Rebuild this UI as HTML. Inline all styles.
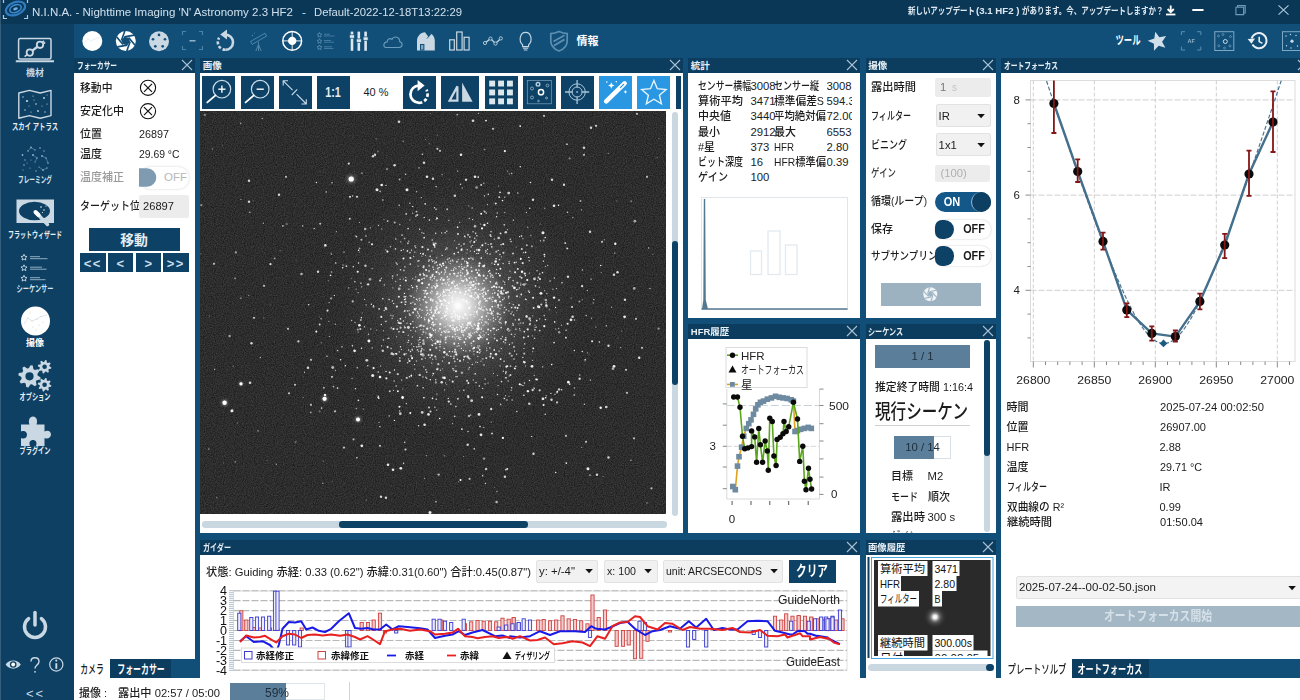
<!DOCTYPE html>
<html lang="ja"><head><meta charset="utf-8"><title>N.I.N.A.</title>
<style>
html,body{margin:0;padding:0;}
body{width:1300px;height:700px;overflow:hidden;background:#124f78;font-family:"Liberation Sans","Noto Sans CJK JP",sans-serif;position:relative;}
#app{position:absolute;left:0;top:0;width:1300px;height:700px;overflow:hidden;}
#app>div,#app>svg,#app>span{position:absolute;}
.t{white-space:nowrap;display:block;font-weight:500;}
svg{overflow:visible;}
svg text{font-family:"Liberation Sans","Noto Sans CJK JP",sans-serif;}
</style></head><body><div id="app">
<div style="left:0px;top:0px;width:1300px;height:24px;background:#0b3757;"></div>
<div style="left:0px;top:24px;width:74px;height:676px;background:#0e4063;"></div>
<div style="left:74px;top:24px;width:1226px;height:34px;background:#124f78;"></div>
<div style="left:74px;top:678px;width:1226px;height:22px;background:#fff;"></div>
<span id="t0" class="t" style="left:32px;transform-origin:0 50%;top:2.8px;font-size:11.6px;line-height:17.4px;color:#cfe0ec;transform:scaleX(0.9932);">N.I.N.A. - Nighttime Imaging 'N' Astronomy 2.3 HF2</span>
<span id="t1" class="t" style="left:302px;transform-origin:0 50%;top:2.8px;font-size:11.6px;line-height:17.4px;color:#cfe0ec;">-</span>
<span id="t2" class="t" style="left:314px;transform-origin:0 50%;top:2.8px;font-size:11.6px;line-height:17.4px;color:#cfe0ec;transform:scaleX(0.9729);">Default-2022-12-18T13:22:29</span>
<span id="t3" class="t" style="left:908.4px;transform-origin:0 50%;top:4.4px;font-size:9.5px;line-height:14.2px;color:#dce8f0;font-weight:bold;transform:scaleX(0.7835);">新しいアップデート</span>
<span id="t4" class="t" style="left:975.5px;transform-origin:0 50%;top:4.4px;font-size:9.5px;line-height:14.2px;color:#dce8f0;font-weight:bold;transform:scaleX(1.0172);">(3.1 HF2 )</span>
<span id="t5" class="t" style="left:1022px;transform-origin:0 50%;top:4.4px;font-size:9.5px;line-height:14.2px;color:#dce8f0;font-weight:bold;transform:scaleX(0.7880);">があります。今、アップデートしますか？</span>
<span id="t6" class="t" style="left:35px;transform-origin:50% 50%;top:66.5px;font-size:9px;line-height:13.5px;color:#c5d8e5;font-weight:bold;transform:translateX(-50%) scaleX(1.0000);">機材</span>
<span id="t7" class="t" style="left:35px;transform-origin:50% 50%;top:120.5px;font-size:9px;line-height:13.5px;color:#e8f0f6;font-weight:bold;transform:translateX(-50%) scaleX(0.7041);">スカイ アトラス</span>
<span id="t8" class="t" style="left:35px;transform-origin:50% 50%;top:174.4px;font-size:9px;line-height:13.5px;color:#d5e3ee;font-weight:bold;transform:translateX(-50%) scaleX(0.6294);">フレーミング</span>
<span id="t9" class="t" style="left:35px;transform-origin:50% 50%;top:228.9px;font-size:9px;line-height:13.5px;color:#e8f0f6;font-weight:bold;transform:translateX(-50%) scaleX(0.6665);">フラットウィザード</span>
<span id="t10" class="t" style="left:35px;transform-origin:50% 50%;top:283.4px;font-size:9px;line-height:13.5px;color:#d5e3ee;font-weight:bold;transform:translateX(-50%) scaleX(0.6886);">シーケンサー</span>
<span id="t11" class="t" style="left:35px;transform-origin:50% 50%;top:337.4px;font-size:9px;line-height:13.5px;color:#ffffff;font-weight:bold;transform:translateX(-50%) scaleX(1.0000);">撮像</span>
<span id="t12" class="t" style="left:35px;transform-origin:50% 50%;top:391.4px;font-size:9px;line-height:13.5px;color:#e8f0f6;font-weight:bold;transform:translateX(-50%) scaleX(0.6886);">オプション</span>
<span id="t13" class="t" style="left:35px;transform-origin:50% 50%;top:445.4px;font-size:9px;line-height:13.5px;color:#e8f0f6;font-weight:bold;transform:translateX(-50%) scaleX(0.6886);">プラグイン</span>
<span id="t14" class="t" style="left:35.5px;transform-origin:50% 50%;top:684.2px;font-size:13px;line-height:19.5px;color:#c5d8e5;letter-spacing:2px;transform:translateX(-50%) scaleX(1.0000);">&lt;&lt;</span>
<span id="t15" class="t" style="left:587.5px;transform-origin:50% 50%;top:32.8px;font-size:11px;line-height:16.5px;color:#ffffff;font-weight:bold;transform:translateX(-50%) scaleX(1.0000);">情報</span>
<span id="t16" class="t" style="left:1128px;transform-origin:50% 50%;top:32.0px;font-size:12px;line-height:18.0px;color:#ffffff;font-weight:bold;transform:translateX(-50%) scaleX(0.6941);">ツール</span>
<div style="left:74px;top:58px;width:120.5px;height:14.5px;background:#0c3c5e;"></div>
<div style="left:74px;top:72.5px;width:120.5px;height:586.5px;background:#fff;"></div>
<span id="t17" class="t" style="left:76.8px;transform-origin:0 50%;top:59.4px;font-size:9.5px;line-height:14.2px;color:#e8f0f5;font-weight:bold;transform:scaleX(0.7016);">フォーカサー</span>
<svg style="left:181.0px;top:59.25px" width="12" height="12" viewBox="0 0 12 12"><path d="M1 1L11 11M11 1L1 11" stroke="#a9c2d2" stroke-width="1.1" fill="none"/></svg>
<span id="t18" class="t" style="left:79.5px;transform-origin:0 50%;top:79.8px;font-size:11.3px;line-height:17.0px;color:#1c1c1c;transform:scaleX(0.9585);">移動中</span>
<span id="t19" class="t" style="left:79.5px;transform-origin:0 50%;top:103.2px;font-size:11.3px;line-height:17.0px;color:#1c1c1c;transform:scaleX(0.9734);">安定化中</span>
<span id="t20" class="t" style="left:79.5px;transform-origin:0 50%;top:125.5px;font-size:11.3px;line-height:17.0px;color:#1c1c1c;transform:scaleX(0.9730);">位置</span>
<span id="t21" class="t" style="left:138.8px;transform-origin:0 50%;top:125.5px;font-size:11.3px;line-height:17.0px;color:#1c1c1c;transform:scaleX(0.9547);">26897</span>
<span id="t22" class="t" style="left:79.5px;transform-origin:0 50%;top:145.5px;font-size:11.3px;line-height:17.0px;color:#1c1c1c;transform:scaleX(0.9730);">温度</span>
<span id="t23" class="t" style="left:138.8px;transform-origin:0 50%;top:145.5px;font-size:11.3px;line-height:17.0px;color:#1c1c1c;transform:scaleX(0.9185);">29.69 °C</span>
<span id="t24" class="t" style="left:79.5px;transform-origin:0 50%;top:169.0px;font-size:11.3px;line-height:17.0px;color:#9a9a9a;transform:scaleX(0.9734);">温度補正</span>
<div style="left:139.5px;top:166.5px;width:49px;height:22px;background:#fff;border-radius:11px;box-shadow:0 0 2.5px #cfcfcf;"></div>
<span id="t25" class="t" style="left:164px;transform-origin:0 50%;top:168.9px;font-size:11.5px;line-height:17.2px;color:#b8b8b8;">OFF</span>
<span id="t26" class="t" style="left:79.5px;transform-origin:0 50%;top:197.5px;font-size:11.3px;line-height:17.0px;color:#1c1c1c;transform:scaleX(0.8850);clip-path:inset(0 13% 0 0);">ターゲット位置</span>
<div style="left:139px;top:195px;width:50px;height:22.5px;background:#ececec;border-radius:2px;"></div>
<span id="t27" class="t" style="left:143px;transform-origin:0 50%;top:197.5px;font-size:11.3px;line-height:17.0px;color:#1c1c1c;transform:scaleX(0.9866);">26897</span>
<div style="left:88.5px;top:227.5px;width:91.5px;height:23px;background:#0d4166;"></div>
<span id="t28" class="t" style="left:134px;transform-origin:50% 50%;top:229.5px;font-size:14px;line-height:21.0px;color:#e4edf3;font-weight:bold;transform:translateX(-50%) scaleX(0.9893);">移動</span>
<div style="left:80px;top:253px;width:25.5px;height:19px;background:#0d4166;"></div>
<span id="t29" class="t" style="left:92.75px;transform-origin:50% 50%;top:253.8px;font-size:13px;line-height:19.5px;color:#c9dce8;font-weight:bold;letter-spacing:1.5px;transform:translateX(-50%) scaleX(1.0000);">&lt;&lt;</span>
<div style="left:107.5px;top:253px;width:25.5px;height:19px;background:#0d4166;"></div>
<span id="t30" class="t" style="left:120.25px;transform-origin:50% 50%;top:253.8px;font-size:13px;line-height:19.5px;color:#c9dce8;font-weight:bold;transform:translateX(-50%) scaleX(1.0000);">&lt;</span>
<div style="left:135.5px;top:253px;width:25.5px;height:19px;background:#0d4166;"></div>
<span id="t31" class="t" style="left:148.25px;transform-origin:50% 50%;top:253.8px;font-size:13px;line-height:19.5px;color:#c9dce8;font-weight:bold;transform:translateX(-50%) scaleX(1.0000);">&gt;</span>
<div style="left:163px;top:253px;width:25.5px;height:19px;background:#0d4166;"></div>
<span id="t32" class="t" style="left:175.75px;transform-origin:50% 50%;top:253.8px;font-size:13px;line-height:19.5px;color:#c9dce8;font-weight:bold;letter-spacing:1.5px;transform:translateX(-50%) scaleX(1.0000);">&gt;&gt;</span>
<div style="left:74px;top:659px;width:36px;height:19px;background:#fff;"></div>
<span id="t33" class="t" style="left:91.8px;transform-origin:50% 50%;top:661.3px;font-size:12px;line-height:18.0px;color:#1c1c1c;transform:translateX(-50%) scaleX(0.6525);">カメラ</span>
<div style="left:110px;top:659px;width:60.5px;height:19px;background:#0c3c5e;"></div>
<span id="t34" class="t" style="left:141.2px;transform-origin:50% 50%;top:661.3px;font-size:12px;line-height:18.0px;color:#ffffff;font-weight:bold;transform:translateX(-50%) scaleX(0.6596);">フォーカサー</span>
<div style="left:200px;top:58px;width:482.5px;height:14.5px;background:#0c3c5e;"></div>
<div style="left:200px;top:72.5px;width:482.5px;height:460.0px;background:#fff;"></div>
<span id="t35" class="t" style="left:202.8px;transform-origin:0 50%;top:59.4px;font-size:9.5px;line-height:14.2px;color:#e8f0f5;font-weight:bold;">画像</span>
<svg style="left:669.0px;top:59.25px" width="12" height="12" viewBox="0 0 12 12"><path d="M1 1L11 11M11 1L1 11" stroke="#a9c2d2" stroke-width="1.1" fill="none"/></svg>
<div style="left:202px;top:75.5px;width:33px;height:33.5px;background:#0d4166;"></div>
<div style="left:240.5px;top:75.5px;width:33px;height:33.5px;background:#0d4166;"></div>
<div style="left:278.5px;top:75.5px;width:33px;height:33.5px;background:#0d4166;"></div>
<div style="left:316.5px;top:75.5px;width:33px;height:33.5px;background:#0d4166;"></div>
<div style="left:402.5px;top:75.5px;width:33px;height:33.5px;background:#0d4166;"></div>
<div style="left:441px;top:75.5px;width:38px;height:33.5px;background:#0d4166;"></div>
<div style="left:484.5px;top:75.5px;width:33px;height:33.5px;background:#0d4166;"></div>
<div style="left:522.5px;top:75.5px;width:33px;height:33.5px;background:#0d4166;"></div>
<div style="left:560.5px;top:75.5px;width:33px;height:33.5px;background:#0d4166;"></div>
<div style="left:599px;top:75.5px;width:33px;height:33.5px;background:#2a97e2;"></div>
<div style="left:637px;top:75.5px;width:33px;height:33.5px;background:#2a97e2;"></div>
<div style="left:676px;top:75.5px;width:4.5px;height:33.5px;background:#0d4166;"></div>
<span id="t36" class="t" style="left:333px;transform-origin:50% 50%;top:81.8px;font-size:14.5px;line-height:21.8px;color:#e4edf3;font-weight:bold;transform:translateX(-50%) scaleX(0.7440);">1:1</span>
<span id="t37" class="t" style="left:376px;transform-origin:50% 50%;top:83.9px;font-size:11.5px;line-height:17.2px;color:#1c1c1c;transform:translateX(-50%) scaleX(0.9535);">40 %</span>
<svg style="left:200px;top:111.2px" width="466" height="403.8" viewBox="0 0 466 403.8"><defs><filter id="grain" color-interpolation-filters="sRGB" x="0" y="0" width="100%" height="100%"><feTurbulence type="fractalNoise" baseFrequency="0.9" numOctaves="2" seed="3" result="n"/><feColorMatrix in="n" type="matrix" values="0.22 0 0 0 0.066  0.22 0 0 0 0.066  0.22 0 0 0 0.066  0 0 0 0 1"/></filter><filter id="sb" x="-5%" y="-5%" width="110%" height="110%"><feGaussianBlur stdDeviation="0.6"/></filter><radialGradient id="core" cx="50%" cy="50%" r="50%"><stop offset="0" stop-color="#fff" stop-opacity="1"/><stop offset="0.1" stop-color="#fff" stop-opacity="0.92"/><stop offset="0.22" stop-color="#fff" stop-opacity="0.55"/><stop offset="0.4" stop-color="#fff" stop-opacity="0.26"/><stop offset="0.65" stop-color="#fff" stop-opacity="0.08"/><stop offset="1" stop-color="#fff" stop-opacity="0"/></radialGradient><radialGradient id="core2" cx="50%" cy="50%" r="50%"><stop offset="0" stop-color="#fff" stop-opacity="1"/><stop offset="0.22" stop-color="#fff" stop-opacity="0.95"/><stop offset="0.42" stop-color="#fff" stop-opacity="0.6"/><stop offset="0.7" stop-color="#fff" stop-opacity="0.22"/><stop offset="1" stop-color="#fff" stop-opacity="0"/></radialGradient><clipPath id="sc"><rect x="0" y="0" width="466" height="403"/></clipPath></defs><g clip-path="url(#sc)"><rect width="466" height="403.8" fill="#272727"/><rect width="466" height="403.8" filter="url(#grain)"/><circle cx="258" cy="194.8" r="125" fill="url(#core)" opacity="0.5"/><circle cx="258" cy="194.8" r="52" fill="url(#core2)" opacity="0.72"/><circle cx="151.2" cy="68.0" r="7.5" fill="url(#core)" opacity="0.9"/><circle cx="24.6" cy="291.8" r="6" fill="url(#core)" opacity="0.9"/><circle cx="124.6" cy="287.8" r="5.5" fill="url(#core)" opacity="0.9"/><circle cx="158.0" cy="308.4" r="5.5" fill="url(#core)" opacity="0.9"/><circle cx="41.0" cy="272.8" r="4" fill="url(#core)" opacity="0.9"/><g filter="url(#sb)" fill="#fff"><circle cx="151.2" cy="68.0" r="2.6" opacity="1"/><circle cx="24.6" cy="291.8" r="2.2" opacity="1"/><circle cx="124.6" cy="287.8" r="2.1" opacity="1"/><circle cx="158.0" cy="308.4" r="2.0" opacity="1"/><circle cx="41.0" cy="272.8" r="1.6" opacity="1"/><circle cx="32.0" cy="299.8" r="1.5" opacity="0.9"/><circle cx="50.0" cy="271.8" r="1.3" opacity="0.8"/><circle cx="49.0" cy="69.8" r="1.2" opacity="0.8"/><circle cx="49.0" cy="90.8" r="1.2" opacity="0.8"/><circle cx="79.0" cy="83.8" r="1.2" opacity="0.8"/><circle cx="86.0" cy="65.8" r="1.1" opacity="0.7"/><circle cx="177.0" cy="78.8" r="1.5" opacity="0.9"/><circle cx="207.0" cy="78.8" r="1.5" opacity="0.9"/><circle cx="150.0" cy="85.8" r="1.1" opacity="0.8"/><circle cx="157.0" cy="85.8" r="1.1" opacity="0.8"/><circle cx="175.0" cy="43.8" r="1.2" opacity="0.8"/><circle cx="199.0" cy="10.8" r="1.3" opacity="0.8"/><circle cx="273.0" cy="9.8" r="1.3" opacity="0.8"/><circle cx="261.0" cy="43.8" r="1.3" opacity="0.9"/><circle cx="240.0" cy="39.8" r="1.1" opacity="0.7"/><circle cx="224.0" cy="51.8" r="1.2" opacity="0.8"/><circle cx="227.0" cy="65.8" r="1.3" opacity="0.9"/><circle cx="233.0" cy="67.8" r="1.2" opacity="0.8"/><circle cx="266.0" cy="68.8" r="1.2" opacity="0.8"/><circle cx="275.0" cy="65.8" r="1.3" opacity="0.9"/><circle cx="293.0" cy="17.8" r="1.1" opacity="0.7"/><circle cx="344.0" cy="4.8" r="1.1" opacity="0.7"/><circle cx="384.0" cy="36.8" r="1.2" opacity="0.8"/><circle cx="384.0" cy="43.8" r="1.1" opacity="0.7"/><circle cx="391.0" cy="16.8" r="1.2" opacity="0.8"/><circle cx="396.0" cy="14.8" r="1.1" opacity="0.8"/><circle cx="437.0" cy="2.8" r="1.1" opacity="0.7"/><circle cx="447.0" cy="65.8" r="1.1" opacity="0.7"/><circle cx="364.0" cy="73.8" r="1.2" opacity="0.8"/><circle cx="352.0" cy="68.8" r="1.2" opacity="0.8"/><circle cx="333.0" cy="88.8" r="1.2" opacity="0.8"/><circle cx="354.0" cy="94.8" r="1.3" opacity="0.9"/><circle cx="343.0" cy="121.8" r="1.5" opacity="0.9"/><circle cx="390.0" cy="120.8" r="1.2" opacity="0.8"/><circle cx="402.0" cy="130.8" r="1.1" opacity="0.7"/><circle cx="414.0" cy="163.8" r="1.2" opacity="0.8"/><circle cx="368.0" cy="165.8" r="1.2" opacity="0.8"/><circle cx="425.0" cy="188.8" r="1.2" opacity="0.8"/><circle cx="14.0" cy="152.8" r="1.1" opacity="0.7"/><circle cx="118.0" cy="160.8" r="1.2" opacity="0.8"/><circle cx="64.0" cy="174.8" r="1.1" opacity="0.7"/><circle cx="54.0" cy="206.8" r="1.1" opacity="0.7"/><circle cx="51.5" cy="232.3" r="1.2" opacity="0.8"/><circle cx="88.0" cy="217.8" r="1.1" opacity="0.7"/><circle cx="108.0" cy="256.8" r="1.3" opacity="0.8"/><circle cx="111.0" cy="248.8" r="1.1" opacity="0.7"/><circle cx="154.6" cy="239.8" r="1.4" opacity="0.9"/><circle cx="172.7" cy="264.6" r="1.5" opacity="0.9"/><circle cx="132.0" cy="265.8" r="1.1" opacity="0.7"/><circle cx="89.0" cy="282.3" r="1.1" opacity="0.7"/><circle cx="95.0" cy="273.8" r="1.1" opacity="0.7"/><circle cx="111.0" cy="293.8" r="1.1" opacity="0.7"/><circle cx="135.0" cy="300.3" r="1.1" opacity="0.7"/><circle cx="180.0" cy="334.8" r="1.1" opacity="0.7"/><circle cx="188.0" cy="353.8" r="1.3" opacity="0.9"/><circle cx="193.0" cy="358.8" r="1.3" opacity="0.9"/><circle cx="200.8" cy="357.3" r="1.4" opacity="0.9"/><circle cx="181.0" cy="385.8" r="1.2" opacity="0.8"/><circle cx="186.0" cy="386.8" r="1.2" opacity="0.8"/><circle cx="230.0" cy="401.5" r="1.5" opacity="0.9"/><circle cx="224.6" cy="313.8" r="1.3" opacity="0.9"/><circle cx="228.5" cy="303.4" r="1.3" opacity="0.9"/><circle cx="279.0" cy="303.4" r="1.4" opacity="0.9"/><circle cx="281.0" cy="323.8" r="1.4" opacity="0.9"/><circle cx="267.7" cy="333.8" r="1.2" opacity="0.8"/><circle cx="269.6" cy="367.8" r="1.1" opacity="0.7"/><circle cx="305.0" cy="365.8" r="1.2" opacity="0.8"/><circle cx="333.5" cy="342.8" r="1.2" opacity="0.8"/><circle cx="343.0" cy="287.8" r="1.4" opacity="0.9"/><circle cx="351.5" cy="288.8" r="1.2" opacity="0.8"/><circle cx="332.0" cy="255.3" r="1.4" opacity="0.9"/><circle cx="388.0" cy="357.8" r="1.5" opacity="0.9"/><circle cx="397.0" cy="363.8" r="1.2" opacity="0.8"/><circle cx="408.5" cy="346.5" r="1.2" opacity="0.8"/><circle cx="414.0" cy="255.3" r="1.4" opacity="0.9"/><circle cx="426.0" cy="258.8" r="1.1" opacity="0.7"/><circle cx="427.0" cy="281.8" r="1.1" opacity="0.7"/><circle cx="379.6" cy="267.8" r="1.2" opacity="0.8"/><circle cx="371.0" cy="208.8" r="1.4" opacity="0.9"/><circle cx="424.6" cy="205.8" r="1.4" opacity="0.9"/><circle cx="436.0" cy="207.8" r="1.1" opacity="0.7"/><circle cx="442.0" cy="236.8" r="1.1" opacity="0.7"/><circle cx="408.5" cy="234.8" r="1.2" opacity="0.8"/><circle cx="366.0" cy="324.8" r="1.1" opacity="0.7"/><circle cx="386.0" cy="330.8" r="1.1" opacity="0.7"/><circle cx="451.5" cy="377.3" r="1.1" opacity="0.7"/><circle cx="434.0" cy="327.3" r="1.1" opacity="0.7"/><circle cx="280.0" cy="224.6" r="0.81" opacity="0.58"/><circle cx="221.0" cy="235.2" r="0.62" opacity="0.81"/><circle cx="245.0" cy="200.4" r="0.62" opacity="0.59"/><circle cx="279.2" cy="155.6" r="0.62" opacity="0.68"/><circle cx="320.7" cy="174.1" r="0.76" opacity="0.76"/><circle cx="267.7" cy="183.2" r="0.64" opacity="0.63"/><circle cx="249.9" cy="215.2" r="0.95" opacity="0.65"/><circle cx="219.0" cy="149.7" r="0.67" opacity="0.83"/><circle cx="274.1" cy="200.9" r="0.63" opacity="0.88"/><circle cx="240.0" cy="235.7" r="0.76" opacity="0.79"/><circle cx="267.9" cy="161.2" r="0.84" opacity="0.69"/><circle cx="198.9" cy="185.7" r="1.01" opacity="0.90"/><circle cx="292.9" cy="190.6" r="0.62" opacity="0.77"/><circle cx="309.2" cy="265.0" r="0.71" opacity="0.55"/><circle cx="264.6" cy="125.2" r="0.76" opacity="0.96"/><circle cx="245.5" cy="161.0" r="0.77" opacity="0.84"/><circle cx="283.8" cy="155.3" r="1.10" opacity="0.80"/><circle cx="324.3" cy="220.6" r="0.85" opacity="0.87"/><circle cx="234.9" cy="296.2" r="0.67" opacity="0.88"/><circle cx="246.6" cy="197.5" r="0.63" opacity="0.61"/><circle cx="259.9" cy="178.5" r="0.62" opacity="0.69"/><circle cx="287.6" cy="164.7" r="0.62" opacity="0.79"/><circle cx="300.4" cy="157.8" r="0.95" opacity="0.95"/><circle cx="228.3" cy="211.8" r="0.66" opacity="0.96"/><circle cx="269.3" cy="216.6" r="0.63" opacity="0.68"/><circle cx="215.0" cy="168.6" r="0.64" opacity="0.51"/><circle cx="227.3" cy="226.8" r="0.75" opacity="0.98"/><circle cx="182.8" cy="187.7" r="0.78" opacity="0.88"/><circle cx="271.2" cy="185.5" r="0.92" opacity="0.96"/><circle cx="180.6" cy="255.0" r="0.68" opacity="0.60"/><circle cx="320.1" cy="219.6" r="0.62" opacity="0.67"/><circle cx="244.0" cy="216.1" r="0.62" opacity="0.50"/><circle cx="278.2" cy="209.3" r="0.66" opacity="0.54"/><circle cx="159.5" cy="111.5" r="0.62" opacity="0.69"/><circle cx="232.0" cy="223.7" r="0.62" opacity="0.95"/><circle cx="209.2" cy="199.6" r="0.62" opacity="0.60"/><circle cx="254.4" cy="232.6" r="0.96" opacity="0.64"/><circle cx="269.3" cy="191.3" r="0.73" opacity="0.63"/><circle cx="313.6" cy="204.1" r="0.73" opacity="0.99"/><circle cx="216.7" cy="80.7" r="0.64" opacity="0.75"/><circle cx="261.6" cy="169.4" r="0.73" opacity="0.92"/><circle cx="264.4" cy="231.3" r="0.95" opacity="0.99"/><circle cx="299.2" cy="86.1" r="0.95" opacity="0.90"/><circle cx="227.4" cy="191.5" r="0.66" opacity="0.54"/><circle cx="255.7" cy="206.9" r="0.64" opacity="0.89"/><circle cx="301.8" cy="177.0" r="1.15" opacity="0.98"/><circle cx="265.5" cy="233.7" r="0.63" opacity="0.66"/><circle cx="237.3" cy="174.9" r="1.04" opacity="0.94"/><circle cx="229.2" cy="154.8" r="0.93" opacity="0.59"/><circle cx="317.8" cy="157.9" r="0.92" opacity="0.91"/><circle cx="279.8" cy="238.6" r="0.92" opacity="0.73"/><circle cx="356.5" cy="177.6" r="0.67" opacity="0.76"/><circle cx="297.4" cy="264.3" r="0.62" opacity="0.63"/><circle cx="319.8" cy="273.3" r="0.96" opacity="0.99"/><circle cx="216.5" cy="249.9" r="0.74" opacity="0.62"/><circle cx="267.8" cy="193.0" r="0.81" opacity="0.82"/><circle cx="290.1" cy="162.4" r="0.96" opacity="0.67"/><circle cx="249.3" cy="225.3" r="0.64" opacity="0.84"/><circle cx="229.1" cy="210.5" r="0.62" opacity="0.97"/><circle cx="219.4" cy="204.9" r="0.76" opacity="0.97"/><circle cx="297.3" cy="173.1" r="0.72" opacity="0.82"/><circle cx="312.1" cy="201.0" r="0.69" opacity="0.65"/><circle cx="259.9" cy="188.9" r="0.63" opacity="0.80"/><circle cx="181.3" cy="167.2" r="0.65" opacity="0.82"/><circle cx="270.3" cy="140.1" r="0.62" opacity="0.83"/><circle cx="252.6" cy="225.7" r="0.91" opacity="0.81"/><circle cx="261.7" cy="138.2" r="1.06" opacity="0.78"/><circle cx="193.7" cy="192.6" r="0.72" opacity="0.89"/><circle cx="211.1" cy="185.2" r="0.71" opacity="0.98"/><circle cx="313.0" cy="142.5" r="1.09" opacity="0.69"/><circle cx="312.5" cy="175.1" r="0.98" opacity="0.62"/><circle cx="236.7" cy="202.7" r="0.62" opacity="0.68"/><circle cx="249.1" cy="179.2" r="0.92" opacity="0.96"/><circle cx="252.6" cy="170.7" r="0.81" opacity="0.63"/><circle cx="391.1" cy="168.1" r="0.63" opacity="0.98"/><circle cx="214.7" cy="198.2" r="1.16" opacity="0.94"/><circle cx="234.4" cy="205.3" r="0.72" opacity="0.73"/><circle cx="246.1" cy="219.9" r="0.86" opacity="0.53"/><circle cx="204.4" cy="215.2" r="0.62" opacity="0.73"/><circle cx="192.4" cy="189.9" r="0.62" opacity="0.99"/><circle cx="353.0" cy="178.2" r="0.62" opacity="0.70"/><circle cx="260.6" cy="181.0" r="0.64" opacity="0.62"/><circle cx="296.5" cy="171.5" r="0.95" opacity="0.69"/><circle cx="279.9" cy="183.0" r="0.76" opacity="0.89"/><circle cx="276.7" cy="201.7" r="0.84" opacity="0.77"/><circle cx="275.0" cy="188.1" r="0.80" opacity="0.93"/><circle cx="270.0" cy="180.0" r="0.62" opacity="0.95"/><circle cx="232.5" cy="234.3" r="0.75" opacity="0.97"/><circle cx="281.2" cy="218.5" r="0.73" opacity="0.68"/><circle cx="269.5" cy="212.7" r="0.62" opacity="0.66"/><circle cx="245.5" cy="228.5" r="0.90" opacity="0.71"/><circle cx="280.8" cy="240.3" r="0.66" opacity="0.53"/><circle cx="290.3" cy="197.8" r="0.87" opacity="0.83"/><circle cx="230.3" cy="199.1" r="1.08" opacity="0.60"/><circle cx="161.5" cy="237.3" r="0.71" opacity="0.94"/><circle cx="215.0" cy="193.0" r="0.84" opacity="0.99"/><circle cx="277.4" cy="161.8" r="0.85" opacity="0.86"/><circle cx="232.7" cy="229.7" r="0.62" opacity="0.62"/><circle cx="257.0" cy="177.2" r="0.64" opacity="0.64"/><circle cx="268.6" cy="178.9" r="1.01" opacity="0.88"/><circle cx="259.7" cy="228.5" r="0.65" opacity="0.79"/><circle cx="233.8" cy="203.1" r="0.64" opacity="0.99"/><circle cx="260.0" cy="249.9" r="1.12" opacity="0.72"/><circle cx="298.2" cy="195.1" r="0.67" opacity="0.80"/><circle cx="273.9" cy="243.3" r="0.72" opacity="0.51"/><circle cx="286.3" cy="212.1" r="0.68" opacity="0.55"/><circle cx="254.1" cy="205.6" r="0.63" opacity="0.84"/><circle cx="258.2" cy="141.4" r="0.81" opacity="0.90"/><circle cx="155.4" cy="277.7" r="0.65" opacity="0.99"/><circle cx="254.0" cy="170.8" r="0.80" opacity="0.56"/><circle cx="345.2" cy="126.6" r="0.79" opacity="0.90"/><circle cx="324.5" cy="272.0" r="0.73" opacity="0.81"/><circle cx="295.7" cy="92.6" r="0.96" opacity="0.84"/><circle cx="199.6" cy="68.4" r="0.84" opacity="0.68"/><circle cx="266.9" cy="204.3" r="0.66" opacity="0.60"/><circle cx="153.3" cy="155.7" r="0.79" opacity="0.86"/><circle cx="184.2" cy="199.6" r="0.62" opacity="0.93"/><circle cx="171.4" cy="193.2" r="0.74" opacity="0.87"/><circle cx="256.5" cy="177.7" r="0.64" opacity="0.58"/><circle cx="253.7" cy="162.5" r="0.63" opacity="0.90"/><circle cx="219.8" cy="228.5" r="0.71" opacity="0.88"/><circle cx="190.5" cy="135.6" r="0.80" opacity="0.58"/><circle cx="257.4" cy="218.9" r="0.88" opacity="0.72"/><circle cx="316.9" cy="199.3" r="0.62" opacity="0.70"/><circle cx="232.2" cy="129.0" r="0.83" opacity="0.71"/><circle cx="205.5" cy="206.3" r="0.70" opacity="0.61"/><circle cx="302.9" cy="326.9" r="1.14" opacity="0.98"/><circle cx="247.6" cy="197.5" r="0.95" opacity="0.99"/><circle cx="252.4" cy="240.7" r="0.63" opacity="0.98"/><circle cx="232.2" cy="180.7" r="0.62" opacity="0.82"/><circle cx="268.1" cy="174.0" r="0.72" opacity="0.96"/><circle cx="267.1" cy="269.7" r="1.04" opacity="0.80"/><circle cx="270.2" cy="195.1" r="0.71" opacity="0.79"/><circle cx="280.9" cy="221.9" r="0.66" opacity="0.72"/><circle cx="372.0" cy="196.0" r="0.89" opacity="0.94"/><circle cx="278.3" cy="185.0" r="0.86" opacity="0.97"/><circle cx="233.5" cy="219.4" r="0.67" opacity="1.00"/><circle cx="218.6" cy="240.6" r="0.69" opacity="0.70"/><circle cx="270.6" cy="203.8" r="0.97" opacity="0.71"/><circle cx="254.8" cy="226.1" r="0.72" opacity="0.66"/><circle cx="297.9" cy="183.9" r="1.02" opacity="0.93"/><circle cx="315.1" cy="161.3" r="1.09" opacity="0.83"/><circle cx="334.9" cy="218.8" r="0.87" opacity="0.79"/><circle cx="204.1" cy="127.8" r="0.64" opacity="0.56"/><circle cx="235.1" cy="198.7" r="0.66" opacity="0.71"/><circle cx="341.7" cy="182.6" r="0.64" opacity="0.87"/><circle cx="224.2" cy="182.5" r="0.67" opacity="0.64"/><circle cx="264.8" cy="219.1" r="1.05" opacity="0.81"/><circle cx="283.2" cy="178.5" r="1.17" opacity="0.79"/><circle cx="266.6" cy="216.8" r="0.62" opacity="0.74"/><circle cx="259.4" cy="214.3" r="0.64" opacity="0.84"/><circle cx="257.7" cy="60.1" r="0.68" opacity="0.77"/><circle cx="219.0" cy="231.8" r="0.66" opacity="0.57"/><circle cx="291.7" cy="188.1" r="0.62" opacity="0.81"/><circle cx="301.3" cy="145.8" r="0.63" opacity="0.70"/><circle cx="231.9" cy="213.3" r="0.69" opacity="0.98"/><circle cx="340.1" cy="113.0" r="0.62" opacity="0.55"/><circle cx="320.5" cy="148.2" r="0.70" opacity="0.84"/><circle cx="296.5" cy="176.3" r="0.96" opacity="0.95"/><circle cx="283.0" cy="214.6" r="0.63" opacity="0.82"/><circle cx="327.2" cy="168.9" r="0.86" opacity="0.87"/><circle cx="170.8" cy="218.0" r="0.74" opacity="0.55"/><circle cx="268.4" cy="286.3" r="1.07" opacity="0.87"/><circle cx="283.2" cy="220.2" r="0.64" opacity="0.86"/><circle cx="316.6" cy="243.2" r="0.62" opacity="0.82"/><circle cx="211.6" cy="232.9" r="0.63" opacity="0.85"/><circle cx="255.1" cy="203.0" r="0.70" opacity="0.99"/><circle cx="309.1" cy="150.4" r="0.71" opacity="0.68"/><circle cx="289.3" cy="187.1" r="0.85" opacity="0.72"/><circle cx="246.4" cy="194.9" r="0.83" opacity="0.77"/><circle cx="241.6" cy="167.0" r="1.07" opacity="0.68"/><circle cx="250.8" cy="206.1" r="0.68" opacity="0.88"/><circle cx="266.4" cy="168.2" r="0.88" opacity="0.81"/><circle cx="286.7" cy="189.5" r="0.65" opacity="0.94"/><circle cx="263.5" cy="224.5" r="0.90" opacity="0.71"/><circle cx="277.9" cy="241.2" r="0.63" opacity="0.77"/><circle cx="325.9" cy="172.8" r="0.62" opacity="0.76"/><circle cx="287.4" cy="190.1" r="0.62" opacity="0.56"/><circle cx="244.7" cy="205.1" r="1.04" opacity="0.96"/><circle cx="341.3" cy="193.5" r="1.08" opacity="0.73"/><circle cx="283.5" cy="184.2" r="0.88" opacity="0.54"/><circle cx="206.3" cy="242.7" r="0.67" opacity="0.73"/><circle cx="284.6" cy="195.3" r="0.64" opacity="0.74"/><circle cx="280.4" cy="189.8" r="0.63" opacity="0.74"/><circle cx="304.7" cy="101.5" r="0.69" opacity="0.56"/><circle cx="223.3" cy="229.4" r="1.07" opacity="0.66"/><circle cx="290.6" cy="170.9" r="0.62" opacity="0.77"/><circle cx="268.8" cy="94.9" r="0.62" opacity="0.55"/><circle cx="273.2" cy="186.7" r="0.64" opacity="0.91"/><circle cx="179.9" cy="315.7" r="0.64" opacity="0.99"/><circle cx="253.0" cy="257.6" r="0.86" opacity="0.72"/><circle cx="292.3" cy="195.6" r="0.89" opacity="0.97"/><circle cx="320.9" cy="172.1" r="0.62" opacity="0.68"/><circle cx="306.1" cy="181.8" r="1.11" opacity="0.76"/><circle cx="228.6" cy="208.2" r="0.71" opacity="0.97"/><circle cx="266.9" cy="169.5" r="0.88" opacity="0.94"/><circle cx="185.8" cy="138.9" r="0.65" opacity="0.72"/><circle cx="266.2" cy="156.2" r="0.62" opacity="0.66"/><circle cx="259.5" cy="279.8" r="0.62" opacity="0.55"/><circle cx="231.7" cy="244.3" r="1.14" opacity="0.96"/><circle cx="286.9" cy="211.2" r="0.62" opacity="0.81"/><circle cx="183.4" cy="219.8" r="0.63" opacity="0.77"/><circle cx="228.0" cy="138.5" r="0.89" opacity="0.95"/><circle cx="309.7" cy="242.6" r="0.98" opacity="0.71"/><circle cx="216.8" cy="235.8" r="0.88" opacity="0.66"/><circle cx="258.9" cy="226.1" r="0.63" opacity="0.96"/><circle cx="230.2" cy="246.7" r="0.67" opacity="1.00"/><circle cx="264.2" cy="245.7" r="0.94" opacity="0.87"/><circle cx="237.1" cy="198.0" r="0.95" opacity="0.94"/><circle cx="254.0" cy="208.4" r="0.62" opacity="0.66"/><circle cx="313.1" cy="169.7" r="0.67" opacity="0.95"/><circle cx="255.0" cy="240.9" r="0.91" opacity="0.98"/><circle cx="240.3" cy="183.0" r="0.79" opacity="0.67"/><circle cx="284.0" cy="225.8" r="0.63" opacity="0.69"/><circle cx="221.7" cy="145.2" r="0.63" opacity="0.52"/><circle cx="241.4" cy="161.6" r="0.63" opacity="0.72"/><circle cx="266.2" cy="167.7" r="0.74" opacity="0.57"/><circle cx="241.3" cy="207.3" r="0.74" opacity="0.87"/><circle cx="268.4" cy="211.5" r="0.84" opacity="0.77"/><circle cx="245.7" cy="226.4" r="1.11" opacity="0.72"/><circle cx="221.2" cy="239.5" r="0.68" opacity="0.95"/><circle cx="271.3" cy="232.2" r="0.87" opacity="0.66"/><circle cx="264.0" cy="190.7" r="0.68" opacity="0.94"/><circle cx="290.7" cy="166.1" r="0.70" opacity="0.64"/><circle cx="248.4" cy="191.7" r="0.80" opacity="0.97"/><circle cx="243.6" cy="181.4" r="0.67" opacity="0.81"/><circle cx="252.9" cy="218.3" r="0.73" opacity="0.97"/><circle cx="236.3" cy="196.1" r="0.94" opacity="0.99"/><circle cx="278.0" cy="214.6" r="1.10" opacity="0.99"/><circle cx="305.8" cy="211.0" r="1.07" opacity="0.76"/><circle cx="287.5" cy="138.3" r="0.63" opacity="0.92"/><circle cx="232.9" cy="211.5" r="0.98" opacity="0.94"/><circle cx="263.5" cy="221.0" r="0.68" opacity="0.82"/><circle cx="288.3" cy="223.5" r="0.64" opacity="0.90"/><circle cx="399.3" cy="231.0" r="0.75" opacity="0.91"/><circle cx="265.5" cy="183.0" r="0.62" opacity="0.85"/><circle cx="218.1" cy="155.1" r="0.65" opacity="0.77"/><circle cx="203.7" cy="221.3" r="0.81" opacity="0.78"/><circle cx="304.2" cy="201.4" r="0.79" opacity="0.80"/><circle cx="260.7" cy="164.5" r="0.92" opacity="0.79"/><circle cx="231.1" cy="199.2" r="0.62" opacity="0.62"/><circle cx="296.6" cy="219.2" r="0.69" opacity="0.81"/><circle cx="248.4" cy="184.0" r="0.62" opacity="0.90"/><circle cx="164.6" cy="188.3" r="0.62" opacity="0.81"/><circle cx="297.9" cy="182.5" r="0.62" opacity="0.95"/><circle cx="291.0" cy="120.7" r="0.63" opacity="0.99"/><circle cx="307.5" cy="181.4" r="1.06" opacity="0.64"/><circle cx="345.5" cy="155.3" r="0.62" opacity="0.74"/><circle cx="305.9" cy="266.8" r="1.04" opacity="0.70"/><circle cx="323.0" cy="274.6" r="0.72" opacity="0.97"/><circle cx="255.6" cy="223.3" r="0.72" opacity="0.72"/><circle cx="263.8" cy="207.3" r="0.63" opacity="0.98"/><circle cx="316.4" cy="151.1" r="0.63" opacity="0.92"/><circle cx="236.1" cy="190.7" r="0.80" opacity="0.74"/><circle cx="135.8" cy="152.0" r="0.76" opacity="0.96"/><circle cx="279.3" cy="193.9" r="0.79" opacity="0.76"/><circle cx="248.8" cy="290.6" r="1.16" opacity="0.84"/><circle cx="261.7" cy="155.7" r="0.69" opacity="0.65"/><circle cx="339.7" cy="219.6" r="0.95" opacity="0.69"/><circle cx="325.5" cy="188.2" r="0.76" opacity="0.88"/><circle cx="295.0" cy="195.2" r="0.62" opacity="0.63"/><circle cx="199.0" cy="220.8" r="0.72" opacity="0.96"/><circle cx="261.4" cy="217.5" r="0.81" opacity="0.53"/><circle cx="254.6" cy="199.1" r="0.62" opacity="0.74"/><circle cx="231.5" cy="179.9" r="0.77" opacity="0.66"/><circle cx="193.0" cy="204.8" r="0.62" opacity="0.98"/><circle cx="276.9" cy="219.8" r="0.62" opacity="0.87"/><circle cx="283.9" cy="72.3" r="0.68" opacity="0.70"/><circle cx="252.3" cy="187.7" r="0.75" opacity="0.74"/><circle cx="193.5" cy="217.9" r="1.09" opacity="0.90"/><circle cx="284.6" cy="176.9" r="0.62" opacity="0.82"/><circle cx="261.4" cy="237.4" r="0.62" opacity="0.92"/><circle cx="249.0" cy="191.9" r="1.09" opacity="0.63"/><circle cx="235.6" cy="177.3" r="0.72" opacity="0.87"/><circle cx="305.5" cy="284.7" r="0.65" opacity="0.72"/><circle cx="270.0" cy="185.1" r="0.92" opacity="0.90"/><circle cx="262.2" cy="188.7" r="0.88" opacity="0.79"/><circle cx="176.6" cy="219.1" r="0.63" opacity="0.60"/><circle cx="288.3" cy="202.1" r="0.66" opacity="0.91"/><circle cx="301.1" cy="133.6" r="0.86" opacity="0.70"/><circle cx="205.0" cy="216.6" r="0.92" opacity="0.82"/><circle cx="236.9" cy="169.5" r="1.12" opacity="0.67"/><circle cx="391.5" cy="207.2" r="0.64" opacity="0.68"/><circle cx="338.5" cy="166.5" r="0.88" opacity="0.73"/><circle cx="194.4" cy="309.4" r="0.64" opacity="0.97"/><circle cx="234.6" cy="134.2" r="0.82" opacity="0.99"/><circle cx="284.4" cy="154.3" r="0.84" opacity="0.95"/><circle cx="250.6" cy="150.1" r="0.76" opacity="0.72"/><circle cx="236.7" cy="174.7" r="0.62" opacity="0.97"/><circle cx="282.3" cy="198.8" r="0.62" opacity="0.97"/><circle cx="282.7" cy="224.5" r="0.62" opacity="0.55"/><circle cx="207.4" cy="139.9" r="0.84" opacity="0.90"/><circle cx="243.1" cy="185.6" r="0.66" opacity="0.93"/><circle cx="340.4" cy="129.8" r="0.62" opacity="0.95"/><circle cx="263.9" cy="214.9" r="0.62" opacity="0.55"/><circle cx="302.5" cy="89.6" r="0.80" opacity="0.94"/><circle cx="242.5" cy="257.8" r="0.62" opacity="0.60"/><circle cx="282.7" cy="277.4" r="0.65" opacity="0.77"/><circle cx="257.5" cy="205.9" r="0.64" opacity="0.90"/><circle cx="240.3" cy="230.8" r="1.12" opacity="0.81"/><circle cx="170.5" cy="116.8" r="0.62" opacity="0.77"/><circle cx="264.7" cy="150.1" r="0.66" opacity="0.89"/><circle cx="269.7" cy="247.8" r="1.00" opacity="0.59"/><circle cx="309.0" cy="285.3" r="0.62" opacity="0.66"/><circle cx="346.9" cy="182.7" r="0.62" opacity="0.80"/><circle cx="272.9" cy="147.1" r="0.63" opacity="0.81"/><circle cx="277.4" cy="161.4" r="0.64" opacity="0.98"/><circle cx="265.7" cy="227.8" r="0.85" opacity="0.81"/><circle cx="243.7" cy="178.8" r="0.62" opacity="0.92"/><circle cx="275.6" cy="122.4" r="0.79" opacity="0.74"/><circle cx="223.5" cy="220.9" r="1.03" opacity="0.59"/><circle cx="395.9" cy="216.1" r="0.63" opacity="0.70"/><circle cx="108.7" cy="193.7" r="0.67" opacity="0.96"/><circle cx="227.7" cy="202.2" r="0.73" opacity="0.91"/><circle cx="204.8" cy="127.2" r="0.66" opacity="0.73"/><circle cx="272.1" cy="174.2" r="0.82" opacity="0.91"/><circle cx="233.4" cy="204.5" r="0.91" opacity="0.84"/><circle cx="235.5" cy="200.1" r="1.03" opacity="0.68"/><circle cx="249.0" cy="220.8" r="0.85" opacity="0.94"/><circle cx="272.2" cy="215.3" r="0.64" opacity="0.73"/><circle cx="286.8" cy="239.5" r="0.65" opacity="0.66"/><circle cx="324.2" cy="242.6" r="1.12" opacity="0.60"/><circle cx="300.1" cy="190.6" r="0.93" opacity="0.90"/><circle cx="273.4" cy="237.3" r="0.80" opacity="0.60"/><circle cx="235.6" cy="213.1" r="0.62" opacity="0.76"/><circle cx="224.2" cy="106.4" r="0.72" opacity="0.86"/><circle cx="288.7" cy="231.7" r="0.78" opacity="0.77"/><circle cx="329.2" cy="149.7" r="0.69" opacity="0.84"/><circle cx="181.6" cy="234.8" r="0.63" opacity="0.90"/><circle cx="278.2" cy="66.1" r="0.85" opacity="0.95"/><circle cx="211.5" cy="139.2" r="0.70" opacity="0.72"/><circle cx="312.2" cy="231.9" r="0.68" opacity="0.92"/><circle cx="203.4" cy="138.7" r="0.64" opacity="0.77"/><circle cx="223.2" cy="162.5" r="0.68" opacity="0.88"/><circle cx="242.4" cy="172.7" r="0.91" opacity="0.76"/><circle cx="308.6" cy="186.9" r="0.62" opacity="0.83"/><circle cx="263.1" cy="170.2" r="1.09" opacity="0.82"/><circle cx="239.2" cy="185.6" r="0.74" opacity="0.90"/><circle cx="223.8" cy="155.1" r="0.96" opacity="0.82"/><circle cx="300.1" cy="181.0" r="0.63" opacity="0.88"/><circle cx="261.4" cy="153.2" r="0.62" opacity="0.99"/><circle cx="295.6" cy="208.4" r="0.64" opacity="0.76"/><circle cx="249.5" cy="199.4" r="0.68" opacity="0.89"/><circle cx="254.2" cy="233.3" r="0.63" opacity="0.91"/><circle cx="268.6" cy="247.0" r="0.94" opacity="0.76"/><circle cx="278.4" cy="215.7" r="0.91" opacity="0.93"/><circle cx="192.1" cy="207.3" r="0.75" opacity="0.68"/><circle cx="232.3" cy="165.1" r="0.95" opacity="0.93"/><circle cx="244.4" cy="240.8" r="0.74" opacity="0.62"/><circle cx="189.8" cy="280.3" r="0.99" opacity="0.70"/><circle cx="257.1" cy="235.3" r="0.69" opacity="0.65"/><circle cx="257.0" cy="189.4" r="0.64" opacity="0.69"/><circle cx="222.1" cy="199.3" r="0.69" opacity="0.86"/><circle cx="212.1" cy="247.0" r="1.08" opacity="0.95"/><circle cx="265.8" cy="180.5" r="1.05" opacity="0.92"/><circle cx="269.9" cy="174.2" r="0.80" opacity="0.53"/><circle cx="266.8" cy="192.1" r="0.81" opacity="0.69"/><circle cx="271.2" cy="210.8" r="0.63" opacity="0.92"/><circle cx="280.7" cy="226.1" r="1.05" opacity="0.92"/><circle cx="278.5" cy="178.6" r="0.78" opacity="0.92"/><circle cx="314.6" cy="151.6" r="0.92" opacity="0.94"/><circle cx="247.9" cy="168.8" r="0.73" opacity="0.91"/><circle cx="292.6" cy="164.3" r="0.75" opacity="0.70"/><circle cx="278.1" cy="218.1" r="0.71" opacity="0.57"/><circle cx="288.3" cy="232.4" r="0.71" opacity="0.81"/><circle cx="294.5" cy="153.5" r="0.62" opacity="0.94"/><circle cx="212.5" cy="176.5" r="0.82" opacity="0.94"/><circle cx="221.7" cy="214.5" r="1.12" opacity="0.58"/><circle cx="213.7" cy="145.3" r="0.62" opacity="0.85"/><circle cx="325.5" cy="164.7" r="0.65" opacity="0.99"/><circle cx="205.0" cy="199.8" r="1.04" opacity="0.55"/><circle cx="201.2" cy="139.5" r="0.66" opacity="0.95"/><circle cx="217.6" cy="201.1" r="0.73" opacity="0.92"/><circle cx="230.8" cy="206.2" r="0.68" opacity="0.83"/><circle cx="229.0" cy="296.5" r="0.96" opacity="0.76"/><circle cx="250.9" cy="245.3" r="0.72" opacity="0.99"/><circle cx="276.2" cy="129.2" r="0.65" opacity="0.72"/><circle cx="227.2" cy="176.8" r="0.80" opacity="0.92"/><circle cx="255.5" cy="180.9" r="1.03" opacity="0.83"/><circle cx="253.1" cy="209.4" r="0.62" opacity="0.66"/><circle cx="223.1" cy="142.9" r="0.92" opacity="0.97"/><circle cx="210.3" cy="153.1" r="0.79" opacity="0.89"/><circle cx="231.8" cy="139.9" r="0.63" opacity="0.88"/><circle cx="261.8" cy="148.0" r="0.62" opacity="0.65"/><circle cx="260.2" cy="181.3" r="1.06" opacity="0.87"/><circle cx="276.1" cy="159.0" r="0.92" opacity="0.83"/><circle cx="247.4" cy="225.1" r="0.68" opacity="0.72"/><circle cx="229.0" cy="160.0" r="1.08" opacity="0.57"/><circle cx="315.3" cy="208.8" r="0.62" opacity="0.93"/><circle cx="310.3" cy="166.4" r="0.69" opacity="0.53"/><circle cx="222.3" cy="172.2" r="1.09" opacity="0.99"/><circle cx="215.4" cy="220.1" r="0.62" opacity="0.87"/><circle cx="275.2" cy="218.3" r="0.62" opacity="0.51"/><circle cx="311.8" cy="244.8" r="1.12" opacity="0.59"/><circle cx="346.2" cy="284.8" r="0.62" opacity="0.90"/><circle cx="254.7" cy="164.0" r="0.63" opacity="0.56"/><circle cx="237.0" cy="107.2" r="0.99" opacity="0.90"/><circle cx="244.5" cy="181.1" r="0.85" opacity="0.79"/><circle cx="289.9" cy="187.7" r="0.86" opacity="0.52"/><circle cx="252.1" cy="186.8" r="0.95" opacity="0.59"/><circle cx="253.3" cy="159.4" r="0.63" opacity="0.95"/><circle cx="305.4" cy="212.9" r="0.67" opacity="0.84"/><circle cx="237.3" cy="154.2" r="0.62" opacity="0.93"/><circle cx="233.0" cy="163.6" r="0.79" opacity="0.77"/><circle cx="267.6" cy="154.7" r="1.10" opacity="0.92"/><circle cx="242.5" cy="250.0" r="0.62" opacity="0.99"/><circle cx="294.4" cy="128.1" r="0.65" opacity="0.85"/><circle cx="169.1" cy="131.2" r="0.65" opacity="0.78"/><circle cx="158.4" cy="289.4" r="0.83" opacity="0.85"/><circle cx="309.3" cy="63.0" r="0.64" opacity="0.51"/><circle cx="228.5" cy="210.0" r="0.76" opacity="0.93"/><circle cx="392.1" cy="230.2" r="0.97" opacity="0.93"/><circle cx="144.0" cy="141.1" r="0.64" opacity="0.95"/><circle cx="217.3" cy="104.0" r="1.06" opacity="0.74"/><circle cx="239.5" cy="188.5" r="0.93" opacity="0.66"/><circle cx="337.1" cy="159.7" r="0.63" opacity="0.85"/><circle cx="186.2" cy="210.2" r="0.63" opacity="0.69"/><circle cx="280.6" cy="113.1" r="0.70" opacity="0.59"/><circle cx="272.1" cy="96.9" r="0.63" opacity="0.84"/><circle cx="367.5" cy="101.3" r="0.73" opacity="0.80"/><circle cx="281.0" cy="250.2" r="0.63" opacity="0.65"/><circle cx="207.6" cy="251.8" r="0.75" opacity="0.76"/><circle cx="289.9" cy="236.9" r="0.62" opacity="1.00"/><circle cx="290.7" cy="219.7" r="0.80" opacity="0.92"/><circle cx="237.1" cy="180.6" r="0.66" opacity="0.82"/><circle cx="269.1" cy="197.1" r="1.16" opacity="0.95"/><circle cx="211.5" cy="174.6" r="0.64" opacity="0.92"/><circle cx="301.1" cy="180.2" r="0.90" opacity="0.93"/><circle cx="289.8" cy="202.3" r="0.63" opacity="0.65"/><circle cx="276.5" cy="200.7" r="0.75" opacity="0.95"/><circle cx="303.8" cy="179.5" r="1.05" opacity="0.57"/><circle cx="208.0" cy="231.3" r="0.62" opacity="0.99"/><circle cx="227.7" cy="182.2" r="0.80" opacity="0.98"/><circle cx="201.4" cy="238.4" r="0.69" opacity="0.64"/><circle cx="287.5" cy="201.9" r="0.64" opacity="0.74"/><circle cx="365.9" cy="226.7" r="0.92" opacity="0.89"/><circle cx="326.6" cy="188.7" r="0.62" opacity="0.63"/><circle cx="339.8" cy="163.0" r="0.83" opacity="0.71"/><circle cx="261.1" cy="134.9" r="0.62" opacity="0.73"/><circle cx="281.4" cy="217.3" r="0.71" opacity="0.64"/><circle cx="277.7" cy="218.8" r="0.83" opacity="0.52"/><circle cx="285.2" cy="268.1" r="0.62" opacity="0.97"/><circle cx="285.8" cy="182.9" r="1.00" opacity="0.96"/><circle cx="235.0" cy="202.5" r="0.62" opacity="0.97"/><circle cx="178.5" cy="114.4" r="0.70" opacity="0.73"/><circle cx="151.6" cy="209.5" r="0.79" opacity="0.63"/><circle cx="286.5" cy="205.1" r="0.86" opacity="0.83"/><circle cx="275.0" cy="177.4" r="0.64" opacity="0.77"/><circle cx="254.6" cy="219.3" r="0.98" opacity="0.73"/><circle cx="231.6" cy="196.2" r="0.65" opacity="0.97"/><circle cx="280.0" cy="191.9" r="0.62" opacity="0.96"/><circle cx="275.4" cy="262.6" r="0.71" opacity="0.71"/><circle cx="267.9" cy="225.3" r="0.66" opacity="1.00"/><circle cx="252.9" cy="214.3" r="1.04" opacity="0.57"/><circle cx="235.8" cy="271.5" r="1.14" opacity="0.53"/><circle cx="202.8" cy="278.1" r="0.62" opacity="0.51"/><circle cx="148.7" cy="176.9" r="0.63" opacity="0.78"/><circle cx="230.8" cy="182.1" r="0.62" opacity="0.65"/><circle cx="236.1" cy="108.3" r="0.63" opacity="0.58"/><circle cx="242.6" cy="182.7" r="0.72" opacity="0.70"/><circle cx="235.7" cy="176.4" r="0.85" opacity="0.93"/><circle cx="275.9" cy="251.1" r="0.62" opacity="0.90"/><circle cx="250.2" cy="152.6" r="0.62" opacity="0.93"/><circle cx="279.1" cy="163.4" r="1.00" opacity="0.80"/><circle cx="266.7" cy="189.5" r="0.71" opacity="0.95"/><circle cx="271.1" cy="224.8" r="0.97" opacity="0.75"/><circle cx="240.0" cy="213.1" r="0.77" opacity="0.51"/><circle cx="207.0" cy="212.3" r="0.73" opacity="0.61"/><circle cx="290.4" cy="124.0" r="1.00" opacity="0.73"/><circle cx="199.8" cy="246.9" r="0.89" opacity="0.57"/><circle cx="382.4" cy="158.9" r="0.71" opacity="0.81"/><circle cx="204.4" cy="182.4" r="0.62" opacity="0.99"/><circle cx="270.6" cy="221.8" r="0.62" opacity="0.69"/><circle cx="361.5" cy="214.0" r="0.62" opacity="0.89"/><circle cx="286.3" cy="197.9" r="0.77" opacity="0.84"/><circle cx="242.1" cy="144.4" r="0.62" opacity="0.95"/><circle cx="335.1" cy="216.6" r="0.62" opacity="0.81"/><circle cx="248.3" cy="244.6" r="0.62" opacity="0.77"/><circle cx="237.8" cy="182.1" r="1.00" opacity="0.63"/><circle cx="256.7" cy="137.0" r="0.63" opacity="0.94"/><circle cx="220.5" cy="214.6" r="0.98" opacity="0.82"/><circle cx="298.3" cy="179.7" r="0.91" opacity="0.73"/><circle cx="241.8" cy="221.3" r="0.69" opacity="0.99"/><circle cx="344.4" cy="143.6" r="0.95" opacity="0.95"/><circle cx="241.8" cy="193.1" r="1.11" opacity="0.98"/><circle cx="229.4" cy="209.6" r="0.80" opacity="0.75"/><circle cx="308.0" cy="217.4" r="0.69" opacity="0.81"/><circle cx="265.3" cy="203.3" r="1.13" opacity="0.92"/><circle cx="282.4" cy="134.2" r="1.02" opacity="0.96"/><circle cx="249.3" cy="184.4" r="0.64" opacity="0.88"/><circle cx="225.1" cy="186.1" r="1.07" opacity="0.86"/><circle cx="225.8" cy="190.8" r="0.69" opacity="0.98"/><circle cx="246.0" cy="226.8" r="0.81" opacity="0.61"/><circle cx="317.8" cy="178.4" r="0.72" opacity="0.70"/><circle cx="210.0" cy="184.7" r="0.62" opacity="0.62"/><circle cx="251.6" cy="216.9" r="0.68" opacity="0.71"/><circle cx="285.2" cy="211.1" r="0.74" opacity="0.94"/><circle cx="200.1" cy="168.3" r="0.81" opacity="0.66"/><circle cx="181.3" cy="213.5" r="0.74" opacity="0.85"/><circle cx="239.7" cy="239.3" r="0.64" opacity="0.67"/><circle cx="218.4" cy="229.5" r="0.76" opacity="0.52"/><circle cx="283.8" cy="165.2" r="0.64" opacity="0.83"/><circle cx="246.8" cy="243.5" r="1.15" opacity="0.71"/><circle cx="308.1" cy="269.9" r="0.62" opacity="0.95"/><circle cx="301.3" cy="212.1" r="0.67" opacity="0.78"/><circle cx="322.9" cy="246.4" r="0.63" opacity="0.99"/><circle cx="305.7" cy="262.5" r="0.66" opacity="0.74"/><circle cx="203.5" cy="147.5" r="0.99" opacity="0.94"/><circle cx="254.2" cy="142.7" r="0.88" opacity="0.91"/><circle cx="268.9" cy="147.5" r="0.85" opacity="0.97"/><circle cx="274.0" cy="178.4" r="0.62" opacity="0.91"/><circle cx="196.9" cy="195.6" r="1.12" opacity="0.84"/><circle cx="267.5" cy="152.1" r="1.01" opacity="0.85"/><circle cx="217.9" cy="206.8" r="0.70" opacity="0.90"/><circle cx="230.5" cy="216.7" r="0.75" opacity="0.76"/><circle cx="266.7" cy="159.3" r="0.99" opacity="0.81"/><circle cx="277.0" cy="236.7" r="0.65" opacity="0.63"/><circle cx="205.8" cy="166.3" r="0.62" opacity="0.97"/><circle cx="278.9" cy="164.3" r="0.97" opacity="0.99"/><circle cx="231.9" cy="207.4" r="1.06" opacity="0.52"/><circle cx="243.7" cy="188.8" r="0.72" opacity="0.97"/><circle cx="168.1" cy="173.3" r="1.17" opacity="0.82"/><circle cx="236.7" cy="146.8" r="0.67" opacity="0.74"/><circle cx="221.1" cy="243.3" r="1.10" opacity="0.88"/><circle cx="302.4" cy="225.7" r="0.67" opacity="0.76"/><circle cx="205.8" cy="169.4" r="1.02" opacity="0.99"/><circle cx="210.6" cy="212.9" r="0.79" opacity="1.00"/><circle cx="219.5" cy="187.6" r="0.95" opacity="0.65"/><circle cx="295.0" cy="189.9" r="0.96" opacity="0.81"/><circle cx="275.2" cy="181.7" r="0.84" opacity="0.94"/><circle cx="135.4" cy="259.3" r="0.63" opacity="0.71"/><circle cx="204.7" cy="193.2" r="0.63" opacity="0.65"/><circle cx="204.9" cy="155.8" r="0.66" opacity="1.00"/><circle cx="323.1" cy="212.0" r="0.68" opacity="0.92"/><circle cx="244.7" cy="161.8" r="0.62" opacity="0.72"/><circle cx="159.6" cy="137.4" r="0.82" opacity="0.66"/><circle cx="208.9" cy="178.2" r="0.64" opacity="0.87"/><circle cx="313.2" cy="193.8" r="0.76" opacity="0.77"/><circle cx="270.6" cy="213.2" r="0.90" opacity="0.60"/><circle cx="268.0" cy="212.7" r="0.73" opacity="0.94"/><circle cx="280.4" cy="136.2" r="0.62" opacity="0.52"/><circle cx="217.4" cy="274.7" r="0.86" opacity="0.74"/><circle cx="255.2" cy="220.4" r="0.62" opacity="0.97"/><circle cx="222.7" cy="242.7" r="0.69" opacity="0.76"/><circle cx="270.7" cy="184.7" r="0.76" opacity="0.99"/><circle cx="223.9" cy="163.7" r="0.64" opacity="0.56"/><circle cx="210.3" cy="302.1" r="1.04" opacity="0.93"/><circle cx="229.0" cy="173.6" r="1.12" opacity="0.81"/><circle cx="233.4" cy="214.6" r="0.86" opacity="0.67"/><circle cx="284.0" cy="169.7" r="0.71" opacity="0.92"/><circle cx="272.8" cy="222.3" r="0.66" opacity="0.65"/><circle cx="225.2" cy="181.9" r="0.62" opacity="0.82"/><circle cx="223.2" cy="218.3" r="0.62" opacity="0.62"/><circle cx="193.6" cy="279.4" r="0.64" opacity="0.66"/><circle cx="260.8" cy="228.5" r="0.62" opacity="0.88"/><circle cx="279.8" cy="226.3" r="0.85" opacity="0.59"/><circle cx="275.2" cy="166.5" r="0.62" opacity="0.78"/><circle cx="296.0" cy="92.2" r="0.63" opacity="0.74"/><circle cx="199.8" cy="249.9" r="1.11" opacity="0.67"/><circle cx="265.5" cy="245.3" r="0.70" opacity="0.62"/><circle cx="252.7" cy="270.6" r="1.04" opacity="0.84"/><circle cx="259.0" cy="234.7" r="0.78" opacity="0.67"/><circle cx="350.9" cy="282.4" r="0.72" opacity="0.83"/><circle cx="262.6" cy="162.2" r="0.67" opacity="0.87"/><circle cx="236.0" cy="248.0" r="0.67" opacity="0.59"/><circle cx="274.1" cy="173.6" r="0.65" opacity="0.87"/><circle cx="237.9" cy="186.8" r="0.66" opacity="0.81"/><circle cx="290.8" cy="208.8" r="0.65" opacity="0.68"/><circle cx="253.2" cy="172.8" r="0.64" opacity="0.76"/><circle cx="326.8" cy="134.2" r="1.00" opacity="0.62"/><circle cx="291.8" cy="201.0" r="0.83" opacity="0.88"/><circle cx="224.0" cy="215.0" r="0.81" opacity="0.89"/><circle cx="276.5" cy="169.1" r="0.66" opacity="0.86"/><circle cx="278.6" cy="212.5" r="1.06" opacity="0.90"/><circle cx="334.9" cy="214.2" r="0.62" opacity="0.64"/><circle cx="248.6" cy="221.1" r="0.67" opacity="0.55"/><circle cx="234.2" cy="167.5" r="0.63" opacity="0.94"/><circle cx="245.7" cy="138.5" r="0.64" opacity="0.78"/><circle cx="214.5" cy="253.6" r="0.62" opacity="0.94"/><circle cx="236.9" cy="283.0" r="0.62" opacity="0.95"/><circle cx="318.9" cy="212.9" r="0.64" opacity="0.61"/><circle cx="282.1" cy="286.3" r="1.06" opacity="0.91"/><circle cx="251.3" cy="176.8" r="0.67" opacity="0.91"/><circle cx="236.7" cy="299.0" r="0.62" opacity="0.98"/><circle cx="299.2" cy="176.0" r="0.84" opacity="0.90"/><circle cx="181.8" cy="117.9" r="0.70" opacity="0.57"/><circle cx="188.8" cy="227.3" r="0.72" opacity="0.97"/><circle cx="259.7" cy="172.3" r="0.62" opacity="0.89"/><circle cx="250.9" cy="293.1" r="0.74" opacity="0.99"/><circle cx="192.9" cy="176.9" r="0.64" opacity="0.57"/><circle cx="223.7" cy="215.4" r="0.63" opacity="0.72"/><circle cx="251.6" cy="172.3" r="0.82" opacity="0.68"/><circle cx="226.3" cy="191.8" r="0.69" opacity="0.98"/><circle cx="245.8" cy="231.6" r="1.02" opacity="0.63"/><circle cx="228.6" cy="244.0" r="0.95" opacity="0.83"/><circle cx="301.5" cy="270.6" r="0.82" opacity="0.85"/><circle cx="262.9" cy="147.8" r="0.97" opacity="0.61"/><circle cx="235.4" cy="221.1" r="0.63" opacity="0.57"/><circle cx="269.3" cy="226.6" r="0.85" opacity="0.79"/><circle cx="248.0" cy="213.9" r="0.70" opacity="0.75"/><circle cx="281.8" cy="206.0" r="0.62" opacity="1.00"/><circle cx="333.3" cy="237.3" r="0.86" opacity="0.99"/><circle cx="303.5" cy="230.7" r="0.71" opacity="0.78"/><circle cx="230.9" cy="187.5" r="0.62" opacity="0.97"/><circle cx="210.4" cy="147.0" r="1.09" opacity="0.87"/><circle cx="258.8" cy="226.4" r="0.62" opacity="0.54"/><circle cx="307.5" cy="118.7" r="0.65" opacity="0.65"/><circle cx="296.3" cy="140.7" r="1.07" opacity="0.64"/><circle cx="304.2" cy="113.8" r="0.88" opacity="0.73"/><circle cx="270.6" cy="170.9" r="0.65" opacity="0.75"/><circle cx="219.0" cy="235.5" r="0.97" opacity="0.68"/><circle cx="244.6" cy="189.0" r="0.79" opacity="0.94"/><circle cx="322.7" cy="152.2" r="1.10" opacity="0.81"/><circle cx="286.6" cy="237.1" r="0.65" opacity="0.84"/><circle cx="250.7" cy="177.6" r="0.63" opacity="0.78"/><circle cx="277.4" cy="199.6" r="0.69" opacity="0.66"/><circle cx="339.4" cy="196.2" r="0.98" opacity="0.95"/><circle cx="172.2" cy="236.9" r="0.64" opacity="0.87"/><circle cx="210.8" cy="219.5" r="0.66" opacity="0.78"/><circle cx="291.0" cy="133.0" r="1.05" opacity="0.64"/><circle cx="224.5" cy="206.9" r="0.75" opacity="0.74"/><circle cx="282.5" cy="208.9" r="0.65" opacity="0.79"/><circle cx="382.1" cy="175.2" r="1.12" opacity="0.86"/><circle cx="354.1" cy="231.7" r="0.83" opacity="0.85"/><circle cx="225.7" cy="179.8" r="1.11" opacity="0.80"/><circle cx="237.0" cy="258.5" r="0.66" opacity="0.96"/><circle cx="262.8" cy="206.2" r="0.83" opacity="0.78"/><circle cx="247.5" cy="178.7" r="0.67" opacity="0.84"/><circle cx="213.9" cy="186.6" r="0.75" opacity="0.76"/><circle cx="267.4" cy="214.3" r="1.03" opacity="0.83"/><circle cx="272.3" cy="178.5" r="0.64" opacity="0.60"/><circle cx="257.5" cy="248.3" r="0.71" opacity="0.83"/><circle cx="230.4" cy="181.6" r="0.62" opacity="0.81"/><circle cx="311.8" cy="223.6" r="0.68" opacity="0.58"/><circle cx="288.6" cy="160.4" r="0.74" opacity="0.90"/><circle cx="324.6" cy="251.4" r="1.16" opacity="0.90"/><circle cx="268.2" cy="176.8" r="0.67" opacity="0.65"/><circle cx="267.2" cy="138.7" r="0.62" opacity="0.92"/><circle cx="259.4" cy="211.0" r="0.67" opacity="0.53"/><circle cx="272.3" cy="253.4" r="0.65" opacity="0.89"/><circle cx="293.0" cy="166.3" r="0.79" opacity="0.95"/><circle cx="308.9" cy="166.7" r="1.01" opacity="0.64"/><circle cx="211.3" cy="264.8" r="0.90" opacity="0.88"/><circle cx="335.7" cy="268.1" r="0.67" opacity="0.90"/><circle cx="336.2" cy="216.1" r="0.78" opacity="0.60"/><circle cx="276.7" cy="142.5" r="0.62" opacity="0.97"/><circle cx="255.9" cy="265.7" r="0.63" opacity="0.78"/><circle cx="159.3" cy="141.1" r="0.62" opacity="0.53"/><circle cx="264.8" cy="174.7" r="0.63" opacity="0.83"/><circle cx="244.4" cy="163.2" r="0.67" opacity="0.63"/><circle cx="130.5" cy="164.3" r="0.84" opacity="0.93"/><circle cx="252.6" cy="202.8" r="0.62" opacity="0.81"/><circle cx="298.5" cy="75.0" r="0.62" opacity="0.65"/><circle cx="212.7" cy="102.1" r="0.67" opacity="0.80"/><circle cx="272.5" cy="174.2" r="0.67" opacity="0.95"/><circle cx="315.0" cy="223.3" r="0.65" opacity="0.67"/><circle cx="136.4" cy="120.7" r="0.62" opacity="0.64"/><circle cx="218.3" cy="202.7" r="0.76" opacity="0.76"/><circle cx="298.0" cy="196.3" r="0.76" opacity="0.73"/><circle cx="247.0" cy="197.6" r="1.15" opacity="0.56"/><circle cx="246.2" cy="173.7" r="0.64" opacity="0.70"/><circle cx="254.0" cy="245.3" r="0.75" opacity="0.82"/><circle cx="245.3" cy="189.9" r="0.91" opacity="0.95"/><circle cx="195.8" cy="128.0" r="0.80" opacity="0.75"/><circle cx="267.8" cy="162.5" r="1.01" opacity="0.98"/><circle cx="233.3" cy="262.6" r="0.90" opacity="0.90"/><circle cx="223.0" cy="156.2" r="0.66" opacity="0.83"/><circle cx="298.9" cy="210.6" r="0.66" opacity="0.73"/><circle cx="224.1" cy="231.1" r="0.64" opacity="0.68"/><circle cx="284.1" cy="223.8" r="0.62" opacity="0.95"/><circle cx="212.8" cy="210.4" r="0.75" opacity="0.72"/><circle cx="282.3" cy="205.2" r="0.65" opacity="0.72"/><circle cx="180.1" cy="169.6" r="1.09" opacity="0.74"/><circle cx="311.3" cy="223.2" r="0.63" opacity="0.84"/><circle cx="264.2" cy="156.2" r="0.69" opacity="0.95"/><circle cx="240.2" cy="196.5" r="1.04" opacity="0.70"/><circle cx="290.6" cy="199.4" r="0.63" opacity="0.70"/><circle cx="273.4" cy="268.9" r="0.68" opacity="0.66"/><circle cx="299.5" cy="148.6" r="0.81" opacity="0.66"/><circle cx="339.3" cy="176.2" r="0.77" opacity="0.58"/><circle cx="330.9" cy="124.5" r="0.66" opacity="0.62"/><circle cx="230.8" cy="188.6" r="1.01" opacity="0.87"/><circle cx="244.2" cy="220.3" r="0.89" opacity="0.87"/><circle cx="239.0" cy="156.3" r="0.66" opacity="0.57"/><circle cx="300.9" cy="207.0" r="0.79" opacity="0.73"/><circle cx="215.8" cy="165.9" r="0.64" opacity="0.79"/><circle cx="266.8" cy="190.5" r="0.75" opacity="1.00"/><circle cx="245.5" cy="184.3" r="0.87" opacity="0.73"/><circle cx="269.3" cy="211.2" r="0.62" opacity="0.92"/><circle cx="265.8" cy="176.9" r="0.68" opacity="0.82"/><circle cx="200.2" cy="174.6" r="0.81" opacity="0.85"/><circle cx="255.9" cy="157.7" r="0.64" opacity="0.89"/><circle cx="272.6" cy="108.6" r="0.65" opacity="0.92"/><circle cx="249.5" cy="240.6" r="0.73" opacity="0.98"/><circle cx="281.6" cy="196.1" r="0.71" opacity="0.87"/><circle cx="197.8" cy="263.2" r="1.16" opacity="0.68"/><circle cx="332.7" cy="240.7" r="0.62" opacity="0.62"/><circle cx="241.0" cy="194.6" r="0.75" opacity="0.65"/><circle cx="282.2" cy="226.8" r="0.63" opacity="0.90"/><circle cx="283.6" cy="199.4" r="0.91" opacity="0.69"/><circle cx="223.8" cy="156.7" r="0.66" opacity="0.93"/><circle cx="236.3" cy="236.9" r="1.05" opacity="0.61"/><circle cx="334.5" cy="227.2" r="0.80" opacity="0.76"/><circle cx="374.3" cy="239.4" r="0.75" opacity="0.77"/><circle cx="268.7" cy="258.2" r="0.64" opacity="0.70"/><circle cx="263.4" cy="239.4" r="0.63" opacity="0.91"/><circle cx="237.5" cy="258.0" r="1.16" opacity="0.67"/><circle cx="290.8" cy="242.7" r="1.00" opacity="0.95"/><circle cx="258.3" cy="162.1" r="0.96" opacity="0.71"/><circle cx="219.8" cy="198.2" r="1.03" opacity="0.64"/><circle cx="197.2" cy="153.3" r="0.70" opacity="0.84"/><circle cx="292.0" cy="322.5" r="1.02" opacity="0.74"/><circle cx="319.6" cy="125.6" r="0.63" opacity="0.95"/><circle cx="293.5" cy="200.1" r="0.62" opacity="0.99"/><circle cx="265.3" cy="190.4" r="0.62" opacity="0.90"/><circle cx="268.1" cy="212.4" r="0.83" opacity="0.59"/><circle cx="292.0" cy="176.3" r="0.86" opacity="0.96"/><circle cx="259.3" cy="207.9" r="0.93" opacity="0.89"/><circle cx="243.7" cy="194.4" r="0.63" opacity="0.78"/><circle cx="279.2" cy="197.4" r="1.16" opacity="0.72"/><circle cx="354.9" cy="283.5" r="0.71" opacity="0.62"/><circle cx="277.8" cy="235.0" r="0.83" opacity="0.63"/><circle cx="173.5" cy="194.4" r="0.62" opacity="0.74"/><circle cx="303.2" cy="170.2" r="0.66" opacity="0.67"/><circle cx="242.1" cy="63.7" r="0.64" opacity="0.65"/><circle cx="288.4" cy="208.4" r="0.62" opacity="0.81"/><circle cx="216.5" cy="179.9" r="0.66" opacity="0.52"/><circle cx="215.0" cy="135.0" r="0.74" opacity="0.83"/><circle cx="333.1" cy="186.7" r="1.01" opacity="0.90"/><circle cx="239.9" cy="233.2" r="0.68" opacity="0.99"/><circle cx="226.0" cy="222.0" r="0.68" opacity="0.63"/><circle cx="252.5" cy="190.5" r="1.07" opacity="0.69"/><circle cx="212.1" cy="238.2" r="0.64" opacity="0.66"/><circle cx="270.3" cy="176.7" r="0.92" opacity="0.97"/><circle cx="252.6" cy="180.4" r="0.65" opacity="0.87"/><circle cx="235.1" cy="245.5" r="1.13" opacity="0.50"/><circle cx="310.2" cy="128.3" r="0.72" opacity="0.85"/><circle cx="236.5" cy="172.7" r="0.88" opacity="0.75"/><circle cx="195.7" cy="242.6" r="0.73" opacity="0.85"/><circle cx="225.8" cy="258.8" r="0.79" opacity="0.83"/><circle cx="234.8" cy="175.6" r="0.64" opacity="0.97"/><circle cx="249.2" cy="147.3" r="0.73" opacity="0.80"/><circle cx="277.1" cy="217.7" r="1.08" opacity="0.82"/><circle cx="204.3" cy="185.7" r="0.95" opacity="0.68"/><circle cx="269.7" cy="171.4" r="0.70" opacity="0.87"/><circle cx="343.7" cy="129.5" r="1.01" opacity="0.56"/><circle cx="278.8" cy="159.3" r="0.95" opacity="0.62"/><circle cx="257.8" cy="219.4" r="0.62" opacity="0.74"/><circle cx="158.1" cy="181.7" r="0.70" opacity="0.59"/><circle cx="301.2" cy="194.0" r="0.84" opacity="0.79"/><circle cx="273.0" cy="148.3" r="0.90" opacity="0.63"/><circle cx="208.5" cy="248.0" r="0.73" opacity="0.68"/><circle cx="235.8" cy="228.6" r="0.67" opacity="0.53"/><circle cx="231.9" cy="182.8" r="0.62" opacity="0.65"/><circle cx="245.6" cy="271.9" r="0.65" opacity="0.69"/><circle cx="351.7" cy="253.6" r="0.80" opacity="0.95"/><circle cx="232.4" cy="207.8" r="0.93" opacity="0.86"/><circle cx="297.8" cy="205.7" r="0.69" opacity="0.75"/><circle cx="235.7" cy="268.8" r="0.68" opacity="0.87"/><circle cx="196.1" cy="275.0" r="0.67" opacity="0.84"/><circle cx="285.8" cy="189.9" r="0.86" opacity="0.75"/><circle cx="223.7" cy="255.8" r="0.62" opacity="0.91"/><circle cx="216.6" cy="188.2" r="0.72" opacity="0.96"/><circle cx="345.4" cy="208.6" r="0.77" opacity="0.79"/><circle cx="284.0" cy="154.8" r="0.68" opacity="0.80"/><circle cx="127.0" cy="245.3" r="0.71" opacity="0.81"/><circle cx="206.2" cy="102.9" r="0.88" opacity="0.76"/><circle cx="251.8" cy="182.0" r="0.75" opacity="0.92"/><circle cx="325.5" cy="254.9" r="0.63" opacity="0.58"/><circle cx="342.7" cy="255.8" r="0.62" opacity="0.91"/><circle cx="313.2" cy="214.1" r="0.83" opacity="0.89"/><circle cx="305.6" cy="211.4" r="0.84" opacity="0.77"/><circle cx="318.9" cy="194.1" r="0.95" opacity="0.95"/><circle cx="245.5" cy="215.5" r="0.73" opacity="0.51"/><circle cx="255.3" cy="227.9" r="0.65" opacity="0.69"/><circle cx="143.0" cy="154.1" r="0.72" opacity="0.77"/><circle cx="252.6" cy="209.4" r="1.00" opacity="0.93"/><circle cx="252.6" cy="312.4" r="0.63" opacity="0.56"/><circle cx="218.8" cy="233.4" r="0.70" opacity="0.80"/><circle cx="217.5" cy="238.9" r="0.94" opacity="0.66"/><circle cx="312.9" cy="212.5" r="0.65" opacity="0.82"/><circle cx="217.3" cy="177.7" r="0.65" opacity="0.70"/><circle cx="232.5" cy="287.3" r="0.85" opacity="0.93"/><circle cx="198.6" cy="211.7" r="1.08" opacity="0.78"/><circle cx="382.3" cy="240.5" r="0.69" opacity="0.87"/><circle cx="268.2" cy="183.2" r="0.62" opacity="0.85"/><circle cx="282.2" cy="182.4" r="0.75" opacity="0.93"/><circle cx="234.0" cy="150.0" r="0.83" opacity="0.71"/><circle cx="273.6" cy="170.4" r="0.62" opacity="0.97"/><circle cx="281.6" cy="211.7" r="0.62" opacity="0.92"/><circle cx="233.7" cy="158.3" r="0.64" opacity="0.97"/><circle cx="300.1" cy="254.8" r="0.62" opacity="0.89"/><circle cx="265.6" cy="182.5" r="0.65" opacity="0.68"/><circle cx="232.6" cy="248.3" r="0.75" opacity="0.63"/><circle cx="278.5" cy="164.0" r="0.62" opacity="0.93"/><circle cx="300.0" cy="203.4" r="0.67" opacity="0.87"/><circle cx="228.7" cy="186.4" r="0.62" opacity="0.79"/><circle cx="183.4" cy="228.9" r="0.83" opacity="0.61"/><circle cx="336.8" cy="268.5" r="1.07" opacity="1.00"/><circle cx="244.1" cy="246.2" r="0.66" opacity="0.91"/><circle cx="304.9" cy="173.3" r="0.62" opacity="0.80"/><circle cx="155.8" cy="124.9" r="0.74" opacity="0.59"/><circle cx="254.8" cy="218.1" r="1.03" opacity="0.94"/><circle cx="285.4" cy="181.2" r="0.62" opacity="0.85"/><circle cx="294.9" cy="181.8" r="0.81" opacity="0.56"/><circle cx="221.4" cy="206.4" r="0.64" opacity="0.91"/><circle cx="264.4" cy="169.1" r="0.65" opacity="0.58"/><circle cx="305.9" cy="226.7" r="0.74" opacity="0.92"/><circle cx="197.6" cy="209.3" r="0.62" opacity="0.81"/><circle cx="245.5" cy="178.8" r="0.62" opacity="0.84"/><circle cx="229.8" cy="222.2" r="0.82" opacity="0.64"/><circle cx="282.8" cy="185.5" r="0.65" opacity="0.94"/><circle cx="128.8" cy="210.4" r="0.62" opacity="0.60"/><circle cx="357.0" cy="281.7" r="0.72" opacity="0.82"/><circle cx="236.0" cy="199.2" r="0.63" opacity="0.82"/><circle cx="222.6" cy="232.8" r="0.63" opacity="0.76"/><circle cx="278.3" cy="215.0" r="0.64" opacity="0.95"/><circle cx="298.5" cy="162.6" r="0.62" opacity="0.98"/><circle cx="271.0" cy="146.9" r="0.76" opacity="0.89"/><circle cx="258.0" cy="164.8" r="0.63" opacity="0.70"/><circle cx="247.6" cy="202.8" r="0.73" opacity="0.71"/><circle cx="379.7" cy="264.0" r="0.76" opacity="0.68"/><circle cx="271.2" cy="135.8" r="0.85" opacity="0.57"/><circle cx="231.9" cy="176.6" r="1.15" opacity="0.55"/><circle cx="234.7" cy="135.9" r="0.95" opacity="0.74"/><circle cx="157.8" cy="218.6" r="1.07" opacity="0.52"/><circle cx="220.8" cy="218.6" r="0.62" opacity="0.69"/><circle cx="221.9" cy="121.7" r="0.62" opacity="0.74"/><circle cx="265.8" cy="217.2" r="0.63" opacity="0.73"/><circle cx="161.4" cy="206.8" r="0.72" opacity="0.92"/><circle cx="200.8" cy="130.8" r="0.63" opacity="0.86"/><circle cx="284.5" cy="84.9" r="0.62" opacity="0.90"/><circle cx="278.8" cy="227.6" r="1.12" opacity="0.88"/><circle cx="314.9" cy="257.4" r="0.96" opacity="0.98"/><circle cx="300.5" cy="122.4" r="0.94" opacity="0.85"/><circle cx="279.1" cy="154.7" r="0.92" opacity="0.95"/><circle cx="292.9" cy="186.3" r="0.73" opacity="0.98"/><circle cx="279.9" cy="190.5" r="0.92" opacity="0.69"/><circle cx="270.7" cy="304.0" r="0.63" opacity="0.79"/><circle cx="226.5" cy="196.2" r="1.05" opacity="0.88"/><circle cx="196.5" cy="242.9" r="0.92" opacity="0.93"/><circle cx="327.4" cy="169.0" r="0.96" opacity="0.77"/><circle cx="246.6" cy="179.1" r="0.97" opacity="0.73"/><circle cx="290.1" cy="143.1" r="0.93" opacity="0.51"/><circle cx="308.9" cy="199.9" r="0.62" opacity="0.93"/><circle cx="222.3" cy="168.0" r="0.70" opacity="0.73"/><circle cx="239.9" cy="217.8" r="0.98" opacity="0.86"/><circle cx="288.2" cy="212.9" r="0.64" opacity="0.89"/><circle cx="233.0" cy="156.1" r="0.94" opacity="0.61"/><circle cx="329.8" cy="213.4" r="0.96" opacity="0.65"/><circle cx="290.8" cy="186.1" r="0.66" opacity="0.68"/><circle cx="149.8" cy="107.7" r="1.04" opacity="0.76"/><circle cx="308.2" cy="180.9" r="0.72" opacity="1.00"/><circle cx="271.6" cy="171.0" r="0.63" opacity="0.82"/><circle cx="283.4" cy="185.9" r="0.70" opacity="0.93"/><circle cx="238.5" cy="220.0" r="0.62" opacity="0.83"/><circle cx="134.3" cy="184.3" r="0.67" opacity="0.97"/><circle cx="186.0" cy="74.4" r="0.62" opacity="0.86"/><circle cx="303.6" cy="182.8" r="0.66" opacity="0.87"/><circle cx="210.5" cy="240.4" r="0.73" opacity="0.88"/><circle cx="223.9" cy="232.9" r="1.14" opacity="0.57"/><circle cx="212.6" cy="95.6" r="0.75" opacity="0.78"/><circle cx="325.6" cy="141.3" r="0.87" opacity="0.91"/><circle cx="251.7" cy="206.8" r="0.62" opacity="0.98"/><circle cx="345.2" cy="303.2" r="0.77" opacity="0.84"/><circle cx="246.0" cy="204.2" r="0.89" opacity="0.87"/><circle cx="260.7" cy="161.3" r="0.65" opacity="0.83"/><circle cx="302.8" cy="188.8" r="0.81" opacity="0.93"/><circle cx="204.4" cy="243.3" r="1.12" opacity="0.89"/><circle cx="245.0" cy="267.1" r="0.63" opacity="0.84"/><circle cx="287.4" cy="93.5" r="0.66" opacity="0.63"/><circle cx="296.6" cy="158.5" r="0.63" opacity="0.90"/><circle cx="247.9" cy="218.7" r="0.62" opacity="0.71"/><circle cx="299.3" cy="186.3" r="1.12" opacity="0.65"/><circle cx="292.5" cy="182.5" r="0.63" opacity="0.73"/><circle cx="294.3" cy="223.3" r="0.64" opacity="0.76"/><circle cx="299.3" cy="185.5" r="0.64" opacity="0.66"/><circle cx="282.8" cy="155.3" r="0.80" opacity="0.92"/><circle cx="279.4" cy="224.2" r="0.89" opacity="0.79"/><circle cx="230.2" cy="145.3" r="0.89" opacity="0.70"/><circle cx="293.3" cy="175.2" r="0.73" opacity="0.71"/><circle cx="253.9" cy="259.3" r="0.91" opacity="0.55"/><circle cx="158.6" cy="152.0" r="0.66" opacity="0.98"/><circle cx="259.4" cy="227.3" r="0.62" opacity="0.83"/><circle cx="219.6" cy="118.2" r="0.68" opacity="0.93"/><circle cx="250.3" cy="214.7" r="0.80" opacity="0.99"/><circle cx="234.1" cy="134.0" r="0.91" opacity="0.76"/><circle cx="211.5" cy="264.2" r="0.67" opacity="0.93"/><circle cx="273.6" cy="230.2" r="1.01" opacity="0.82"/><circle cx="231.7" cy="148.8" r="1.04" opacity="0.62"/><circle cx="293.6" cy="210.0" r="0.68" opacity="0.81"/><circle cx="199.2" cy="94.3" r="0.76" opacity="0.76"/><circle cx="249.1" cy="252.1" r="0.98" opacity="0.92"/><circle cx="323.9" cy="284.2" r="0.82" opacity="0.91"/><circle cx="299.9" cy="164.6" r="1.04" opacity="0.91"/><circle cx="194.7" cy="111.5" r="1.02" opacity="0.62"/><circle cx="235.7" cy="122.4" r="0.78" opacity="0.70"/><circle cx="243.8" cy="184.4" r="0.96" opacity="0.70"/><circle cx="262.9" cy="223.3" r="0.62" opacity="0.88"/><circle cx="194.1" cy="270.0" r="0.85" opacity="0.58"/><circle cx="206.4" cy="292.7" r="0.62" opacity="0.86"/><circle cx="254.2" cy="218.0" r="0.62" opacity="0.78"/><circle cx="278.3" cy="142.4" r="0.62" opacity="0.94"/><circle cx="261.5" cy="215.8" r="0.79" opacity="0.74"/><circle cx="223.2" cy="179.3" r="0.63" opacity="0.93"/><circle cx="273.7" cy="170.6" r="0.94" opacity="0.82"/><circle cx="260.3" cy="182.2" r="0.62" opacity="0.81"/><circle cx="300.0" cy="211.8" r="0.79" opacity="0.90"/><circle cx="208.6" cy="229.5" r="0.72" opacity="0.85"/><circle cx="278.7" cy="172.8" r="1.16" opacity="0.93"/><circle cx="296.1" cy="191.6" r="0.62" opacity="0.80"/><circle cx="235.2" cy="201.4" r="0.83" opacity="0.89"/><circle cx="231.8" cy="233.9" r="0.63" opacity="0.76"/><circle cx="269.9" cy="226.5" r="0.88" opacity="0.81"/><circle cx="273.1" cy="237.7" r="0.85" opacity="0.66"/><circle cx="226.8" cy="182.8" r="0.85" opacity="0.99"/><circle cx="340.0" cy="168.0" r="1.07" opacity="0.90"/><circle cx="332.6" cy="224.9" r="0.63" opacity="0.52"/><circle cx="236.1" cy="75.6" r="0.79" opacity="0.70"/><circle cx="278.7" cy="228.1" r="0.79" opacity="1.00"/><circle cx="293.1" cy="204.5" r="0.63" opacity="0.74"/><circle cx="307.5" cy="60.1" r="0.70" opacity="0.60"/><circle cx="270.2" cy="212.0" r="0.91" opacity="0.80"/><circle cx="160.8" cy="209.0" r="0.96" opacity="0.62"/><circle cx="238.0" cy="186.6" r="0.72" opacity="0.67"/><circle cx="290.3" cy="199.0" r="1.05" opacity="0.89"/><circle cx="252.9" cy="149.9" r="0.67" opacity="0.93"/><circle cx="334.4" cy="277.6" r="0.62" opacity="0.67"/><circle cx="213.8" cy="235.6" r="0.62" opacity="0.94"/><circle cx="164.6" cy="215.8" r="0.62" opacity="0.96"/><circle cx="308.1" cy="218.0" r="0.65" opacity="0.86"/><circle cx="121.1" cy="207.7" r="0.80" opacity="0.67"/><circle cx="284.5" cy="177.5" r="0.67" opacity="0.60"/><circle cx="301.3" cy="237.5" r="0.63" opacity="0.79"/><circle cx="218.0" cy="150.0" r="0.85" opacity="0.78"/><circle cx="255.2" cy="177.7" r="0.62" opacity="0.80"/><circle cx="237.7" cy="157.4" r="0.86" opacity="0.68"/><circle cx="233.3" cy="132.0" r="0.70" opacity="0.63"/><circle cx="315.9" cy="218.2" r="0.64" opacity="1.00"/><circle cx="233.9" cy="213.6" r="0.92" opacity="0.94"/><circle cx="254.5" cy="129.8" r="0.62" opacity="0.60"/><circle cx="355.8" cy="217.9" r="0.62" opacity="0.68"/><circle cx="243.7" cy="168.9" r="1.08" opacity="0.87"/><circle cx="277.0" cy="221.4" r="0.62" opacity="0.91"/><circle cx="279.0" cy="191.3" r="0.85" opacity="0.65"/><circle cx="311.2" cy="279.3" r="0.72" opacity="0.60"/><circle cx="331.9" cy="135.2" r="1.06" opacity="0.51"/><circle cx="146.4" cy="155.1" r="0.96" opacity="0.81"/><circle cx="203.9" cy="159.4" r="0.93" opacity="0.58"/><circle cx="242.3" cy="190.3" r="0.65" opacity="0.76"/><circle cx="257.7" cy="187.0" r="0.62" opacity="0.94"/><circle cx="158.1" cy="221.0" r="0.62" opacity="0.87"/><circle cx="231.5" cy="207.1" r="0.62" opacity="0.99"/><circle cx="223.9" cy="238.8" r="0.62" opacity="0.90"/><circle cx="326.4" cy="101.4" r="0.62" opacity="0.75"/><circle cx="260.8" cy="159.8" r="0.62" opacity="0.85"/><circle cx="349.3" cy="198.7" r="0.62" opacity="0.61"/><circle cx="196.2" cy="152.0" r="0.73" opacity="0.79"/><circle cx="224.1" cy="167.3" r="0.81" opacity="0.97"/><circle cx="282.0" cy="117.4" r="1.06" opacity="0.94"/><circle cx="336.7" cy="209.7" r="0.83" opacity="0.95"/><circle cx="291.2" cy="163.8" r="0.63" opacity="0.98"/><circle cx="245.3" cy="150.9" r="0.64" opacity="0.72"/><circle cx="240.1" cy="229.1" r="0.62" opacity="0.78"/><circle cx="321.7" cy="166.8" r="0.90" opacity="0.94"/><circle cx="244.7" cy="278.8" r="0.64" opacity="0.77"/><circle cx="259.4" cy="205.8" r="1.03" opacity="0.97"/><circle cx="262.9" cy="158.1" r="0.91" opacity="0.96"/><circle cx="161.7" cy="175.8" r="0.62" opacity="0.94"/><circle cx="232.1" cy="169.1" r="0.66" opacity="0.82"/><circle cx="232.5" cy="189.9" r="0.81" opacity="0.82"/><circle cx="295.9" cy="172.7" r="0.84" opacity="0.99"/><circle cx="262.7" cy="213.7" r="0.64" opacity="0.97"/><circle cx="257.4" cy="204.3" r="0.86" opacity="1.00"/><circle cx="232.9" cy="204.8" r="0.84" opacity="0.89"/><circle cx="259.7" cy="111.3" r="0.64" opacity="0.69"/><circle cx="253.4" cy="183.3" r="0.63" opacity="0.69"/><circle cx="200.5" cy="158.8" r="0.81" opacity="0.85"/><circle cx="232.6" cy="264.6" r="0.62" opacity="0.58"/><circle cx="251.5" cy="202.3" r="0.62" opacity="0.61"/><circle cx="308.7" cy="185.3" r="0.84" opacity="0.70"/><circle cx="298.1" cy="274.6" r="0.62" opacity="0.72"/><circle cx="241.6" cy="154.9" r="0.69" opacity="0.90"/><circle cx="276.7" cy="186.6" r="0.66" opacity="0.94"/><circle cx="264.3" cy="183.5" r="0.63" opacity="0.95"/><circle cx="209.9" cy="108.9" r="0.64" opacity="0.52"/><circle cx="281.2" cy="179.5" r="0.63" opacity="0.87"/><circle cx="225.6" cy="144.4" r="0.63" opacity="0.63"/><circle cx="278.6" cy="192.6" r="0.67" opacity="0.87"/><circle cx="267.9" cy="251.5" r="0.62" opacity="0.53"/><circle cx="339.7" cy="279.3" r="1.12" opacity="0.75"/><circle cx="310.5" cy="255.1" r="0.92" opacity="0.69"/><circle cx="217.5" cy="189.1" r="0.62" opacity="0.69"/><circle cx="236.3" cy="288.2" r="0.67" opacity="0.91"/><circle cx="268.6" cy="222.6" r="0.63" opacity="0.76"/><circle cx="232.2" cy="164.0" r="0.70" opacity="0.95"/><circle cx="249.8" cy="181.6" r="0.97" opacity="0.68"/><circle cx="246.0" cy="199.6" r="0.62" opacity="0.79"/><circle cx="323.9" cy="237.5" r="0.62" opacity="0.80"/><circle cx="261.2" cy="220.7" r="0.69" opacity="0.61"/><circle cx="246.5" cy="208.1" r="0.70" opacity="0.98"/><circle cx="309.9" cy="219.1" r="0.63" opacity="0.91"/><circle cx="298.1" cy="153.5" r="1.12" opacity="0.95"/><circle cx="278.5" cy="187.5" r="0.73" opacity="0.68"/><circle cx="275.6" cy="175.4" r="0.63" opacity="0.59"/><circle cx="287.8" cy="179.9" r="0.70" opacity="0.90"/><circle cx="240.3" cy="200.0" r="0.65" opacity="0.67"/><circle cx="212.2" cy="247.7" r="0.62" opacity="0.99"/><circle cx="279.5" cy="239.1" r="0.62" opacity="0.87"/><circle cx="311.0" cy="202.8" r="0.70" opacity="0.91"/><circle cx="263.6" cy="248.7" r="0.72" opacity="0.85"/><circle cx="300.6" cy="248.1" r="0.94" opacity="0.98"/><circle cx="311.0" cy="130.5" r="0.67" opacity="0.97"/><circle cx="262.0" cy="221.2" r="0.77" opacity="0.97"/><circle cx="262.0" cy="213.1" r="0.62" opacity="0.78"/><circle cx="266.7" cy="216.8" r="0.89" opacity="0.84"/><circle cx="239.2" cy="156.5" r="0.62" opacity="0.98"/><circle cx="227.1" cy="199.2" r="0.72" opacity="0.98"/><circle cx="309.4" cy="192.2" r="0.79" opacity="0.67"/><circle cx="291.2" cy="298.0" r="1.17" opacity="0.79"/><circle cx="287.8" cy="187.6" r="0.65" opacity="0.77"/><circle cx="238.8" cy="161.6" r="0.62" opacity="0.75"/><circle cx="270.2" cy="172.5" r="0.62" opacity="0.85"/><circle cx="226.4" cy="203.9" r="0.75" opacity="0.89"/><circle cx="259.4" cy="218.2" r="0.62" opacity="0.99"/><circle cx="274.3" cy="213.2" r="0.73" opacity="0.84"/><circle cx="387.6" cy="241.8" r="0.63" opacity="0.64"/><circle cx="199.6" cy="212.3" r="0.68" opacity="0.96"/><circle cx="303.4" cy="141.8" r="1.11" opacity="0.70"/><circle cx="299.9" cy="208.5" r="1.06" opacity="0.60"/><circle cx="255.3" cy="204.9" r="0.64" opacity="0.99"/><circle cx="145.4" cy="254.8" r="0.73" opacity="0.95"/><circle cx="199.8" cy="113.5" r="0.72" opacity="0.61"/><circle cx="240.5" cy="168.8" r="0.76" opacity="0.93"/><circle cx="401.2" cy="161.3" r="0.63" opacity="0.58"/><circle cx="125.7" cy="134.1" r="0.63" opacity="0.89"/><circle cx="260.8" cy="226.6" r="0.66" opacity="0.82"/><circle cx="323.8" cy="226.5" r="0.88" opacity="0.86"/><circle cx="234.7" cy="152.3" r="0.93" opacity="0.52"/><circle cx="236.2" cy="151.2" r="0.85" opacity="0.87"/><circle cx="284.5" cy="188.0" r="0.92" opacity="0.68"/><circle cx="302.5" cy="183.1" r="0.63" opacity="0.77"/><circle cx="274.3" cy="337.8" r="0.87" opacity="0.74"/><circle cx="265.5" cy="126.0" r="0.62" opacity="0.67"/><circle cx="255.0" cy="223.7" r="0.62" opacity="0.62"/><circle cx="219.3" cy="215.2" r="0.62" opacity="0.84"/><circle cx="221.0" cy="240.7" r="0.85" opacity="0.78"/><circle cx="231.2" cy="197.8" r="0.62" opacity="0.88"/><circle cx="240.3" cy="213.2" r="1.12" opacity="0.92"/><circle cx="187.7" cy="110.1" r="0.80" opacity="0.89"/><circle cx="260.9" cy="167.2" r="0.65" opacity="0.69"/><circle cx="172.0" cy="133.3" r="0.99" opacity="0.96"/><circle cx="277.6" cy="251.3" r="0.62" opacity="0.82"/><circle cx="246.5" cy="273.5" r="0.62" opacity="0.51"/><circle cx="249.0" cy="170.2" r="0.62" opacity="0.68"/><circle cx="249.9" cy="163.2" r="1.15" opacity="0.53"/><circle cx="278.3" cy="186.2" r="1.13" opacity="0.63"/><circle cx="219.7" cy="189.6" r="0.65" opacity="0.77"/><circle cx="255.3" cy="243.5" r="0.62" opacity="0.59"/><circle cx="279.9" cy="208.5" r="0.79" opacity="0.89"/><circle cx="266.7" cy="163.5" r="0.87" opacity="0.74"/><circle cx="277.4" cy="241.0" r="1.08" opacity="0.83"/><circle cx="267.1" cy="207.6" r="0.84" opacity="0.76"/><circle cx="268.4" cy="272.0" r="0.93" opacity="0.93"/><circle cx="240.5" cy="184.6" r="0.63" opacity="0.89"/><circle cx="283.9" cy="100.0" r="0.63" opacity="0.60"/><circle cx="192.6" cy="167.3" r="0.62" opacity="0.66"/><circle cx="305.3" cy="231.7" r="0.80" opacity="0.68"/><circle cx="228.7" cy="209.6" r="0.73" opacity="0.90"/><circle cx="255.9" cy="182.1" r="0.63" opacity="0.71"/><circle cx="233.5" cy="133.4" r="0.78" opacity="0.97"/><circle cx="247.1" cy="221.0" r="0.82" opacity="0.70"/><circle cx="261.8" cy="219.4" r="0.91" opacity="0.94"/><circle cx="335.5" cy="174.9" r="0.93" opacity="0.72"/><circle cx="251.3" cy="159.3" r="0.62" opacity="0.85"/><circle cx="277.0" cy="200.7" r="0.72" opacity="0.63"/><circle cx="129.4" cy="225.4" r="0.63" opacity="0.61"/><circle cx="205.6" cy="188.0" r="0.66" opacity="0.90"/><circle cx="266.8" cy="142.1" r="0.62" opacity="0.58"/><circle cx="215.7" cy="199.1" r="0.64" opacity="0.88"/><circle cx="245.4" cy="221.6" r="0.71" opacity="0.89"/><circle cx="194.5" cy="259.0" r="0.69" opacity="0.97"/><circle cx="309.5" cy="233.5" r="0.70" opacity="0.86"/><circle cx="291.6" cy="202.6" r="1.14" opacity="0.97"/><circle cx="235.1" cy="199.6" r="0.79" opacity="0.72"/><circle cx="258.1" cy="177.4" r="0.91" opacity="0.78"/><circle cx="242.6" cy="206.6" r="0.62" opacity="0.99"/><circle cx="254.2" cy="209.9" r="0.90" opacity="0.62"/><circle cx="277.5" cy="203.8" r="0.63" opacity="0.82"/><circle cx="312.1" cy="289.0" r="0.63" opacity="0.91"/><circle cx="234.0" cy="232.5" r="0.62" opacity="0.69"/><circle cx="256.7" cy="216.5" r="0.88" opacity="0.96"/><circle cx="305.8" cy="181.8" r="0.78" opacity="0.71"/><circle cx="247.6" cy="148.3" r="0.87" opacity="0.62"/><circle cx="285.4" cy="187.7" r="0.62" opacity="0.93"/><circle cx="258.5" cy="232.5" r="0.64" opacity="0.79"/><circle cx="273.2" cy="175.6" r="0.65" opacity="0.65"/><circle cx="211.3" cy="264.7" r="0.63" opacity="0.77"/><circle cx="327.7" cy="116.2" r="0.76" opacity="0.52"/><circle cx="187.4" cy="140.6" r="1.04" opacity="0.98"/><circle cx="280.1" cy="164.8" r="0.95" opacity="0.70"/><circle cx="229.1" cy="222.9" r="0.66" opacity="0.75"/><circle cx="261.1" cy="215.8" r="1.05" opacity="0.77"/><circle cx="309.2" cy="152.3" r="0.89" opacity="0.69"/><circle cx="359.0" cy="189.0" r="0.87" opacity="0.91"/><circle cx="255.9" cy="295.6" r="0.81" opacity="0.75"/><circle cx="334.0" cy="277.0" r="0.74" opacity="0.73"/><circle cx="197.9" cy="280.2" r="0.98" opacity="0.95"/><circle cx="343.6" cy="294.0" r="1.09" opacity="0.91"/><circle cx="215.8" cy="136.6" r="0.62" opacity="0.95"/><circle cx="203.3" cy="210.0" r="0.66" opacity="0.92"/><circle cx="322.9" cy="127.7" r="0.63" opacity="0.74"/><circle cx="284.2" cy="213.3" r="0.65" opacity="0.54"/><circle cx="272.2" cy="289.7" r="0.62" opacity="0.58"/><circle cx="285.1" cy="273.0" r="0.70" opacity="0.76"/><circle cx="354.4" cy="167.0" r="0.65" opacity="0.86"/><circle cx="116.3" cy="220.6" r="1.04" opacity="0.90"/><circle cx="283.9" cy="169.3" r="0.76" opacity="0.60"/><circle cx="287.3" cy="142.5" r="0.73" opacity="0.80"/><circle cx="290.8" cy="165.1" r="0.82" opacity="0.67"/><circle cx="231.4" cy="224.7" r="1.11" opacity="0.89"/><circle cx="277.8" cy="183.3" r="0.62" opacity="0.85"/><circle cx="248.6" cy="150.9" r="0.69" opacity="0.59"/><circle cx="281.3" cy="147.0" r="0.92" opacity="0.74"/><circle cx="257.0" cy="165.3" r="0.94" opacity="0.67"/><circle cx="393.9" cy="188.5" r="0.69" opacity="0.75"/><circle cx="329.4" cy="162.1" r="0.63" opacity="0.72"/><circle cx="253.7" cy="158.0" r="0.63" opacity="0.83"/><circle cx="232.4" cy="150.7" r="0.62" opacity="0.98"/><circle cx="274.4" cy="140.5" r="0.63" opacity="0.97"/><circle cx="261.4" cy="139.3" r="1.01" opacity="0.75"/><circle cx="287.1" cy="199.0" r="0.72" opacity="0.96"/><circle cx="400.7" cy="154.5" r="0.72" opacity="0.98"/><circle cx="294.1" cy="239.1" r="0.79" opacity="0.93"/><circle cx="221.5" cy="168.4" r="0.64" opacity="0.70"/><circle cx="212.9" cy="191.2" r="0.70" opacity="0.59"/><circle cx="254.1" cy="200.7" r="0.86" opacity="0.91"/><circle cx="256.9" cy="225.4" r="0.73" opacity="0.65"/><circle cx="310.0" cy="160.1" r="0.63" opacity="0.84"/><circle cx="257.6" cy="116.2" r="0.86" opacity="0.89"/><circle cx="276.0" cy="166.7" r="1.07" opacity="0.56"/><circle cx="298.3" cy="218.4" r="0.62" opacity="0.93"/><circle cx="304.1" cy="250.3" r="0.70" opacity="0.87"/><circle cx="262.0" cy="157.5" r="0.64" opacity="0.66"/><circle cx="236.1" cy="208.3" r="0.79" opacity="0.72"/><circle cx="263.1" cy="219.5" r="0.62" opacity="0.66"/><circle cx="220.8" cy="193.8" r="0.63" opacity="0.80"/><circle cx="304.2" cy="187.1" r="0.71" opacity="0.98"/><circle cx="273.9" cy="240.3" r="0.77" opacity="0.63"/><circle cx="281.8" cy="206.2" r="0.85" opacity="0.99"/><circle cx="231.3" cy="228.6" r="0.68" opacity="0.74"/><circle cx="199.2" cy="240.9" r="0.62" opacity="0.95"/><circle cx="317.6" cy="197.1" r="0.99" opacity="0.90"/><circle cx="230.6" cy="166.5" r="1.07" opacity="0.76"/><circle cx="244.2" cy="237.6" r="0.75" opacity="0.87"/><circle cx="337.6" cy="169.3" r="0.62" opacity="0.75"/><circle cx="288.3" cy="83.2" r="0.77" opacity="0.88"/><circle cx="294.7" cy="182.0" r="0.74" opacity="0.76"/><circle cx="278.6" cy="212.5" r="1.04" opacity="0.93"/><circle cx="252.4" cy="205.7" r="0.71" opacity="0.81"/><circle cx="290.2" cy="170.6" r="0.66" opacity="0.82"/><circle cx="190.9" cy="204.3" r="0.66" opacity="0.76"/><circle cx="272.3" cy="134.4" r="0.64" opacity="0.75"/><circle cx="230.2" cy="226.2" r="1.06" opacity="0.82"/><circle cx="241.0" cy="223.7" r="0.96" opacity="0.64"/><circle cx="332.8" cy="204.8" r="0.63" opacity="0.57"/><circle cx="319.3" cy="273.4" r="0.63" opacity="0.57"/><circle cx="254.5" cy="162.5" r="0.86" opacity="0.97"/><circle cx="308.5" cy="168.6" r="0.62" opacity="0.97"/><circle cx="274.3" cy="236.9" r="0.89" opacity="0.95"/><circle cx="293.4" cy="217.6" r="1.01" opacity="0.91"/><circle cx="319.8" cy="186.0" r="0.62" opacity="0.57"/><circle cx="280.8" cy="197.8" r="0.85" opacity="0.86"/><circle cx="269.6" cy="213.0" r="0.63" opacity="0.85"/><circle cx="329.4" cy="181.4" r="0.66" opacity="0.99"/><circle cx="222.1" cy="223.3" r="0.64" opacity="0.68"/><circle cx="293.5" cy="262.4" r="0.63" opacity="0.63"/><circle cx="254.8" cy="156.3" r="0.62" opacity="0.82"/><circle cx="330.3" cy="209.8" r="0.69" opacity="0.92"/><circle cx="200.8" cy="212.2" r="1.02" opacity="0.85"/><circle cx="227.2" cy="217.7" r="1.10" opacity="0.95"/><circle cx="294.5" cy="238.9" r="0.63" opacity="0.76"/><circle cx="333.6" cy="196.9" r="0.94" opacity="0.92"/><circle cx="311.6" cy="196.6" r="0.93" opacity="0.77"/><circle cx="192.6" cy="165.0" r="0.87" opacity="0.77"/><circle cx="231.8" cy="252.2" r="0.67" opacity="0.70"/><circle cx="281.2" cy="102.8" r="0.96" opacity="1.00"/><circle cx="226.7" cy="261.1" r="0.89" opacity="0.70"/><circle cx="292.9" cy="247.0" r="0.99" opacity="0.80"/><circle cx="288.3" cy="179.3" r="0.62" opacity="0.98"/><circle cx="310.5" cy="264.0" r="0.90" opacity="0.84"/><circle cx="203.1" cy="221.0" r="1.08" opacity="0.59"/><circle cx="332.6" cy="249.4" r="0.64" opacity="0.61"/><circle cx="137.6" cy="239.5" r="0.87" opacity="0.69"/><circle cx="208.8" cy="130.2" r="0.62" opacity="0.81"/><circle cx="276.0" cy="271.6" r="0.81" opacity="0.70"/><circle cx="294.2" cy="175.5" r="1.10" opacity="1.00"/><circle cx="216.8" cy="175.5" r="0.94" opacity="0.91"/><circle cx="289.6" cy="159.4" r="0.68" opacity="0.98"/><circle cx="294.5" cy="227.5" r="0.89" opacity="0.63"/><circle cx="327.7" cy="218.4" r="1.15" opacity="0.83"/><circle cx="315.7" cy="255.3" r="0.80" opacity="0.75"/><circle cx="270.8" cy="166.0" r="0.62" opacity="0.80"/><circle cx="269.8" cy="179.4" r="1.03" opacity="0.55"/><circle cx="210.0" cy="204.0" r="0.86" opacity="0.90"/><circle cx="293.8" cy="179.2" r="0.63" opacity="0.62"/><circle cx="334.2" cy="264.3" r="0.63" opacity="0.81"/><circle cx="278.0" cy="227.0" r="1.08" opacity="0.80"/><circle cx="257.9" cy="287.7" r="1.06" opacity="0.67"/><circle cx="321.3" cy="183.5" r="0.91" opacity="0.86"/><circle cx="291.9" cy="152.3" r="0.69" opacity="0.60"/><circle cx="215.9" cy="105.1" r="0.88" opacity="0.68"/><circle cx="279.6" cy="152.3" r="1.12" opacity="0.97"/><circle cx="247.5" cy="171.8" r="0.75" opacity="0.77"/><circle cx="275.2" cy="214.3" r="0.70" opacity="0.80"/><circle cx="235.3" cy="219.0" r="0.75" opacity="0.91"/><circle cx="290.3" cy="245.6" r="1.03" opacity="0.75"/><circle cx="236.9" cy="183.1" r="1.13" opacity="0.76"/><circle cx="235.8" cy="245.6" r="0.62" opacity="0.66"/><circle cx="253.1" cy="216.6" r="0.79" opacity="0.83"/><circle cx="209.5" cy="250.0" r="1.10" opacity="0.86"/><circle cx="294.7" cy="153.2" r="0.82" opacity="0.74"/><circle cx="238.3" cy="253.2" r="1.13" opacity="0.69"/><circle cx="275.5" cy="195.8" r="0.75" opacity="0.67"/><circle cx="297.0" cy="229.5" r="0.97" opacity="0.88"/><circle cx="324.8" cy="162.6" r="1.16" opacity="0.88"/><circle cx="337.6" cy="195.7" r="0.62" opacity="0.78"/><circle cx="224.4" cy="179.8" r="0.62" opacity="0.77"/><circle cx="285.7" cy="141.5" r="0.62" opacity="0.66"/><circle cx="271.5" cy="171.8" r="0.62" opacity="0.98"/><circle cx="282.6" cy="172.5" r="0.72" opacity="0.73"/><circle cx="243.7" cy="154.4" r="0.62" opacity="0.94"/><circle cx="257.5" cy="173.6" r="0.64" opacity="0.63"/><circle cx="236.5" cy="161.1" r="1.11" opacity="1.00"/><circle cx="220.5" cy="142.4" r="0.63" opacity="0.90"/><circle cx="221.8" cy="237.8" r="1.04" opacity="0.69"/><circle cx="271.3" cy="214.7" r="0.62" opacity="0.84"/><circle cx="311.6" cy="276.8" r="0.72" opacity="0.84"/><circle cx="208.3" cy="224.3" r="0.74" opacity="0.53"/><circle cx="243.1" cy="202.4" r="0.64" opacity="0.91"/><circle cx="272.3" cy="167.2" r="0.64" opacity="0.59"/><circle cx="219.9" cy="226.4" r="0.66" opacity="0.91"/><circle cx="243.3" cy="168.9" r="0.97" opacity="0.79"/><circle cx="304.6" cy="171.3" r="0.78" opacity="0.65"/><circle cx="273.7" cy="203.4" r="0.65" opacity="0.59"/><circle cx="196.6" cy="225.8" r="0.65" opacity="0.81"/><circle cx="276.1" cy="220.5" r="0.65" opacity="0.73"/><circle cx="187.4" cy="227.6" r="0.63" opacity="0.56"/><circle cx="271.2" cy="176.6" r="0.81" opacity="0.64"/><circle cx="319.6" cy="217.8" r="0.72" opacity="0.73"/><circle cx="257.0" cy="174.3" r="0.86" opacity="0.81"/><circle cx="245.2" cy="172.3" r="0.69" opacity="0.87"/><circle cx="274.5" cy="183.6" r="0.62" opacity="0.67"/><circle cx="271.8" cy="234.8" r="0.62" opacity="0.88"/><circle cx="254.1" cy="232.1" r="0.82" opacity="0.67"/><circle cx="241.5" cy="155.6" r="0.69" opacity="0.64"/><circle cx="240.5" cy="190.1" r="1.16" opacity="0.97"/><circle cx="237.1" cy="194.5" r="0.71" opacity="0.66"/><circle cx="185.7" cy="196.7" r="0.94" opacity="0.71"/><circle cx="155.0" cy="211.6" r="0.62" opacity="0.80"/><circle cx="248.9" cy="174.1" r="0.84" opacity="0.84"/><circle cx="254.7" cy="180.4" r="0.94" opacity="0.61"/><circle cx="293.5" cy="206.9" r="0.76" opacity="0.90"/><circle cx="244.7" cy="158.6" r="0.66" opacity="0.89"/><circle cx="292.1" cy="190.2" r="0.69" opacity="0.51"/><circle cx="255.0" cy="175.4" r="1.00" opacity="0.86"/><circle cx="275.7" cy="177.0" r="0.86" opacity="0.61"/><circle cx="238.1" cy="158.9" r="0.62" opacity="0.55"/><circle cx="286.2" cy="167.3" r="1.16" opacity="0.72"/><circle cx="321.5" cy="125.1" r="0.77" opacity="0.99"/><circle cx="322.9" cy="173.4" r="0.75" opacity="0.66"/><circle cx="204.3" cy="200.4" r="0.66" opacity="0.75"/><circle cx="212.7" cy="167.7" r="0.63" opacity="0.70"/><circle cx="205.6" cy="193.6" r="0.68" opacity="0.88"/><circle cx="230.8" cy="189.4" r="0.64" opacity="0.92"/><circle cx="273.1" cy="120.7" r="0.73" opacity="0.69"/><circle cx="220.3" cy="231.3" r="0.64" opacity="0.76"/><circle cx="290.9" cy="125.4" r="0.71" opacity="0.90"/><circle cx="229.6" cy="203.4" r="0.66" opacity="0.72"/><circle cx="259.2" cy="155.6" r="0.87" opacity="0.67"/><circle cx="264.7" cy="165.2" r="0.81" opacity="0.88"/><circle cx="234.6" cy="133.6" r="0.64" opacity="0.57"/><circle cx="297.7" cy="202.7" r="1.12" opacity="0.82"/><circle cx="328.7" cy="180.1" r="0.94" opacity="0.68"/><circle cx="288.1" cy="218.5" r="0.93" opacity="0.90"/><circle cx="223.2" cy="231.1" r="0.64" opacity="0.80"/><circle cx="320.8" cy="147.8" r="0.99" opacity="0.95"/><circle cx="216.8" cy="216.4" r="0.65" opacity="0.99"/><circle cx="273.1" cy="217.2" r="0.64" opacity="0.97"/><circle cx="199.5" cy="295.8" r="0.99" opacity="0.96"/><circle cx="274.2" cy="236.3" r="0.91" opacity="0.75"/><circle cx="276.5" cy="182.2" r="0.69" opacity="0.76"/><circle cx="255.9" cy="255.1" r="0.62" opacity="0.76"/><circle cx="299.9" cy="197.6" r="0.67" opacity="0.91"/><circle cx="241.5" cy="161.1" r="0.79" opacity="0.66"/><circle cx="252.8" cy="185.0" r="0.78" opacity="0.71"/><circle cx="275.7" cy="172.7" r="1.05" opacity="0.68"/><circle cx="203.5" cy="168.0" r="0.65" opacity="0.55"/><circle cx="234.7" cy="165.8" r="0.77" opacity="0.81"/><circle cx="263.3" cy="216.4" r="0.65" opacity="0.77"/><circle cx="328.8" cy="146.4" r="0.68" opacity="1.00"/><circle cx="299.9" cy="143.5" r="0.70" opacity="0.84"/><circle cx="344.3" cy="215.2" r="1.13" opacity="0.93"/><circle cx="269.8" cy="126.0" r="0.81" opacity="1.00"/><circle cx="232.6" cy="217.9" r="0.70" opacity="0.86"/><circle cx="367.0" cy="33.2" r="0.86" opacity="0.76"/><circle cx="255.2" cy="238.8" r="1.07" opacity="0.78"/><circle cx="216.4" cy="204.7" r="0.70" opacity="0.51"/><circle cx="294.4" cy="217.5" r="0.75" opacity="0.78"/><circle cx="230.5" cy="300.6" r="1.01" opacity="0.81"/><circle cx="201.7" cy="191.2" r="0.82" opacity="0.75"/><circle cx="303.1" cy="152.5" r="0.74" opacity="0.73"/><circle cx="131.4" cy="143.2" r="0.71" opacity="0.59"/><circle cx="323.9" cy="250.7" r="0.96" opacity="0.82"/><circle cx="219.7" cy="263.9" r="1.21" opacity="0.73"/><circle cx="350.1" cy="170.0" r="0.74" opacity="0.76"/><circle cx="229.1" cy="149.1" r="0.97" opacity="0.78"/><circle cx="268.1" cy="285.1" r="1.12" opacity="0.79"/><circle cx="248.8" cy="109.4" r="0.68" opacity="0.67"/><circle cx="187.0" cy="58.1" r="0.82" opacity="0.80"/><circle cx="286.3" cy="247.1" r="0.95" opacity="0.89"/><circle cx="214.8" cy="141.1" r="0.69" opacity="0.85"/><circle cx="201.3" cy="191.5" r="0.72" opacity="0.83"/><circle cx="207.6" cy="199.9" r="0.92" opacity="0.62"/><circle cx="224.2" cy="126.7" r="0.86" opacity="0.86"/><circle cx="280.0" cy="315.6" r="0.78" opacity="0.94"/><circle cx="260.5" cy="73.3" r="0.74" opacity="0.79"/><circle cx="374.3" cy="284.0" r="0.91" opacity="0.55"/><circle cx="238.7" cy="363.6" r="1.21" opacity="0.65"/><circle cx="372.6" cy="205.8" r="1.28" opacity="0.78"/><circle cx="101.5" cy="163.1" r="1.23" opacity="0.66"/><circle cx="339.6" cy="207.9" r="0.73" opacity="0.57"/><circle cx="230.3" cy="168.2" r="0.68" opacity="0.64"/><circle cx="244.4" cy="266.8" r="1.33" opacity="0.97"/><circle cx="286.3" cy="102.1" r="0.71" opacity="0.97"/><circle cx="282.7" cy="364.7" r="0.68" opacity="0.97"/><circle cx="165.2" cy="118.1" r="1.23" opacity="0.63"/><circle cx="98.4" cy="230.4" r="1.12" opacity="0.79"/><circle cx="316.5" cy="178.8" r="0.71" opacity="0.91"/><circle cx="234.8" cy="132.2" r="0.76" opacity="0.68"/><circle cx="319.3" cy="177.1" r="0.75" opacity="0.81"/><circle cx="367.6" cy="212.7" r="1.07" opacity="0.91"/><circle cx="279.4" cy="275.1" r="0.74" opacity="0.90"/><circle cx="133.5" cy="275.7" r="0.84" opacity="0.64"/><circle cx="152.7" cy="190.4" r="1.12" opacity="0.66"/><circle cx="153.6" cy="328.3" r="1.16" opacity="0.60"/><circle cx="210.0" cy="141.6" r="0.81" opacity="0.75"/><circle cx="283.8" cy="316.5" r="0.78" opacity="0.51"/><circle cx="291.8" cy="135.8" r="0.86" opacity="0.85"/><circle cx="357.0" cy="291.4" r="1.11" opacity="0.71"/><circle cx="320.3" cy="55.7" r="0.78" opacity="0.88"/><circle cx="306.0" cy="229.0" r="0.77" opacity="0.81"/><circle cx="267.6" cy="245.5" r="1.24" opacity="0.76"/><circle cx="279.7" cy="241.8" r="0.88" opacity="0.66"/><circle cx="154.9" cy="170.7" r="0.78" opacity="0.81"/><circle cx="278.3" cy="185.5" r="0.69" opacity="0.55"/><circle cx="82.9" cy="114.9" r="0.85" opacity="0.67"/><circle cx="246.8" cy="120.3" r="0.70" opacity="0.84"/><circle cx="156.4" cy="297.6" r="0.81" opacity="0.57"/><circle cx="205.6" cy="63.3" r="0.69" opacity="0.83"/><circle cx="400.7" cy="296.8" r="1.20" opacity="0.95"/><circle cx="258.3" cy="227.6" r="0.68" opacity="0.69"/><circle cx="216.2" cy="197.5" r="0.71" opacity="0.72"/><circle cx="186.4" cy="267.3" r="1.12" opacity="0.90"/><circle cx="265.8" cy="239.9" r="0.68" opacity="0.73"/><circle cx="243.0" cy="152.6" r="1.11" opacity="1.00"/><circle cx="319.0" cy="208.7" r="1.08" opacity="0.77"/><circle cx="223.1" cy="276.7" r="0.68" opacity="0.98"/><circle cx="152.4" cy="234.8" r="0.78" opacity="0.92"/><circle cx="304.3" cy="287.5" r="0.76" opacity="0.96"/><circle cx="208.1" cy="117.6" r="0.87" opacity="0.79"/><circle cx="261.9" cy="318.1" r="0.87" opacity="0.95"/><circle cx="230.4" cy="223.7" r="1.26" opacity="0.99"/><circle cx="243.5" cy="180.4" r="0.93" opacity="0.94"/><circle cx="329.5" cy="269.5" r="0.72" opacity="0.89"/><circle cx="307.3" cy="357.9" r="0.94" opacity="0.87"/><circle cx="406.3" cy="214.7" r="0.78" opacity="0.73"/><circle cx="189.2" cy="304.9" r="0.68" opacity="0.88"/><circle cx="276.8" cy="124.8" r="0.72" opacity="0.83"/><circle cx="252.4" cy="149.1" r="0.68" opacity="0.98"/><circle cx="253.8" cy="169.9" r="0.75" opacity="0.65"/><circle cx="166.2" cy="194.1" r="0.77" opacity="0.61"/><circle cx="222.2" cy="301.4" r="1.42" opacity="0.76"/><circle cx="271.6" cy="289.7" r="1.42" opacity="0.73"/><circle cx="330.5" cy="71.6" r="0.76" opacity="0.91"/><circle cx="314.6" cy="240.0" r="0.68" opacity="0.79"/><circle cx="200.5" cy="216.7" r="1.09" opacity="0.70"/><circle cx="204.6" cy="188.5" r="0.77" opacity="0.98"/><circle cx="195.7" cy="170.5" r="0.77" opacity="0.55"/><circle cx="344.6" cy="145.6" r="0.72" opacity="0.84"/><circle cx="413.0" cy="257.7" r="1.34" opacity="0.61"/><circle cx="241.6" cy="122.0" r="0.68" opacity="0.75"/><circle cx="209.3" cy="202.8" r="0.68" opacity="0.63"/><circle cx="314.4" cy="225.6" r="0.68" opacity="0.66"/><circle cx="332.7" cy="279.0" r="1.17" opacity="0.77"/><circle cx="261.9" cy="261.8" r="1.20" opacity="0.56"/><circle cx="406.2" cy="296.0" r="1.37" opacity="0.77"/><circle cx="344.8" cy="97.2" r="0.68" opacity="0.57"/><circle cx="120.2" cy="112.7" r="1.03" opacity="0.70"/><circle cx="300.7" cy="293.4" r="0.78" opacity="0.71"/><circle cx="218.6" cy="314.8" r="0.71" opacity="0.87"/><circle cx="271.2" cy="156.4" r="0.82" opacity="0.68"/><circle cx="210.8" cy="192.3" r="0.82" opacity="0.90"/><circle cx="182.8" cy="239.7" r="1.28" opacity="0.70"/><circle cx="285.5" cy="132.3" r="0.91" opacity="0.66"/><circle cx="311.7" cy="62.4" r="0.87" opacity="0.58"/><circle cx="254.7" cy="250.4" r="0.92" opacity="0.66"/><circle cx="234.5" cy="96.8" r="0.68" opacity="0.87"/><circle cx="213.1" cy="201.5" r="0.95" opacity="0.88"/><circle cx="269.5" cy="223.6" r="1.40" opacity="0.76"/><circle cx="189.7" cy="261.4" r="1.00" opacity="0.91"/><circle cx="137.5" cy="277.1" r="0.88" opacity="0.81"/><circle cx="314.4" cy="176.8" r="1.41" opacity="0.92"/><circle cx="313.4" cy="109.1" r="0.70" opacity="0.91"/><circle cx="415.3" cy="132.8" r="1.19" opacity="0.96"/><circle cx="274.7" cy="127.2" r="0.80" opacity="0.72"/><circle cx="284.4" cy="114.0" r="1.20" opacity="0.94"/><circle cx="331.7" cy="325.4" r="0.69" opacity="0.84"/><circle cx="225.3" cy="247.2" r="0.68" opacity="0.64"/><circle cx="286.1" cy="358.0" r="1.21" opacity="0.73"/><circle cx="249.6" cy="269.0" r="0.76" opacity="0.52"/><circle cx="186.0" cy="260.4" r="0.68" opacity="0.95"/><circle cx="346.5" cy="195.0" r="1.40" opacity="0.68"/><circle cx="326.6" cy="205.0" r="0.68" opacity="0.89"/><circle cx="129.1" cy="191.6" r="0.70" opacity="0.71"/><circle cx="345.8" cy="189.1" r="1.27" opacity="0.62"/><circle cx="252.1" cy="171.8" r="1.15" opacity="0.89"/><circle cx="304.7" cy="86.1" r="0.69" opacity="0.82"/><circle cx="200.5" cy="235.8" r="0.69" opacity="0.89"/><circle cx="281.2" cy="73.9" r="0.93" opacity="0.85"/><circle cx="200.3" cy="302.7" r="1.34" opacity="0.75"/><circle cx="235.5" cy="232.6" r="1.02" opacity="0.98"/><circle cx="181.7" cy="74.0" r="1.36" opacity="0.92"/><circle cx="160.3" cy="218.0" r="1.08" opacity="0.72"/><circle cx="224.1" cy="164.1" r="1.15" opacity="0.69"/><circle cx="381.5" cy="98.9" r="0.68" opacity="0.62"/><circle cx="202.6" cy="286.5" r="1.38" opacity="1.00"/><circle cx="284.9" cy="100.8" r="0.93" opacity="0.65"/><circle cx="308.9" cy="220.3" r="0.79" opacity="0.53"/><circle cx="166.8" cy="249.3" r="1.39" opacity="0.77"/><circle cx="268.0" cy="320.5" r="0.72" opacity="0.80"/><circle cx="202.0" cy="124.2" r="0.83" opacity="0.73"/><circle cx="393.2" cy="191.9" r="0.69" opacity="0.73"/><circle cx="274.6" cy="205.6" r="0.68" opacity="0.77"/><circle cx="417.5" cy="161.3" r="1.19" opacity="0.84"/><circle cx="386.2" cy="204.6" r="0.75" opacity="0.70"/><circle cx="385.3" cy="248.7" r="0.85" opacity="0.75"/><circle cx="167.8" cy="254.7" r="0.68" opacity="0.90"/><circle cx="357.3" cy="280.6" r="0.90" opacity="0.95"/><circle cx="439.2" cy="246.8" r="1.26" opacity="0.88"/><circle cx="322.0" cy="160.7" r="1.18" opacity="0.96"/><circle cx="197.3" cy="163.9" r="0.75" opacity="0.71"/><circle cx="116.4" cy="71.4" r="0.73" opacity="0.83"/><circle cx="365.2" cy="132.0" r="0.87" opacity="1.00"/><circle cx="231.4" cy="201.4" r="0.86" opacity="0.90"/><circle cx="119.7" cy="213.5" r="0.94" opacity="0.82"/><circle cx="414.8" cy="142.1" r="0.68" opacity="0.73"/><circle cx="267.0" cy="160.9" r="0.68" opacity="0.87"/><circle cx="208.7" cy="239.0" r="0.70" opacity="0.89"/><circle cx="166.0" cy="125.0" r="0.73" opacity="0.84"/><circle cx="448.7" cy="136.9" r="0.70" opacity="0.81"/><circle cx="206.8" cy="266.9" r="1.14" opacity="0.65"/><circle cx="276.6" cy="76.5" r="1.36" opacity="0.53"/><circle cx="186.0" cy="197.9" r="1.36" opacity="0.64"/><circle cx="170.0" cy="168.3" r="1.34" opacity="0.57"/><circle cx="303.3" cy="260.2" r="0.69" opacity="0.72"/><circle cx="114.2" cy="117.6" r="0.68" opacity="0.93"/><circle cx="327.9" cy="280.2" r="1.17" opacity="0.94"/><circle cx="317.3" cy="171.8" r="1.15" opacity="0.68"/><circle cx="263.7" cy="188.7" r="1.18" opacity="0.60"/><circle cx="286.0" cy="9.6" r="0.94" opacity="0.94"/><circle cx="298.7" cy="127.0" r="1.33" opacity="0.72"/><circle cx="194.6" cy="54.2" r="1.21" opacity="0.84"/><circle cx="257.2" cy="265.5" r="0.85" opacity="0.62"/><circle cx="235.9" cy="132.6" r="0.98" opacity="0.61"/><circle cx="278.4" cy="2.4" r="0.72" opacity="0.60"/><circle cx="268.0" cy="123.9" r="0.80" opacity="0.93"/><circle cx="301.0" cy="227.8" r="0.74" opacity="0.96"/><circle cx="307.5" cy="218.7" r="1.07" opacity="0.59"/><circle cx="390.4" cy="269.1" r="0.70" opacity="0.88"/><circle cx="168.5" cy="223.3" r="0.68" opacity="0.74"/><circle cx="274.3" cy="131.0" r="1.02" opacity="0.92"/><circle cx="221.3" cy="86.6" r="0.68" opacity="0.76"/><circle cx="242.8" cy="266.6" r="1.06" opacity="0.67"/><circle cx="241.7" cy="271.3" r="1.24" opacity="0.87"/><circle cx="180.0" cy="266.0" r="1.33" opacity="0.98"/><circle cx="165.5" cy="154.7" r="1.23" opacity="0.69"/><circle cx="314.0" cy="235.9" r="0.82" opacity="0.92"/><circle cx="208.4" cy="216.5" r="1.46" opacity="0.80"/><circle cx="305.8" cy="121.2" r="1.28" opacity="0.75"/><circle cx="226.1" cy="159.0" r="1.06" opacity="0.97"/><circle cx="204.6" cy="331.3" r="0.83" opacity="0.71"/><circle cx="159.4" cy="214.2" r="1.32" opacity="0.97"/><circle cx="362.0" cy="171.8" r="0.69" opacity="0.97"/><circle cx="358.5" cy="94.2" r="0.77" opacity="1.00"/><circle cx="273.0" cy="174.2" r="1.17" opacity="0.75"/><circle cx="259.0" cy="133.3" r="0.80" opacity="0.77"/><circle cx="276.8" cy="138.8" r="1.05" opacity="0.59"/><circle cx="212.3" cy="239.0" r="0.77" opacity="0.84"/><circle cx="163.4" cy="298.1" r="0.68" opacity="0.58"/><circle cx="158.6" cy="139.2" r="0.79" opacity="0.99"/><circle cx="201.7" cy="269.0" r="0.77" opacity="0.65"/><circle cx="131.5" cy="161.0" r="0.77" opacity="0.69"/><circle cx="179.1" cy="197.9" r="0.79" opacity="0.99"/><circle cx="291.2" cy="311.1" r="0.68" opacity="0.64"/><circle cx="275.0" cy="115.2" r="1.28" opacity="0.68"/><circle cx="160.9" cy="172.2" r="0.85" opacity="0.55"/><circle cx="239.4" cy="163.1" r="1.00" opacity="0.75"/><circle cx="328.2" cy="225.3" r="0.86" opacity="0.87"/><circle cx="320.6" cy="212.0" r="0.81" opacity="0.55"/><circle cx="132.0" cy="71.7" r="0.71" opacity="0.78"/><circle cx="284.0" cy="254.0" r="0.69" opacity="0.93"/><circle cx="236.1" cy="98.2" r="0.74" opacity="0.93"/><circle cx="182.9" cy="89.0" r="0.76" opacity="0.83"/><circle cx="317.0" cy="185.3" r="0.98" opacity="0.82"/><circle cx="374.4" cy="277.0" r="0.73" opacity="0.68"/><circle cx="238.7" cy="201.6" r="1.24" opacity="0.92"/><circle cx="203.5" cy="352.3" r="0.70" opacity="0.89"/><circle cx="245.1" cy="121.8" r="0.74" opacity="0.91"/><circle cx="308.7" cy="82.1" r="1.45" opacity="0.75"/><circle cx="271.4" cy="182.1" r="0.68" opacity="0.83"/><circle cx="269.3" cy="107.5" r="0.72" opacity="0.67"/><circle cx="262.3" cy="77.0" r="0.81" opacity="0.55"/><circle cx="296.9" cy="380.6" r="0.80" opacity="0.50"/><circle cx="222.4" cy="136.0" r="1.09" opacity="0.86"/><circle cx="247.2" cy="98.2" r="0.97" opacity="0.67"/><circle cx="161.4" cy="128.7" r="1.04" opacity="0.66"/><circle cx="214.8" cy="258.1" r="0.68" opacity="0.74"/><circle cx="102.7" cy="114.9" r="0.69" opacity="0.90"/><circle cx="258.4" cy="148.6" r="0.69" opacity="0.60"/><circle cx="189.1" cy="188.5" r="0.71" opacity="0.96"/><circle cx="258.0" cy="123.0" r="1.00" opacity="0.83"/><circle cx="324.2" cy="173.7" r="1.40" opacity="0.52"/><circle cx="222.9" cy="265.9" r="0.69" opacity="0.78"/><circle cx="271.1" cy="173.5" r="0.72" opacity="0.52"/><circle cx="275.1" cy="263.0" r="0.68" opacity="0.75"/><circle cx="278.6" cy="237.0" r="0.71" opacity="0.84"/><circle cx="223.9" cy="286.7" r="0.84" opacity="0.92"/><circle cx="161.8" cy="334.8" r="1.33" opacity="0.92"/><circle cx="135.3" cy="213.2" r="0.73" opacity="0.62"/><circle cx="368.4" cy="271.2" r="1.34" opacity="0.96"/><circle cx="249.1" cy="168.0" r="0.70" opacity="0.82"/><circle cx="173.5" cy="195.7" r="0.97" opacity="0.66"/><circle cx="132.7" cy="256.5" r="1.45" opacity="0.66"/><circle cx="420.6" cy="236.6" r="0.71" opacity="0.61"/><circle cx="205.7" cy="185.7" r="0.69" opacity="0.93"/><circle cx="226.6" cy="165.1" r="1.23" opacity="0.62"/><circle cx="264.0" cy="133.0" r="0.80" opacity="0.98"/><circle cx="191.9" cy="242.7" r="1.40" opacity="0.74"/><circle cx="199.2" cy="177.9" r="1.37" opacity="0.61"/><circle cx="257.2" cy="3.6" r="0.90" opacity="0.60"/><circle cx="267.4" cy="152.1" r="1.04" opacity="0.72"/><circle cx="123.8" cy="276.7" r="1.07" opacity="0.56"/><circle cx="287.5" cy="112.3" r="0.80" opacity="0.93"/><circle cx="184.3" cy="174.0" r="0.68" opacity="0.80"/><circle cx="283.6" cy="164.5" r="0.98" opacity="0.77"/><circle cx="246.3" cy="156.6" r="1.04" opacity="0.85"/><circle cx="277.6" cy="185.0" r="0.78" opacity="0.85"/><circle cx="329.6" cy="207.7" r="1.34" opacity="0.70"/><circle cx="278.4" cy="217.8" r="1.47" opacity="0.90"/><circle cx="296.0" cy="243.3" r="1.29" opacity="0.88"/><circle cx="345.7" cy="286.8" r="0.77" opacity="0.98"/><circle cx="246.8" cy="200.8" r="0.68" opacity="1.00"/><circle cx="301.5" cy="182.2" r="1.20" opacity="0.90"/><circle cx="247.4" cy="165.9" r="0.82" opacity="0.80"/><circle cx="205.6" cy="190.9" r="1.14" opacity="0.62"/><circle cx="248.3" cy="287.5" r="0.70" opacity="0.79"/><circle cx="125.3" cy="134.4" r="1.28" opacity="0.81"/><circle cx="371.2" cy="187.1" r="0.70" opacity="0.53"/><circle cx="226.7" cy="267.3" r="0.68" opacity="0.77"/><circle cx="283.8" cy="181.2" r="0.81" opacity="0.96"/><circle cx="237.4" cy="37.8" r="1.08" opacity="0.72"/><circle cx="305.9" cy="358.6" r="0.86" opacity="0.85"/><circle cx="355.7" cy="361.6" r="0.74" opacity="0.94"/><circle cx="269.9" cy="239.8" r="0.68" opacity="0.90"/><circle cx="148.8" cy="52.6" r="1.11" opacity="0.81"/><circle cx="367.3" cy="137.4" r="0.95" opacity="0.87"/><circle cx="127.5" cy="199.6" r="1.08" opacity="0.84"/><circle cx="213.5" cy="216.5" r="0.77" opacity="0.78"/><circle cx="178.0" cy="286.6" r="0.76" opacity="0.78"/><circle cx="344.5" cy="179.8" r="0.68" opacity="0.53"/><circle cx="121.6" cy="297.1" r="0.79" opacity="0.85"/><circle cx="263.9" cy="279.2" r="0.68" opacity="0.95"/><circle cx="185.3" cy="210.5" r="0.73" opacity="0.57"/><circle cx="256.0" cy="260.3" r="1.01" opacity="0.93"/><circle cx="178.2" cy="261.0" r="0.70" opacity="0.93"/><circle cx="218.8" cy="169.4" r="1.45" opacity="0.90"/><circle cx="321.1" cy="273.8" r="0.68" opacity="0.90"/><circle cx="271.8" cy="160.3" r="0.97" opacity="0.80"/><circle cx="369.7" cy="273.2" r="0.89" opacity="0.77"/><circle cx="320.1" cy="165.8" r="1.04" opacity="0.61"/><circle cx="221.9" cy="248.1" r="0.88" opacity="0.73"/><circle cx="296.6" cy="105.8" r="0.69" opacity="0.90"/><circle cx="334.5" cy="167.9" r="1.39" opacity="0.73"/><circle cx="361.6" cy="278.8" r="0.77" opacity="0.86"/><circle cx="179.0" cy="311.4" r="0.68" opacity="0.62"/><circle cx="316.9" cy="300.5" r="0.72" opacity="0.86"/><circle cx="254.7" cy="305.3" r="0.89" opacity="0.70"/><circle cx="253.9" cy="247.3" r="0.78" opacity="0.97"/><circle cx="277.8" cy="245.4" r="0.69" opacity="0.67"/><circle cx="193.5" cy="243.3" r="1.08" opacity="0.77"/><circle cx="173.6" cy="257.1" r="1.10" opacity="0.97"/><circle cx="343.4" cy="150.1" r="0.71" opacity="0.99"/><circle cx="209.9" cy="92.3" r="0.75" opacity="0.70"/><circle cx="296.2" cy="162.3" r="0.74" opacity="0.89"/><circle cx="156.1" cy="178.1" r="0.70" opacity="0.65"/><circle cx="223.7" cy="122.3" r="0.85" opacity="0.51"/><circle cx="104.5" cy="261.3" r="0.68" opacity="0.69"/><circle cx="285.9" cy="139.9" r="0.86" opacity="0.73"/><circle cx="240.4" cy="259.2" r="0.71" opacity="0.74"/><circle cx="380.5" cy="90.0" r="0.96" opacity="0.61"/><circle cx="274.5" cy="221.6" r="0.71" opacity="0.82"/><circle cx="140.6" cy="248.7" r="0.70" opacity="0.99"/><circle cx="156.9" cy="346.8" r="0.68" opacity="0.99"/><circle cx="298.2" cy="139.4" r="0.68" opacity="0.87"/><circle cx="323.5" cy="141.5" r="0.72" opacity="0.60"/><circle cx="279.0" cy="139.1" r="1.44" opacity="0.87"/><circle cx="226.4" cy="344.6" r="0.71" opacity="0.59"/><circle cx="233.7" cy="174.7" r="0.74" opacity="0.65"/><circle cx="347.7" cy="154.4" r="0.70" opacity="0.64"/><circle cx="180.1" cy="80.4" r="0.83" opacity="0.65"/><circle cx="279.4" cy="234.9" r="0.70" opacity="0.81"/><circle cx="157.7" cy="160.7" r="1.04" opacity="0.96"/><circle cx="359.2" cy="221.3" r="1.18" opacity="0.53"/><circle cx="307.4" cy="255.1" r="0.91" opacity="0.92"/><circle cx="244.3" cy="241.2" r="1.21" opacity="0.89"/><circle cx="240.1" cy="153.6" r="1.13" opacity="0.77"/><circle cx="228.7" cy="150.6" r="0.73" opacity="0.62"/><circle cx="212.4" cy="225.9" r="0.68" opacity="0.76"/><circle cx="142.7" cy="156.8" r="0.76" opacity="0.93"/><circle cx="237.7" cy="230.7" r="1.35" opacity="0.95"/><circle cx="70.5" cy="153.2" r="1.12" opacity="0.84"/><circle cx="256.4" cy="241.1" r="0.68" opacity="0.96"/><circle cx="191.1" cy="237.4" r="0.85" opacity="0.60"/><circle cx="304.9" cy="40.1" r="1.13" opacity="0.96"/><circle cx="306.4" cy="255.7" r="1.08" opacity="0.89"/><circle cx="209.4" cy="265.8" r="0.69" opacity="0.94"/><circle cx="297.3" cy="102.1" r="0.73" opacity="0.73"/><circle cx="254.9" cy="84.7" r="1.27" opacity="0.74"/><circle cx="125.0" cy="284.0" r="1.23" opacity="0.91"/><circle cx="178.3" cy="285.3" r="0.71" opacity="0.96"/><circle cx="324.7" cy="232.9" r="0.69" opacity="0.99"/><circle cx="269.3" cy="167.1" r="0.84" opacity="0.83"/><circle cx="157.3" cy="256.6" r="0.87" opacity="0.59"/><circle cx="287.0" cy="228.3" r="0.98" opacity="0.87"/><circle cx="404.3" cy="128.8" r="0.68" opacity="0.52"/><circle cx="270.1" cy="130.9" r="0.69" opacity="0.82"/><circle cx="366.3" cy="352.1" r="0.84" opacity="0.96"/><circle cx="110.8" cy="301.4" r="0.81" opacity="0.70"/><circle cx="205.5" cy="338.5" r="1.05" opacity="0.80"/><circle cx="321.8" cy="137.9" r="0.99" opacity="0.79"/><circle cx="300.0" cy="81.3" r="0.84" opacity="0.99"/><circle cx="271.4" cy="185.0" r="1.02" opacity="0.80"/><circle cx="230.2" cy="238.7" r="1.02" opacity="0.94"/><circle cx="346.1" cy="191.7" r="0.95" opacity="0.56"/><circle cx="301.2" cy="216.6" r="0.88" opacity="0.73"/><circle cx="191.2" cy="216.9" r="0.68" opacity="0.97"/><circle cx="142.0" cy="235.8" r="0.72" opacity="0.85"/><circle cx="340.9" cy="182.3" r="1.40" opacity="0.90"/><circle cx="286.2" cy="221.7" r="0.74" opacity="0.62"/><circle cx="354.1" cy="186.6" r="1.19" opacity="0.99"/><circle cx="269.4" cy="256.5" r="0.68" opacity="0.70"/><circle cx="223.2" cy="188.8" r="0.72" opacity="0.88"/><circle cx="156.5" cy="125.7" r="0.72" opacity="0.90"/><circle cx="222.4" cy="43.3" r="0.80" opacity="0.79"/><circle cx="330.1" cy="212.8" r="0.80" opacity="0.86"/><circle cx="295.7" cy="150.6" r="1.26" opacity="0.95"/><circle cx="306.9" cy="288.9" r="0.71" opacity="0.90"/><circle cx="304.6" cy="196.6" r="0.74" opacity="0.74"/><circle cx="359.1" cy="278.4" r="1.20" opacity="0.73"/><circle cx="230.3" cy="268.8" r="0.69" opacity="0.99"/><circle cx="317.8" cy="82.0" r="0.68" opacity="0.83"/><circle cx="434.3" cy="177.4" r="1.36" opacity="0.60"/><circle cx="346.2" cy="194.1" r="0.85" opacity="0.98"/><circle cx="326.6" cy="205.6" r="1.38" opacity="0.70"/><circle cx="178.7" cy="287.1" r="0.88" opacity="0.98"/><circle cx="288.2" cy="133.6" r="0.68" opacity="0.77"/><circle cx="211.2" cy="244.8" r="0.89" opacity="0.68"/><circle cx="161.9" cy="62.1" r="0.68" opacity="0.97"/><circle cx="245.2" cy="159.3" r="0.74" opacity="0.63"/><circle cx="298.2" cy="194.2" r="1.14" opacity="0.79"/><circle cx="239.7" cy="307.5" r="0.83" opacity="0.99"/><circle cx="173.0" cy="45.3" r="1.20" opacity="0.77"/><circle cx="329.8" cy="97.3" r="0.69" opacity="0.95"/><circle cx="232.9" cy="189.0" r="0.88" opacity="0.63"/><circle cx="297.5" cy="283.4" r="0.77" opacity="0.85"/><circle cx="355.6" cy="196.5" r="0.68" opacity="0.89"/><circle cx="256.3" cy="243.5" r="1.15" opacity="0.95"/><circle cx="315.2" cy="196.6" r="1.08" opacity="0.85"/><circle cx="344.2" cy="204.6" r="0.78" opacity="0.68"/><circle cx="387.4" cy="179.5" r="0.70" opacity="0.58"/><circle cx="384.4" cy="293.2" r="0.70" opacity="0.78"/><circle cx="225.7" cy="266.2" r="0.80" opacity="0.64"/><circle cx="229.4" cy="108.9" r="0.73" opacity="0.93"/><circle cx="305.3" cy="228.8" r="0.93" opacity="0.79"/><circle cx="256.9" cy="150.7" r="0.97" opacity="0.75"/><circle cx="220.1" cy="163.7" r="1.08" opacity="0.80"/><circle cx="216.5" cy="100.6" r="0.91" opacity="0.77"/><circle cx="200.4" cy="207.8" r="0.86" opacity="0.96"/><circle cx="199.7" cy="299.9" r="0.70" opacity="0.86"/><circle cx="260.5" cy="369.0" r="1.00" opacity="1.00"/><circle cx="342.5" cy="161.6" r="0.78" opacity="0.87"/><circle cx="223.1" cy="244.3" r="1.45" opacity="0.57"/><circle cx="181.3" cy="205.9" r="1.06" opacity="0.86"/><circle cx="411.5" cy="196.2" r="0.68" opacity="0.55"/><circle cx="354.7" cy="210.9" r="0.84" opacity="0.86"/><circle cx="296.1" cy="147.8" r="0.77" opacity="0.99"/><circle cx="195.5" cy="137.9" r="0.85" opacity="0.70"/><circle cx="258.0" cy="208.1" r="0.73" opacity="0.96"/><circle cx="366.1" cy="219.3" r="0.72" opacity="0.85"/><circle cx="266.5" cy="150.7" r="0.76" opacity="0.82"/><circle cx="168.9" cy="230.0" r="1.46" opacity="0.97"/><circle cx="203.1" cy="30.2" r="0.69" opacity="0.55"/><circle cx="152.6" cy="85.0" r="0.72" opacity="0.70"/><circle cx="374.6" cy="208.9" r="0.73" opacity="0.74"/><circle cx="295.6" cy="189.7" r="1.30" opacity="0.93"/><circle cx="245.9" cy="201.5" r="0.68" opacity="0.90"/><circle cx="306.2" cy="198.7" r="0.68" opacity="0.94"/><circle cx="269.0" cy="305.0" r="1.22" opacity="0.61"/><circle cx="338.5" cy="195.7" r="1.45" opacity="0.77"/><circle cx="320.2" cy="15.1" r="0.89" opacity="1.00"/><circle cx="434.9" cy="110.2" r="1.41" opacity="0.59"/><circle cx="285.5" cy="372.4" r="0.73" opacity="0.74"/><circle cx="224.8" cy="208.8" r="0.68" opacity="1.00"/><circle cx="225.2" cy="92.8" r="0.84" opacity="0.92"/><circle cx="187.6" cy="236.1" r="1.06" opacity="0.89"/><circle cx="303.2" cy="133.1" r="1.05" opacity="0.84"/><circle cx="172.2" cy="157.5" r="0.68" opacity="0.60"/><circle cx="314.0" cy="248.0" r="0.68" opacity="0.90"/><circle cx="126.2" cy="80.9" r="0.70" opacity="0.90"/><circle cx="384.8" cy="250.0" r="0.51" opacity="0.53"/><circle cx="184.0" cy="108.6" r="0.50" opacity="0.68"/><circle cx="294.7" cy="376.6" r="0.50" opacity="0.38"/><circle cx="237.3" cy="23.9" r="0.52" opacity="0.52"/><circle cx="224.5" cy="367.3" r="0.65" opacity="0.57"/><circle cx="272.7" cy="317.1" r="0.54" opacity="0.25"/><circle cx="456.9" cy="320.0" r="0.50" opacity="0.31"/><circle cx="103.6" cy="265.7" r="0.50" opacity="0.26"/><circle cx="230.3" cy="2.5" r="0.51" opacity="0.44"/><circle cx="95.6" cy="1.0" r="0.51" opacity="0.37"/><circle cx="151.1" cy="167.4" r="0.54" opacity="0.41"/><circle cx="8.9" cy="338.1" r="0.82" opacity="0.50"/><circle cx="1.3" cy="94.2" r="1.08" opacity="0.48"/><circle cx="95.7" cy="331.1" r="1.07" opacity="0.31"/><circle cx="233.5" cy="226.6" r="0.50" opacity="0.41"/><circle cx="288.1" cy="272.0" r="0.70" opacity="0.56"/><circle cx="176.1" cy="27.8" r="0.50" opacity="0.67"/><circle cx="403.0" cy="365.5" r="0.50" opacity="0.63"/><circle cx="80.1" cy="139.8" r="0.51" opacity="0.68"/><circle cx="381.7" cy="336.2" r="0.54" opacity="0.72"/><circle cx="121.2" cy="231.8" r="0.74" opacity="0.37"/><circle cx="177.9" cy="40.5" r="0.90" opacity="0.34"/><circle cx="63.4" cy="112.2" r="0.71" opacity="0.57"/><circle cx="244.5" cy="344.7" r="0.84" opacity="0.35"/><circle cx="249.2" cy="68.4" r="0.51" opacity="0.32"/><circle cx="35.9" cy="141.4" r="1.06" opacity="0.58"/><circle cx="40.9" cy="88.4" r="0.67" opacity="0.51"/><circle cx="12.4" cy="37.9" r="0.65" opacity="0.55"/><circle cx="37.5" cy="312.1" r="0.51" opacity="0.54"/><circle cx="246.8" cy="137.3" r="1.18" opacity="0.45"/><circle cx="197.2" cy="218.1" r="0.97" opacity="0.74"/><circle cx="358.6" cy="217.5" r="0.79" opacity="0.57"/><circle cx="447.0" cy="391.9" r="0.85" opacity="0.36"/><circle cx="264.9" cy="177.5" r="0.51" opacity="0.64"/><circle cx="103.1" cy="286.6" r="0.59" opacity="0.46"/><circle cx="329.3" cy="292.7" r="1.28" opacity="0.75"/><circle cx="372.8" cy="106.6" r="0.74" opacity="0.50"/><circle cx="438.2" cy="180.5" r="0.54" opacity="0.26"/><circle cx="219.1" cy="215.0" r="0.52" opacity="0.30"/><circle cx="225.5" cy="28.5" r="0.50" opacity="0.47"/><circle cx="162.2" cy="201.9" r="0.62" opacity="0.44"/><circle cx="62.2" cy="7.4" r="0.64" opacity="0.74"/><circle cx="131.1" cy="142.0" r="0.53" opacity="0.62"/><circle cx="229.8" cy="321.4" r="0.50" opacity="0.32"/><circle cx="96.1" cy="149.0" r="0.55" opacity="0.44"/><circle cx="450.0" cy="177.4" r="0.65" opacity="0.73"/><circle cx="299.1" cy="240.1" r="0.95" opacity="0.42"/><circle cx="16.8" cy="386.7" r="0.62" opacity="0.54"/><circle cx="31.1" cy="300.8" r="0.54" opacity="0.57"/><circle cx="132.2" cy="370.8" r="0.54" opacity="0.39"/><circle cx="416.6" cy="89.9" r="0.52" opacity="0.49"/><circle cx="457.1" cy="46.7" r="0.51" opacity="0.65"/><circle cx="35.0" cy="167.3" r="0.88" opacity="0.61"/><circle cx="369.6" cy="47.4" r="1.06" opacity="0.43"/><circle cx="379.4" cy="190.5" r="1.07" opacity="0.49"/><circle cx="120.1" cy="60.8" r="0.60" opacity="0.27"/><circle cx="76.4" cy="353.2" r="0.65" opacity="0.68"/><circle cx="70.3" cy="193.9" r="0.58" opacity="0.30"/><circle cx="122.8" cy="372.2" r="0.80" opacity="0.50"/><circle cx="284.0" cy="347.6" r="1.19" opacity="0.55"/><circle cx="23.5" cy="352.0" r="0.50" opacity="0.37"/><circle cx="63.9" cy="206.8" r="0.66" opacity="0.48"/><circle cx="219.0" cy="56.9" r="0.80" opacity="0.52"/><circle cx="144.0" cy="336.6" r="1.16" opacity="0.71"/><circle cx="459.0" cy="27.8" r="0.55" opacity="0.47"/><circle cx="119.6" cy="300.3" r="1.09" opacity="0.32"/><circle cx="235.9" cy="390.7" r="1.06" opacity="0.48"/><circle cx="48.8" cy="184.3" r="0.61" opacity="0.64"/><circle cx="86.7" cy="112.9" r="1.26" opacity="0.26"/><circle cx="284.7" cy="38.4" r="0.84" opacity="0.46"/><circle cx="431.2" cy="90.2" r="1.04" opacity="0.36"/><circle cx="22.2" cy="34.8" r="0.50" opacity="0.44"/><circle cx="452.9" cy="143.3" r="0.79" opacity="0.27"/><circle cx="240.4" cy="217.8" r="0.50" opacity="0.54"/><circle cx="207.9" cy="132.2" r="0.96" opacity="0.60"/><circle cx="56.1" cy="42.9" r="0.50" opacity="0.38"/><circle cx="296.6" cy="391.1" r="1.23" opacity="0.68"/><circle cx="58.0" cy="319.8" r="0.85" opacity="0.49"/><circle cx="464.0" cy="241.9" r="0.50" opacity="0.36"/><circle cx="60.4" cy="246.5" r="0.69" opacity="0.68"/><circle cx="4.8" cy="4.0" r="1.24" opacity="0.38"/><circle cx="123.1" cy="350.0" r="0.50" opacity="0.65"/><circle cx="417.9" cy="227.0" r="0.68" opacity="0.25"/><circle cx="282.7" cy="247.8" r="0.87" opacity="0.51"/><circle cx="53.1" cy="89.9" r="0.72" opacity="0.29"/><circle cx="49.8" cy="101.3" r="0.90" opacity="0.52"/><circle cx="166.3" cy="389.2" r="0.66" opacity="0.37"/><circle cx="263.5" cy="345.4" r="0.54" opacity="0.47"/><circle cx="269.1" cy="398.6" r="0.71" opacity="0.34"/><circle cx="271.2" cy="129.7" r="0.58" opacity="0.61"/><circle cx="9.4" cy="205.0" r="0.52" opacity="0.55"/><circle cx="382.4" cy="188.7" r="0.70" opacity="0.39"/><circle cx="119.3" cy="206.0" r="0.62" opacity="0.36"/><circle cx="356.5" cy="201.7" r="0.54" opacity="0.38"/><circle cx="390.0" cy="364.2" r="1.16" opacity="0.37"/><circle cx="33.2" cy="255.0" r="0.50" opacity="0.68"/><circle cx="316.4" cy="136.0" r="0.57" opacity="0.59"/><circle cx="74.7" cy="147.4" r="0.89" opacity="0.59"/><circle cx="272.8" cy="41.7" r="0.51" opacity="0.38"/><circle cx="14.7" cy="258.4" r="0.65" opacity="0.71"/><circle cx="258.4" cy="370.8" r="0.58" opacity="0.51"/><circle cx="131.1" cy="187.5" r="1.16" opacity="0.49"/><circle cx="1.0" cy="142.8" r="0.51" opacity="0.56"/><circle cx="237.3" cy="192.1" r="1.14" opacity="0.63"/><circle cx="40.7" cy="12.4" r="0.78" opacity="0.55"/><circle cx="304.0" cy="202.1" r="0.50" opacity="0.48"/><circle cx="389.3" cy="243.0" r="0.50" opacity="0.31"/><circle cx="421.6" cy="220.0" r="0.50" opacity="0.60"/><circle cx="430.9" cy="349.3" r="0.72" opacity="0.65"/><circle cx="40.8" cy="187.1" r="0.93" opacity="0.42"/><circle cx="67.0" cy="349.6" r="0.78" opacity="0.25"/><circle cx="29.6" cy="225.0" r="1.19" opacity="0.56"/><circle cx="408.3" cy="42.5" r="0.65" opacity="0.34"/><circle cx="154.7" cy="60.3" r="0.58" opacity="0.27"/><circle cx="306.0" cy="261.0" r="1.09" opacity="0.63"/><circle cx="35.2" cy="350.9" r="0.63" opacity="0.72"/><circle cx="229.3" cy="32.8" r="0.78" opacity="0.34"/><circle cx="458.6" cy="217.7" r="1.09" opacity="0.50"/><circle cx="152.1" cy="267.4" r="0.79" opacity="0.48"/><circle cx="128.4" cy="169.8" r="0.79" opacity="0.36"/></g><circle cx="258" cy="194.8" r="23" fill="url(#core)" opacity="0.95"/></g></svg>
<div style="left:671.5px;top:112px;width:6px;height:404px;background:#c9d7e0;border-radius:3px;"></div>
<div style="left:671.5px;top:241.3px;width:6px;height:143.7px;background:#0d4166;border-radius:3px;"></div>
<div style="left:201.5px;top:521.3px;width:465px;height:6.5px;background:#c9d7e0;border-radius:3.2px;"></div>
<div style="left:339px;top:521.3px;width:188.5px;height:6.5px;background:#0d4166;border-radius:3.2px;"></div>
<div style="left:688px;top:58px;width:171.5px;height:14.5px;background:#0c3c5e;"></div>
<div style="left:688px;top:72.5px;width:171.5px;height:245.0px;background:#fff;"></div>
<span id="t38" class="t" style="left:690.8px;transform-origin:0 50%;top:59.4px;font-size:9.5px;line-height:14.2px;color:#e8f0f5;font-weight:bold;">統計</span>
<svg style="left:846.0px;top:59.25px" width="12" height="12" viewBox="0 0 12 12"><path d="M1 1L11 11M11 1L1 11" stroke="#a9c2d2" stroke-width="1.1" fill="none"/></svg>
<span id="t39" class="t" style="left:697.5px;transform-origin:0 50%;top:77.8px;font-size:11.3px;line-height:17.0px;color:#1c1c1c;transform:scaleX(0.7817);">センサー横幅</span>
<span id="t40" class="t" style="left:750.5px;transform-origin:0 50%;top:77.8px;font-size:11.3px;line-height:17.0px;color:#1c1c1c;">3008</span>
<span id="t41" class="t" style="left:774px;transform-origin:0 50%;top:77.8px;font-size:11.3px;line-height:17.0px;color:#1c1c1c;transform:scaleX(0.7965);">センサー縦</span>
<span id="t42" class="t" style="left:826.5px;transform-origin:0 50%;top:77.8px;font-size:11.3px;line-height:17.0px;color:#1c1c1c;max-width:25px;overflow:hidden;">3008</span>
<span id="t43" class="t" style="left:697.5px;transform-origin:0 50%;top:93.0px;font-size:11.3px;line-height:17.0px;color:#1c1c1c;transform:scaleX(0.9955);">算術平均</span>
<span id="t44" class="t" style="left:750.5px;transform-origin:0 50%;top:93.0px;font-size:11.3px;line-height:17.0px;color:#1c1c1c;">3471</span>
<span id="t45" class="t" style="left:774px;transform-origin:0 50%;top:93.0px;font-size:11.3px;line-height:17.0px;color:#1c1c1c;transform:scaleX(0.9481);">標準偏差S</span>
<span id="t46" class="t" style="left:826.5px;transform-origin:0 50%;top:93.0px;font-size:11.3px;line-height:17.0px;color:#1c1c1c;max-width:25px;overflow:hidden;">594.3</span>
<span id="t47" class="t" style="left:697.5px;transform-origin:0 50%;top:108.3px;font-size:11.3px;line-height:17.0px;color:#1c1c1c;transform:scaleX(0.9733);">中央値</span>
<span id="t48" class="t" style="left:750.5px;transform-origin:0 50%;top:108.3px;font-size:11.3px;line-height:17.0px;color:#1c1c1c;">3440</span>
<span id="t49" class="t" style="left:774px;transform-origin:0 50%;top:108.3px;font-size:11.3px;line-height:17.0px;color:#1c1c1c;transform:scaleX(0.9204);">平均絶対偏</span>
<span id="t50" class="t" style="left:826.5px;transform-origin:0 50%;top:108.3px;font-size:11.3px;line-height:17.0px;color:#1c1c1c;max-width:25px;overflow:hidden;">72.00</span>
<span id="t51" class="t" style="left:697.5px;transform-origin:0 50%;top:123.6px;font-size:11.3px;line-height:17.0px;color:#1c1c1c;transform:scaleX(0.9730);">最小</span>
<span id="t52" class="t" style="left:750.5px;transform-origin:0 50%;top:123.6px;font-size:11.3px;line-height:17.0px;color:#1c1c1c;">2912</span>
<span id="t53" class="t" style="left:774px;transform-origin:0 50%;top:123.6px;font-size:11.3px;line-height:17.0px;color:#1c1c1c;transform:scaleX(0.9730);">最大</span>
<span id="t54" class="t" style="left:826.5px;transform-origin:0 50%;top:123.6px;font-size:11.3px;line-height:17.0px;color:#1c1c1c;max-width:25px;overflow:hidden;">6553</span>
<span id="t55" class="t" style="left:697.5px;transform-origin:0 50%;top:138.8px;font-size:11.3px;line-height:17.0px;color:#1c1c1c;transform:scaleX(0.9663);">#星</span>
<span id="t56" class="t" style="left:750.5px;transform-origin:0 50%;top:138.8px;font-size:11.3px;line-height:17.0px;color:#1c1c1c;">373</span>
<span id="t57" class="t" style="left:774px;transform-origin:0 50%;top:138.8px;font-size:11.3px;line-height:17.0px;color:#1c1c1c;transform:scaleX(0.8614);">HFR</span>
<span id="t58" class="t" style="left:826.5px;transform-origin:0 50%;top:138.8px;font-size:11.3px;line-height:17.0px;color:#1c1c1c;max-width:25px;overflow:hidden;">2.80</span>
<span id="t59" class="t" style="left:697.5px;transform-origin:0 50%;top:154.1px;font-size:11.3px;line-height:17.0px;color:#1c1c1c;transform:scaleX(0.7965);">ビット深度</span>
<span id="t60" class="t" style="left:750.5px;transform-origin:0 50%;top:154.1px;font-size:11.3px;line-height:17.0px;color:#1c1c1c;">16</span>
<span id="t61" class="t" style="left:774px;transform-origin:0 50%;top:154.1px;font-size:11.3px;line-height:17.0px;color:#1c1c1c;transform:scaleX(0.9105);">HFR標準偏</span>
<span id="t62" class="t" style="left:826.5px;transform-origin:0 50%;top:154.1px;font-size:11.3px;line-height:17.0px;color:#1c1c1c;max-width:25px;overflow:hidden;">0.39</span>
<span id="t63" class="t" style="left:697.5px;transform-origin:0 50%;top:169.3px;font-size:11.3px;line-height:17.0px;color:#1c1c1c;transform:scaleX(0.8910);">ゲイン</span>
<span id="t64" class="t" style="left:750.5px;transform-origin:0 50%;top:169.3px;font-size:11.3px;line-height:17.0px;color:#1c1c1c;">100</span>
<svg style="left:0;top:0" width="1300" height="700" viewBox="0 0 1300 700"><rect x="701.5" y="197.5" width="146" height="112" fill="#fff" stroke="#dfe6eb" stroke-width="1"/><rect x="750.5" y="251" width="11" height="23.5" fill="none" stroke="#e2eaf0" stroke-width="1.3"/><rect x="768" y="231" width="12" height="43.5" fill="none" stroke="#e2eaf0" stroke-width="1.3"/><rect x="785.5" y="245" width="11.5" height="29.5" fill="none" stroke="#e2eaf0" stroke-width="1.3"/><path d="M702 309 L703.3 300 L703.8 199 L705.2 199 L705.8 300 L708 309 Z" fill="#54788f"/><line x1="701.5" y1="309" x2="847.5" y2="309" stroke="#54788f" stroke-width="1.6"/></svg>
<div style="left:865.5px;top:58px;width:130px;height:14.5px;background:#0c3c5e;"></div>
<div style="left:865.5px;top:72.5px;width:130px;height:245.0px;background:#fff;"></div>
<span id="t65" class="t" style="left:868.3px;transform-origin:0 50%;top:59.4px;font-size:9.5px;line-height:14.2px;color:#e8f0f5;font-weight:bold;">撮像</span>
<svg style="left:982.0px;top:59.25px" width="12" height="12" viewBox="0 0 12 12"><path d="M1 1L11 11M11 1L1 11" stroke="#a9c2d2" stroke-width="1.1" fill="none"/></svg>
<span id="t66" class="t" style="left:870.5px;transform-origin:0 50%;top:78.8px;font-size:11.3px;line-height:17.0px;color:#1c1c1c;transform:scaleX(0.9955);">露出時間</span>
<div style="left:935px;top:77.5px;width:56px;height:19px;background:#ececec;border-radius:2px;"></div>
<span id="t67" class="t" style="left:940px;transform-origin:0 50%;top:78.8px;font-size:11.3px;line-height:17.0px;color:#7a7a7a;">1</span>
<span id="t68" class="t" style="left:952px;transform-origin:0 50%;top:80.0px;font-size:10px;line-height:15.0px;color:#c4c4c4;">s</span>
<span id="t69" class="t" style="left:870.5px;transform-origin:0 50%;top:107.5px;font-size:11.3px;line-height:17.0px;color:#1c1c1c;transform:scaleX(0.7109);">フィルター</span>
<div style="left:935.5px;top:104.4px;width:55px;height:23px;background:#f1f1f1;border:1px solid #e2e2e2;box-sizing:border-box;border-radius:2px;"></div>
<span id="t70" class="t" style="left:938.6px;transform-origin:0 50%;top:107.7px;font-size:11.3px;line-height:17.0px;color:#1c1c1c;">IR</span>
<span id="t71" class="t" style="left:870.5px;transform-origin:0 50%;top:136.5px;font-size:11.3px;line-height:17.0px;color:#1c1c1c;transform:scaleX(0.7964);">ビニング</span>
<div style="left:935.5px;top:133.4px;width:55px;height:23px;background:#f1f1f1;border:1px solid #e2e2e2;box-sizing:border-box;border-radius:2px;"></div>
<span id="t72" class="t" style="left:938.6px;transform-origin:0 50%;top:136.5px;font-size:11.3px;line-height:17.0px;color:#1c1c1c;">1x1</span>
<svg style="left:977.3px;top:113.8px" width="8.2" height="4.2" viewBox="0 0 9 5"><path d="M0 0H9L4.5 5Z" fill="#111"/></svg>
<svg style="left:977.3px;top:142.8px" width="8.2" height="4.2" viewBox="0 0 9 5"><path d="M0 0H9L4.5 5Z" fill="#111"/></svg>
<span id="t73" class="t" style="left:870.5px;transform-origin:0 50%;top:164.5px;font-size:11.3px;line-height:17.0px;color:#3a3a3a;transform:scaleX(0.7425);">ゲイン</span>
<div style="left:935.4px;top:165px;width:55px;height:16.7px;background:#ececec;border-radius:2px;"></div>
<span id="t74" class="t" style="left:940.4px;transform-origin:0 50%;top:165.0px;font-size:11.3px;line-height:17.0px;color:#b0b0b0;">(100)</span>
<span id="t75" class="t" style="left:870.5px;transform-origin:0 50%;top:193.0px;font-size:11.3px;line-height:17.0px;color:#1c1c1c;transform:scaleX(0.8841);">循環(ループ)</span>
<div style="left:935.4px;top:191.5px;width:55.2px;height:20.5px;background:#14588a;border-radius:10.3px;"></div>
<div style="left:970.8px;top:191.5px;width:19.8px;height:20.5px;background:#0d3f63;border-left:1.6px solid #9dbdd3;box-sizing:border-box;border-radius:10px;"></div>
<span id="t76" class="t" style="left:951.8px;transform-origin:50% 50%;top:192.6px;font-size:12.5px;line-height:18.8px;color:#ffffff;font-weight:bold;transform:translateX(-50%) scaleX(0.8800);">ON</span>
<span id="t77" class="t" style="left:870.5px;transform-origin:0 50%;top:221.0px;font-size:11.3px;line-height:17.0px;color:#1c1c1c;transform:scaleX(0.9730);">保存</span>
<span id="t78" class="t" style="left:870.5px;transform-origin:0 50%;top:248.0px;font-size:11.3px;line-height:17.0px;color:#1c1c1c;transform:scaleX(0.8440);clip-path:inset(0 15% 0 0);">サブサンプリング</span>
<div style="left:935.4px;top:219.8px;width:55.2px;height:19.2px;background:#fff;border-radius:9.6px;box-shadow:0 0 2px #c4c4c4;"></div>
<div style="left:935.4px;top:219.8px;width:19px;height:19.2px;background:#0d4166;border-radius:7px 9.6px 9.6px 7px;"></div>
<span id="t79" class="t" style="left:974.4px;transform-origin:50% 50%;top:220.3px;font-size:12.5px;line-height:18.8px;color:#1a1a1a;font-weight:bold;transform:translateX(-50%) scaleX(0.8600);">OFF</span>
<div style="left:935.4px;top:246.4px;width:55.2px;height:19.2px;background:#fff;border-radius:9.6px;box-shadow:0 0 2px #c4c4c4;"></div>
<div style="left:935.4px;top:246.4px;width:19px;height:19.2px;background:#0d4166;border-radius:7px 9.6px 9.6px 7px;"></div>
<span id="t80" class="t" style="left:974.4px;transform-origin:50% 50%;top:246.9px;font-size:12.5px;line-height:18.8px;color:#1a1a1a;font-weight:bold;transform:translateX(-50%) scaleX(0.8600);">OFF</span>
<div style="left:880.5px;top:283px;width:100.3px;height:22.7px;background:#9db2c1;"></div>
<div style="left:688px;top:324px;width:171.5px;height:14.5px;background:#0c3c5e;"></div>
<div style="left:688px;top:338.5px;width:171.5px;height:194.0px;background:#fff;"></div>
<span id="t81" class="t" style="left:690.8px;transform-origin:0 50%;top:325.4px;font-size:9.5px;line-height:14.2px;color:#e8f0f5;font-weight:bold;">HFR履歴</span>
<svg style="left:846.0px;top:325.25px" width="12" height="12" viewBox="0 0 12 12"><path d="M1 1L11 11M11 1L1 11" stroke="#a9c2d2" stroke-width="1.1" fill="none"/></svg>
<svg style="left:0;top:0" width="1300" height="700" viewBox="0 0 1300 700"><line x1="726.8" y1="446.3" x2="819.5" y2="446.3" stroke="#d5d5d5" stroke-dasharray="5 2"/><line x1="726.8" y1="405.5" x2="819.5" y2="405.5" stroke="#c9d3da" stroke-dasharray="8 3"/><path d="M726.8 389V499H819.5V389" fill="none" stroke="#d9d9d9" stroke-width="1"/><line x1="722.8" y1="403.9" x2="726.8" y2="403.9" stroke="#888"/><line x1="722.8" y1="425.2" x2="726.8" y2="425.2" stroke="#888"/><line x1="722.8" y1="446.3" x2="726.8" y2="446.3" stroke="#888"/><line x1="722.8" y1="467.0" x2="726.8" y2="467.0" stroke="#888"/><line x1="722.8" y1="488.7" x2="726.8" y2="488.7" stroke="#888"/><line x1="819.5" y1="389.1" x2="823.5" y2="389.1" stroke="#888"/><line x1="819.5" y1="405.5" x2="823.5" y2="405.5" stroke="#888"/><line x1="819.5" y1="423.7" x2="823.5" y2="423.7" stroke="#888"/><line x1="819.5" y1="441.0" x2="823.5" y2="441.0" stroke="#888"/><line x1="819.5" y1="458.9" x2="823.5" y2="458.9" stroke="#888"/><line x1="819.5" y1="477.1" x2="823.5" y2="477.1" stroke="#888"/><line x1="819.5" y1="494.4" x2="823.5" y2="494.4" stroke="#888"/><line x1="732.1" y1="501" x2="732.1" y2="505" stroke="#555"/><line x1="751.0" y1="501" x2="751.0" y2="505" stroke="#555"/><line x1="769.8" y1="501" x2="769.8" y2="505" stroke="#555"/><line x1="788.7" y1="501" x2="788.7" y2="505" stroke="#555"/><line x1="808.2" y1="501" x2="808.2" y2="505" stroke="#555"/><text x="716" y="450.3" font-size="11.5" text-anchor="end" fill="#222">3</text><text x="829" y="409.5" font-size="11.5" fill="#222" textLength="20" lengthAdjust="spacingAndGlyphs">500</text><text x="831" y="498.4" font-size="11.5" fill="#222">0</text><text x="732" y="522.6" font-size="11.5" text-anchor="middle" fill="#222">0</text><polyline points="732.8,486.5 735.3,489.7 737.5,466.1 739.0,456.7 741.6,447.2 743.7,436.2 746.3,428.4 748.8,423.7 751.0,419.9 753.5,414.3 755.7,408.9 757.9,404.8 760.4,402.3 763.5,401.1 767.3,399.2 771.4,397.9 775.5,396.3 779.3,397.3 783.0,397.9 787.1,398.5 791.2,399.8 793.4,401.1 795.0,431.5 797.5,430.6 800.6,429.3 804.4,428.4 808.2,427.4 811.3,428.4" fill="none" stroke="#e0a020" stroke-width="1.6"/><rect x="730.0" y="483.7" width="5.6" height="5.6" fill="#6d8aa1"/><rect x="732.5" y="486.9" width="5.6" height="5.6" fill="#6d8aa1"/><rect x="734.7" y="463.3" width="5.6" height="5.6" fill="#6d8aa1"/><rect x="736.2" y="453.9" width="5.6" height="5.6" fill="#6d8aa1"/><rect x="738.8" y="444.4" width="5.6" height="5.6" fill="#6d8aa1"/><rect x="740.9" y="433.4" width="5.6" height="5.6" fill="#6d8aa1"/><rect x="743.5" y="425.6" width="5.6" height="5.6" fill="#6d8aa1"/><rect x="746.0" y="420.9" width="5.6" height="5.6" fill="#6d8aa1"/><rect x="748.2" y="417.1" width="5.6" height="5.6" fill="#6d8aa1"/><rect x="750.7" y="411.5" width="5.6" height="5.6" fill="#6d8aa1"/><rect x="752.9" y="406.1" width="5.6" height="5.6" fill="#6d8aa1"/><rect x="755.1" y="402.0" width="5.6" height="5.6" fill="#6d8aa1"/><rect x="757.6" y="399.5" width="5.6" height="5.6" fill="#6d8aa1"/><rect x="760.7" y="398.3" width="5.6" height="5.6" fill="#6d8aa1"/><rect x="764.5" y="396.4" width="5.6" height="5.6" fill="#6d8aa1"/><rect x="768.6" y="395.1" width="5.6" height="5.6" fill="#6d8aa1"/><rect x="772.7" y="393.5" width="5.6" height="5.6" fill="#6d8aa1"/><rect x="776.5" y="394.5" width="5.6" height="5.6" fill="#6d8aa1"/><rect x="780.2" y="395.1" width="5.6" height="5.6" fill="#6d8aa1"/><rect x="784.3" y="395.7" width="5.6" height="5.6" fill="#6d8aa1"/><rect x="788.4" y="397.0" width="5.6" height="5.6" fill="#6d8aa1"/><rect x="790.6" y="398.3" width="5.6" height="5.6" fill="#6d8aa1"/><rect x="792.2" y="428.7" width="5.6" height="5.6" fill="#6d8aa1"/><rect x="794.7" y="427.8" width="5.6" height="5.6" fill="#6d8aa1"/><rect x="797.8" y="426.5" width="5.6" height="5.6" fill="#6d8aa1"/><rect x="801.6" y="425.6" width="5.6" height="5.6" fill="#6d8aa1"/><rect x="805.4" y="424.6" width="5.6" height="5.6" fill="#6d8aa1"/><rect x="808.5" y="425.6" width="5.6" height="5.6" fill="#6d8aa1"/><polyline points="733.7,397.0 737.5,397.0 740.0,407.3 742.5,436.2 744.7,448.8 747.8,447.9 751.6,446.6 751.6,430.9 754.7,436.9 756.6,462.3 758.8,428.4 760.4,444.7 762.6,462.3 765.1,441.0 767.3,451.0 768.3,470.2 769.8,418.3 772.3,421.5 773.9,456.0 776.1,465.5 777.1,439.4 780.2,437.2 783.0,433.7 784.0,421.5 786.2,431.5 788.7,426.8 793.4,402.3 797.5,419.0 799.7,461.4 802.8,446.3 804.4,481.2 806.0,489.7 808.5,468.3 810.0,479.3 811.6,489.0" fill="none" stroke="#5aa61c" stroke-width="1.6"/><circle cx="733.7" cy="397.0" r="2.7" fill="#0a0a0a"/><circle cx="737.5" cy="397.0" r="2.7" fill="#0a0a0a"/><circle cx="740.0" cy="407.3" r="2.7" fill="#0a0a0a"/><circle cx="742.5" cy="436.2" r="2.7" fill="#0a0a0a"/><circle cx="744.7" cy="448.8" r="2.7" fill="#0a0a0a"/><circle cx="747.8" cy="447.9" r="2.7" fill="#0a0a0a"/><circle cx="751.6" cy="446.6" r="2.7" fill="#0a0a0a"/><circle cx="751.6" cy="430.9" r="2.7" fill="#0a0a0a"/><circle cx="754.7" cy="436.9" r="2.7" fill="#0a0a0a"/><circle cx="756.6" cy="462.3" r="2.7" fill="#0a0a0a"/><circle cx="758.8" cy="428.4" r="2.7" fill="#0a0a0a"/><circle cx="760.4" cy="444.7" r="2.7" fill="#0a0a0a"/><circle cx="762.6" cy="462.3" r="2.7" fill="#0a0a0a"/><circle cx="765.1" cy="441.0" r="2.7" fill="#0a0a0a"/><circle cx="767.3" cy="451.0" r="2.7" fill="#0a0a0a"/><circle cx="768.3" cy="470.2" r="2.7" fill="#0a0a0a"/><circle cx="769.8" cy="418.3" r="2.7" fill="#0a0a0a"/><circle cx="772.3" cy="421.5" r="2.7" fill="#0a0a0a"/><circle cx="773.9" cy="456.0" r="2.7" fill="#0a0a0a"/><circle cx="776.1" cy="465.5" r="2.7" fill="#0a0a0a"/><circle cx="777.1" cy="439.4" r="2.7" fill="#0a0a0a"/><circle cx="780.2" cy="437.2" r="2.7" fill="#0a0a0a"/><circle cx="783.0" cy="433.7" r="2.7" fill="#0a0a0a"/><circle cx="784.0" cy="421.5" r="2.7" fill="#0a0a0a"/><circle cx="786.2" cy="431.5" r="2.7" fill="#0a0a0a"/><circle cx="788.7" cy="426.8" r="2.7" fill="#0a0a0a"/><circle cx="793.4" cy="402.3" r="2.7" fill="#0a0a0a"/><circle cx="797.5" cy="419.0" r="2.7" fill="#0a0a0a"/><circle cx="799.7" cy="461.4" r="2.7" fill="#0a0a0a"/><circle cx="802.8" cy="446.3" r="2.7" fill="#0a0a0a"/><circle cx="804.4" cy="481.2" r="2.7" fill="#0a0a0a"/><circle cx="806.0" cy="489.7" r="2.7" fill="#0a0a0a"/><circle cx="808.5" cy="468.3" r="2.7" fill="#0a0a0a"/><circle cx="810.0" cy="479.3" r="2.7" fill="#0a0a0a"/><circle cx="811.6" cy="489.0" r="2.7" fill="#0a0a0a"/><rect x="726" y="347.5" width="81" height="40" fill="#fff" stroke="#dcdcdc" stroke-width="1"/><line x1="727" y1="355.2" x2="738" y2="355.2" stroke="#5aa61c" stroke-width="1.6"/><circle cx="732.5" cy="355.2" r="2.7" fill="#0a0a0a"/><path d="M732.5 365.5l4 7h-8z" fill="#0a0a0a"/><line x1="727" y1="384.4" x2="738" y2="384.4" stroke="#e0a020" stroke-width="1.6"/><rect x="730" y="382" width="4.8" height="4.8" fill="#6d8aa1"/><text x="741" y="359.5" font-size="11.5" fill="#222">HFR</text><text x="741" y="374" font-size="11.5" fill="#222" textLength="63" lengthAdjust="spacingAndGlyphs">オートフォーカス</text><text x="741" y="388.5" font-size="11.5" fill="#222">星</text></svg>
<div style="left:865.5px;top:324px;width:130px;height:14.5px;background:#0c3c5e;"></div>
<div style="left:865.5px;top:338.5px;width:130px;height:194.0px;background:#fff;"></div>
<span id="t82" class="t" style="left:868.3px;transform-origin:0 50%;top:325.4px;font-size:9.5px;line-height:14.2px;color:#e8f0f5;font-weight:bold;transform:scaleX(0.7442);">シーケンス</span>
<svg style="left:982.0px;top:325.25px" width="12" height="12" viewBox="0 0 12 12"><path d="M1 1L11 11M11 1L1 11" stroke="#a9c2d2" stroke-width="1.1" fill="none"/></svg>
<div style="left:875px;top:345px;width:95px;height:23px;background:#5b7f9b;"></div>
<span id="t83" class="t" style="left:922.5px;transform-origin:50% 50%;top:348.0px;font-size:11.3px;line-height:17.0px;color:#1e2d3a;transform:translateX(-50%) scaleX(1.0000);">1 / 1</span>
<span id="t84" class="t" style="left:875px;transform-origin:0 50%;top:378.5px;font-size:11.3px;line-height:17.0px;color:#1c1c1c;transform:scaleX(0.9576);">推定終了時間 1:16:4</span>
<span id="t85" class="t" style="left:875px;transform-origin:0 50%;top:396.5px;font-size:20px;line-height:30.0px;color:#1c1c1c;transform:scaleX(0.7789);">現行シーケン</span>
<div style="left:875px;top:425px;width:95px;height:1px;background:#d0d0d0;"></div>
<div style="left:894px;top:436px;width:57px;height:23px;background:#fff;border:1px solid #d8e0e6;box-sizing:border-box;"></div>
<div style="left:894px;top:436px;width:40px;height:23px;background:#5b7f9b;"></div>
<span id="t86" class="t" style="left:922.5px;transform-origin:50% 50%;top:439.0px;font-size:11.3px;line-height:17.0px;color:#1e2d3a;transform:translateX(-50%) scaleX(1.0000);">10 / 14</span>
<span id="t87" class="t" style="left:890.5px;transform-origin:0 50%;top:467.8px;font-size:11.3px;line-height:17.0px;color:#1c1c1c;transform:scaleX(0.9730);">目標</span>
<span id="t88" class="t" style="left:927.5px;transform-origin:0 50%;top:467.8px;font-size:11.3px;line-height:17.0px;color:#1c1c1c;">M2</span>
<span id="t89" class="t" style="left:890.5px;transform-origin:0 50%;top:488.5px;font-size:11.3px;line-height:17.0px;color:#1c1c1c;transform:scaleX(0.7963);">モード</span>
<span id="t90" class="t" style="left:927.5px;transform-origin:0 50%;top:488.5px;font-size:11.3px;line-height:17.0px;color:#1c1c1c;transform:scaleX(0.9730);">順次</span>
<span id="t91" class="t" style="left:890.5px;transform-origin:0 50%;top:509.0px;font-size:11.3px;line-height:17.0px;color:#1c1c1c;transform:scaleX(1.0028);">露出時</span>
<span id="t92" class="t" style="left:927.5px;transform-origin:0 50%;top:509.0px;font-size:11.3px;line-height:17.0px;color:#1c1c1c;">300 s</span>
<span id="t93" class="t" style="left:890.5px;transform-origin:0 50%;top:528.0px;font-size:11.3px;line-height:17.0px;color:#1c1c1c;transform:scaleX(0.8019);clip-path:inset(0 0 73% 0);">ゲイン</span>
<div style="left:984px;top:339.5px;width:6px;height:192px;background:#c9d7e0;border-radius:3px;"></div>
<div style="left:984px;top:339.5px;width:6px;height:116px;background:#0d4166;border-radius:3px;"></div>
<div style="left:200px;top:540px;width:659.5px;height:14.5px;background:#0c3c5e;"></div>
<div style="left:200px;top:554.5px;width:659.5px;height:123.5px;background:#fff;"></div>
<span id="t94" class="t" style="left:202.8px;transform-origin:0 50%;top:541.4px;font-size:9.5px;line-height:14.2px;color:#e8f0f5;font-weight:bold;transform:scaleX(0.7442);">ガイダー</span>
<svg style="left:846.0px;top:541.25px" width="12" height="12" viewBox="0 0 12 12"><path d="M1 1L11 11M11 1L1 11" stroke="#a9c2d2" stroke-width="1.1" fill="none"/></svg>
<span id="t95" class="t" style="left:206px;transform-origin:0 50%;top:563.5px;font-size:11.3px;line-height:17.0px;color:#1c1c1c;transform:scaleX(0.9932);">状態: Guiding  赤経: 0.33 (0.62") 赤緯:0.31(0.60")  合計:0.45(0.87")</span>
<div style="left:536px;top:559.5px;width:62px;height:23px;background:#f1f1f1;border:1px solid #e2e2e2;box-sizing:border-box;border-radius:2px;"></div>
<span id="t96" class="t" style="left:539px;transform-origin:0 50%;top:562.5px;font-size:11.3px;line-height:17.0px;color:#1c1c1c;transform:scaleX(1.0079);">y: +/-4"</span>
<svg style="left:584.5px;top:569px" width="8.2" height="4.2" viewBox="0 0 9 5"><path d="M0 0H9L4.5 5Z" fill="#111"/></svg>
<div style="left:603.5px;top:559.5px;width:54px;height:23px;background:#f1f1f1;border:1px solid #e2e2e2;box-sizing:border-box;border-radius:2px;"></div>
<span id="t97" class="t" style="left:606.5px;transform-origin:0 50%;top:562.5px;font-size:11.3px;line-height:17.0px;color:#1c1c1c;transform:scaleX(0.9421);">x: 100</span>
<svg style="left:644.0px;top:569px" width="8.2" height="4.2" viewBox="0 0 9 5"><path d="M0 0H9L4.5 5Z" fill="#111"/></svg>
<div style="left:663px;top:559.5px;width:120px;height:23px;background:#f1f1f1;border:1px solid #e2e2e2;box-sizing:border-box;border-radius:2px;"></div>
<span id="t98" class="t" style="left:666px;transform-origin:0 50%;top:562.5px;font-size:11.3px;line-height:17.0px;color:#1c1c1c;transform:scaleX(0.9267);">unit: ARCSECONDS</span>
<svg style="left:769.5px;top:569px" width="8.2" height="4.2" viewBox="0 0 9 5"><path d="M0 0H9L4.5 5Z" fill="#111"/></svg>
<div style="left:788.5px;top:559.5px;width:47px;height:23px;background:#0d4166;"></div>
<span id="t99" class="t" style="left:812px;transform-origin:50% 50%;top:559.8px;font-size:15px;line-height:22.5px;color:#ffffff;font-weight:bold;transform:translateX(-50%) scaleX(0.7109);">クリア</span>
<svg style="left:0;top:0" width="1300" height="700" viewBox="0 0 1300 700"><rect x="233.5" y="591" width="613.5" height="79" fill="#fff" stroke="#e0e0e0" stroke-width="1"/><line x1="233.5" y1="670.3" x2="847" y2="670.3" stroke="#b8b8b8" stroke-width="1.1" stroke-dasharray="7 2"/><text x="227" y="674.8" font-size="12.5" text-anchor="end" fill="#111">-4</text><line x1="233.5" y1="660.4" x2="847" y2="660.4" stroke="#b8b8b8" stroke-width="1.1" stroke-dasharray="7 2"/><text x="227" y="664.9" font-size="12.5" text-anchor="end" fill="#111">-3</text><line x1="233.5" y1="650.4" x2="847" y2="650.4" stroke="#b8b8b8" stroke-width="1.1" stroke-dasharray="7 2"/><text x="227" y="654.9" font-size="12.5" text-anchor="end" fill="#111">-2</text><line x1="233.5" y1="640.5" x2="847" y2="640.5" stroke="#b8b8b8" stroke-width="1.1" stroke-dasharray="7 2"/><text x="227" y="645.0" font-size="12.5" text-anchor="end" fill="#111">-1</text><line x1="233.5" y1="630.5" x2="847" y2="630.5" stroke="#b8b8b8" stroke-width="1.1" stroke-dasharray="7 2"/><text x="227" y="635.0" font-size="12.5" text-anchor="end" fill="#111">0</text><line x1="233.5" y1="620.5" x2="847" y2="620.5" stroke="#b8b8b8" stroke-width="1.1" stroke-dasharray="7 2"/><text x="227" y="625.0" font-size="12.5" text-anchor="end" fill="#111">1</text><line x1="233.5" y1="610.6" x2="847" y2="610.6" stroke="#b8b8b8" stroke-width="1.1" stroke-dasharray="7 2"/><text x="227" y="615.1" font-size="12.5" text-anchor="end" fill="#111">2</text><line x1="233.5" y1="600.6" x2="847" y2="600.6" stroke="#b8b8b8" stroke-width="1.1" stroke-dasharray="7 2"/><text x="227" y="605.1" font-size="12.5" text-anchor="end" fill="#111">3</text><line x1="233.5" y1="590.7" x2="847" y2="590.7" stroke="#b8b8b8" stroke-width="1.1" stroke-dasharray="7 2"/><text x="227" y="595.2" font-size="12.5" text-anchor="end" fill="#111">4</text><line x1="229" y1="670.3" x2="233.5" y2="670.3" stroke="#9fb3c0" stroke-width="0.8"/><line x1="229" y1="668.3" x2="233.5" y2="668.3" stroke="#9fb3c0" stroke-width="0.8"/><line x1="229" y1="666.3" x2="233.5" y2="666.3" stroke="#9fb3c0" stroke-width="0.8"/><line x1="229" y1="664.3" x2="233.5" y2="664.3" stroke="#9fb3c0" stroke-width="0.8"/><line x1="229" y1="662.3" x2="233.5" y2="662.3" stroke="#9fb3c0" stroke-width="0.8"/><line x1="229" y1="660.4" x2="233.5" y2="660.4" stroke="#9fb3c0" stroke-width="0.8"/><line x1="229" y1="658.4" x2="233.5" y2="658.4" stroke="#9fb3c0" stroke-width="0.8"/><line x1="229" y1="656.4" x2="233.5" y2="656.4" stroke="#9fb3c0" stroke-width="0.8"/><line x1="229" y1="654.4" x2="233.5" y2="654.4" stroke="#9fb3c0" stroke-width="0.8"/><line x1="229" y1="652.4" x2="233.5" y2="652.4" stroke="#9fb3c0" stroke-width="0.8"/><line x1="229" y1="650.4" x2="233.5" y2="650.4" stroke="#9fb3c0" stroke-width="0.8"/><line x1="229" y1="648.4" x2="233.5" y2="648.4" stroke="#9fb3c0" stroke-width="0.8"/><line x1="229" y1="646.4" x2="233.5" y2="646.4" stroke="#9fb3c0" stroke-width="0.8"/><line x1="229" y1="644.4" x2="233.5" y2="644.4" stroke="#9fb3c0" stroke-width="0.8"/><line x1="229" y1="642.4" x2="233.5" y2="642.4" stroke="#9fb3c0" stroke-width="0.8"/><line x1="229" y1="640.4" x2="233.5" y2="640.4" stroke="#9fb3c0" stroke-width="0.8"/><line x1="229" y1="638.5" x2="233.5" y2="638.5" stroke="#9fb3c0" stroke-width="0.8"/><line x1="229" y1="636.5" x2="233.5" y2="636.5" stroke="#9fb3c0" stroke-width="0.8"/><line x1="229" y1="634.5" x2="233.5" y2="634.5" stroke="#9fb3c0" stroke-width="0.8"/><line x1="229" y1="632.5" x2="233.5" y2="632.5" stroke="#9fb3c0" stroke-width="0.8"/><line x1="229" y1="630.5" x2="233.5" y2="630.5" stroke="#9fb3c0" stroke-width="0.8"/><line x1="229" y1="628.5" x2="233.5" y2="628.5" stroke="#9fb3c0" stroke-width="0.8"/><line x1="229" y1="626.5" x2="233.5" y2="626.5" stroke="#9fb3c0" stroke-width="0.8"/><line x1="229" y1="624.5" x2="233.5" y2="624.5" stroke="#9fb3c0" stroke-width="0.8"/><line x1="229" y1="622.5" x2="233.5" y2="622.5" stroke="#9fb3c0" stroke-width="0.8"/><line x1="229" y1="620.5" x2="233.5" y2="620.5" stroke="#9fb3c0" stroke-width="0.8"/><line x1="229" y1="618.6" x2="233.5" y2="618.6" stroke="#9fb3c0" stroke-width="0.8"/><line x1="229" y1="616.6" x2="233.5" y2="616.6" stroke="#9fb3c0" stroke-width="0.8"/><line x1="229" y1="614.6" x2="233.5" y2="614.6" stroke="#9fb3c0" stroke-width="0.8"/><line x1="229" y1="612.6" x2="233.5" y2="612.6" stroke="#9fb3c0" stroke-width="0.8"/><line x1="229" y1="610.6" x2="233.5" y2="610.6" stroke="#9fb3c0" stroke-width="0.8"/><line x1="229" y1="608.6" x2="233.5" y2="608.6" stroke="#9fb3c0" stroke-width="0.8"/><line x1="229" y1="606.6" x2="233.5" y2="606.6" stroke="#9fb3c0" stroke-width="0.8"/><line x1="229" y1="604.6" x2="233.5" y2="604.6" stroke="#9fb3c0" stroke-width="0.8"/><line x1="229" y1="602.6" x2="233.5" y2="602.6" stroke="#9fb3c0" stroke-width="0.8"/><line x1="229" y1="600.6" x2="233.5" y2="600.6" stroke="#9fb3c0" stroke-width="0.8"/><line x1="229" y1="598.7" x2="233.5" y2="598.7" stroke="#9fb3c0" stroke-width="0.8"/><line x1="229" y1="596.7" x2="233.5" y2="596.7" stroke="#9fb3c0" stroke-width="0.8"/><line x1="229" y1="594.7" x2="233.5" y2="594.7" stroke="#9fb3c0" stroke-width="0.8"/><line x1="229" y1="592.7" x2="233.5" y2="592.7" stroke="#9fb3c0" stroke-width="0.8"/><line x1="229" y1="590.7" x2="233.5" y2="590.7" stroke="#9fb3c0" stroke-width="0.8"/><rect x="239.7" y="610.8" width="3.2" height="19.8" fill="#f3caca" stroke="#d04040" stroke-width="0.9"/><rect x="244.7" y="620.0" width="3.2" height="10.5" fill="#f3caca" stroke="#d04040" stroke-width="0.9"/><rect x="252.2" y="627.5" width="3.2" height="3.0" fill="#f3caca" stroke="#d04040" stroke-width="0.9"/><rect x="258.4" y="628.0" width="3.2" height="2.5" fill="#f3caca" stroke="#d04040" stroke-width="0.9"/><rect x="268.4" y="628.0" width="3.2" height="2.5" fill="#f3caca" stroke="#d04040" stroke-width="0.9"/><rect x="275.9" y="628.8" width="3.2" height="1.8" fill="#f3caca" stroke="#d04040" stroke-width="0.9"/><rect x="300.1" y="628.0" width="3.2" height="2.5" fill="#f3caca" stroke="#d04040" stroke-width="0.9"/><rect x="360.1" y="622.5" width="3.2" height="8.0" fill="#f3caca" stroke="#d04040" stroke-width="0.9"/><rect x="366.4" y="622.5" width="3.2" height="8.0" fill="#f3caca" stroke="#d04040" stroke-width="0.9"/><rect x="372.1" y="620.0" width="3.2" height="10.5" fill="#f3caca" stroke="#d04040" stroke-width="0.9"/><rect x="378.4" y="613.2" width="3.2" height="17.2" fill="#f3caca" stroke="#d04040" stroke-width="0.9"/><rect x="383.4" y="630.5" width="3.2" height="2.5" fill="#f3caca" stroke="#d04040" stroke-width="0.9"/><rect x="439.6" y="620.0" width="3.2" height="10.5" fill="#f3caca" stroke="#d04040" stroke-width="0.9"/><rect x="463.4" y="623.8" width="3.2" height="6.8" fill="#f3caca" stroke="#d04040" stroke-width="0.9"/><rect x="469.6" y="621.8" width="3.2" height="8.8" fill="#f3caca" stroke="#d04040" stroke-width="0.9"/><rect x="475.9" y="620.5" width="3.2" height="10.0" fill="#f3caca" stroke="#d04040" stroke-width="0.9"/><rect x="482.1" y="621.2" width="3.2" height="9.2" fill="#f3caca" stroke="#d04040" stroke-width="0.9"/><rect x="488.4" y="621.2" width="3.2" height="9.2" fill="#f3caca" stroke="#d04040" stroke-width="0.9"/><rect x="494.6" y="621.8" width="3.2" height="8.8" fill="#f3caca" stroke="#d04040" stroke-width="0.9"/><rect x="500.9" y="618.2" width="3.2" height="12.2" fill="#f3caca" stroke="#d04040" stroke-width="0.9"/><rect x="507.1" y="619.2" width="3.2" height="11.2" fill="#f3caca" stroke="#d04040" stroke-width="0.9"/><rect x="512.1" y="618.2" width="3.2" height="12.2" fill="#f3caca" stroke="#d04040" stroke-width="0.9"/><rect x="512.1" y="617.5" width="3.2" height="13.0" fill="#f3caca" stroke="#d04040" stroke-width="0.9"/><rect x="536.6" y="620.0" width="3.2" height="10.5" fill="#f3caca" stroke="#d04040" stroke-width="0.9"/><rect x="542.1" y="619.5" width="3.2" height="11.0" fill="#f3caca" stroke="#d04040" stroke-width="0.9"/><rect x="548.4" y="620.8" width="3.2" height="9.8" fill="#f3caca" stroke="#d04040" stroke-width="0.9"/><rect x="554.6" y="620.0" width="3.2" height="10.5" fill="#f3caca" stroke="#d04040" stroke-width="0.9"/><rect x="560.9" y="615.8" width="3.2" height="14.8" fill="#f3caca" stroke="#d04040" stroke-width="0.9"/><rect x="567.1" y="618.8" width="3.2" height="11.8" fill="#f3caca" stroke="#d04040" stroke-width="0.9"/><rect x="573.4" y="619.5" width="3.2" height="11.0" fill="#f3caca" stroke="#d04040" stroke-width="0.9"/><rect x="579.6" y="620.8" width="3.2" height="9.8" fill="#f3caca" stroke="#d04040" stroke-width="0.9"/><rect x="585.9" y="623.8" width="3.2" height="6.8" fill="#f3caca" stroke="#d04040" stroke-width="0.9"/><rect x="590.9" y="595.0" width="3.2" height="35.5" fill="#f3caca" stroke="#d04040" stroke-width="0.9"/><rect x="597.1" y="617.5" width="3.2" height="13.0" fill="#f3caca" stroke="#d04040" stroke-width="0.9"/><rect x="603.4" y="610.0" width="3.2" height="20.5" fill="#f3caca" stroke="#d04040" stroke-width="0.9"/><rect x="615.1" y="630.5" width="3.2" height="15.8" fill="#f3caca" stroke="#d04040" stroke-width="0.9"/><rect x="621.4" y="630.5" width="3.2" height="15.8" fill="#f3caca" stroke="#d04040" stroke-width="0.9"/><rect x="627.1" y="630.5" width="3.2" height="14.5" fill="#f3caca" stroke="#d04040" stroke-width="0.9"/><rect x="633.4" y="630.5" width="3.2" height="28.2" fill="#f3caca" stroke="#d04040" stroke-width="0.9"/><rect x="639.6" y="630.5" width="3.2" height="27.8" fill="#f3caca" stroke="#d04040" stroke-width="0.9"/><rect x="645.9" y="630.5" width="3.2" height="10.8" fill="#f3caca" stroke="#d04040" stroke-width="0.9"/><rect x="668.4" y="630.5" width="3.2" height="1.5" fill="#f3caca" stroke="#d04040" stroke-width="0.9"/><rect x="773.4" y="616.2" width="3.2" height="14.2" fill="#f3caca" stroke="#d04040" stroke-width="0.9"/><rect x="779.6" y="620.0" width="3.2" height="10.5" fill="#f3caca" stroke="#d04040" stroke-width="0.9"/><rect x="784.6" y="613.8" width="3.2" height="16.8" fill="#f3caca" stroke="#d04040" stroke-width="0.9"/><rect x="790.9" y="616.2" width="3.2" height="14.2" fill="#f3caca" stroke="#d04040" stroke-width="0.9"/><rect x="797.1" y="616.2" width="3.2" height="14.2" fill="#f3caca" stroke="#d04040" stroke-width="0.9"/><rect x="803.4" y="620.0" width="3.2" height="10.5" fill="#f3caca" stroke="#d04040" stroke-width="0.9"/><rect x="809.6" y="617.5" width="3.2" height="13.0" fill="#f3caca" stroke="#d04040" stroke-width="0.9"/><rect x="814.6" y="621.2" width="3.2" height="9.2" fill="#f3caca" stroke="#d04040" stroke-width="0.9"/><rect x="820.9" y="620.0" width="3.2" height="10.5" fill="#f3caca" stroke="#d04040" stroke-width="0.9"/><rect x="827.1" y="618.8" width="3.2" height="11.8" fill="#f3caca" stroke="#d04040" stroke-width="0.9"/><rect x="797.1" y="615.5" width="3.2" height="15.0" fill="#f3caca" stroke="#d04040" stroke-width="0.9"/><rect x="803.4" y="616.2" width="3.2" height="14.2" fill="#f3caca" stroke="#d04040" stroke-width="0.9"/><rect x="809.6" y="617.0" width="3.2" height="13.5" fill="#f3caca" stroke="#d04040" stroke-width="0.9"/><rect x="815.9" y="618.8" width="3.2" height="11.8" fill="#f3caca" stroke="#d04040" stroke-width="0.9"/><rect x="822.1" y="620.0" width="3.2" height="10.5" fill="#f3caca" stroke="#d04040" stroke-width="0.9"/><rect x="828.4" y="618.8" width="3.2" height="11.8" fill="#f3caca" stroke="#d04040" stroke-width="0.9"/><rect x="834.6" y="620.0" width="3.2" height="10.5" fill="#f3caca" stroke="#d04040" stroke-width="0.9"/><rect x="840.9" y="618.8" width="3.2" height="11.8" fill="#f3caca" stroke="#d04040" stroke-width="0.9"/><rect x="237.7" y="613.2" width="3.2" height="17.2" fill="#ececfb" stroke="#3a3ad0" stroke-width="0.9"/><rect x="249.7" y="617.5" width="3.2" height="13.0" fill="#ececfb" stroke="#3a3ad0" stroke-width="0.9"/><rect x="255.4" y="617.0" width="3.2" height="13.5" fill="#ececfb" stroke="#3a3ad0" stroke-width="0.9"/><rect x="261.4" y="617.0" width="3.2" height="13.5" fill="#ececfb" stroke="#3a3ad0" stroke-width="0.9"/><rect x="267.6" y="616.2" width="3.2" height="14.2" fill="#ececfb" stroke="#3a3ad0" stroke-width="0.9"/><rect x="273.4" y="591.2" width="3.2" height="39.2" fill="#ececfb" stroke="#3a3ad0" stroke-width="0.9"/><rect x="275.9" y="591.2" width="3.2" height="39.2" fill="#ececfb" stroke="#3a3ad0" stroke-width="0.9"/><rect x="286.4" y="630.5" width="3.2" height="14.5" fill="#ececfb" stroke="#3a3ad0" stroke-width="0.9"/><rect x="292.6" y="630.5" width="3.2" height="14.5" fill="#ececfb" stroke="#3a3ad0" stroke-width="0.9"/><rect x="298.4" y="630.5" width="3.2" height="16.5" fill="#ececfb" stroke="#3a3ad0" stroke-width="0.9"/><rect x="345.4" y="630.5" width="3.2" height="16.5" fill="#ececfb" stroke="#3a3ad0" stroke-width="0.9"/><rect x="347.9" y="630.5" width="3.2" height="16.5" fill="#ececfb" stroke="#3a3ad0" stroke-width="0.9"/><rect x="394.6" y="630.5" width="3.2" height="2.5" fill="#ececfb" stroke="#3a3ad0" stroke-width="0.9"/><rect x="432.1" y="619.2" width="3.2" height="11.2" fill="#ececfb" stroke="#3a3ad0" stroke-width="0.9"/><rect x="437.9" y="619.2" width="3.2" height="11.2" fill="#ececfb" stroke="#3a3ad0" stroke-width="0.9"/><rect x="443.4" y="621.2" width="3.2" height="9.2" fill="#ececfb" stroke="#3a3ad0" stroke-width="0.9"/><rect x="449.6" y="622.5" width="3.2" height="8.0" fill="#ececfb" stroke="#3a3ad0" stroke-width="0.9"/><rect x="462.1" y="619.2" width="3.2" height="11.2" fill="#ececfb" stroke="#3a3ad0" stroke-width="0.9"/><rect x="497.1" y="627.0" width="3.2" height="3.5" fill="#ececfb" stroke="#3a3ad0" stroke-width="0.9"/><rect x="504.6" y="625.0" width="3.2" height="5.5" fill="#ececfb" stroke="#3a3ad0" stroke-width="0.9"/><rect x="510.9" y="623.8" width="3.2" height="6.8" fill="#ececfb" stroke="#3a3ad0" stroke-width="0.9"/><rect x="517.1" y="623.0" width="3.2" height="7.5" fill="#ececfb" stroke="#3a3ad0" stroke-width="0.9"/><rect x="517.1" y="622.5" width="3.2" height="8.0" fill="#ececfb" stroke="#3a3ad0" stroke-width="0.9"/><rect x="522.1" y="618.8" width="3.2" height="11.8" fill="#ececfb" stroke="#3a3ad0" stroke-width="0.9"/><rect x="528.4" y="620.0" width="3.2" height="10.5" fill="#ececfb" stroke="#3a3ad0" stroke-width="0.9"/><rect x="588.4" y="630.5" width="3.2" height="7.0" fill="#ececfb" stroke="#3a3ad0" stroke-width="0.9"/><rect x="637.9" y="621.2" width="3.2" height="9.2" fill="#ececfb" stroke="#3a3ad0" stroke-width="0.9"/><rect x="643.4" y="622.5" width="3.2" height="8.0" fill="#ececfb" stroke="#3a3ad0" stroke-width="0.9"/><rect x="686.4" y="630.5" width="3.2" height="16.5" fill="#ececfb" stroke="#3a3ad0" stroke-width="0.9"/><rect x="692.6" y="630.5" width="3.2" height="9.0" fill="#ececfb" stroke="#3a3ad0" stroke-width="0.9"/><rect x="704.6" y="630.5" width="3.2" height="16.5" fill="#ececfb" stroke="#3a3ad0" stroke-width="0.9"/><rect x="752.1" y="630.5" width="3.2" height="4.0" fill="#ececfb" stroke="#3a3ad0" stroke-width="0.9"/><rect x="758.4" y="630.5" width="3.2" height="7.0" fill="#ececfb" stroke="#3a3ad0" stroke-width="0.9"/><rect x="764.6" y="630.5" width="3.2" height="16.5" fill="#ececfb" stroke="#3a3ad0" stroke-width="0.9"/><rect x="789.6" y="621.2" width="3.2" height="9.2" fill="#ececfb" stroke="#3a3ad0" stroke-width="0.9"/><rect x="813.4" y="621.2" width="3.2" height="9.2" fill="#ececfb" stroke="#3a3ad0" stroke-width="0.9"/><rect x="819.6" y="617.5" width="3.2" height="13.0" fill="#ececfb" stroke="#3a3ad0" stroke-width="0.9"/><rect x="824.6" y="617.0" width="3.2" height="13.5" fill="#ececfb" stroke="#3a3ad0" stroke-width="0.9"/><rect x="830.9" y="616.2" width="3.2" height="14.2" fill="#ececfb" stroke="#3a3ad0" stroke-width="0.9"/><rect x="807.1" y="621.2" width="3.2" height="9.2" fill="#ececfb" stroke="#3a3ad0" stroke-width="0.9"/><rect x="813.4" y="618.8" width="3.2" height="11.8" fill="#ececfb" stroke="#3a3ad0" stroke-width="0.9"/><rect x="819.6" y="617.0" width="3.2" height="13.5" fill="#ececfb" stroke="#3a3ad0" stroke-width="0.9"/><rect x="825.9" y="618.8" width="3.2" height="11.8" fill="#ececfb" stroke="#3a3ad0" stroke-width="0.9"/><rect x="830.9" y="617.0" width="3.2" height="13.5" fill="#ececfb" stroke="#3a3ad0" stroke-width="0.9"/><rect x="838.4" y="610.0" width="3.2" height="20.5" fill="#ececfb" stroke="#3a3ad0" stroke-width="0.9"/><polyline points="240.0,641.2 246.2,636.2 253.8,642.0 262.5,641.2 270.0,645.0 276.2,652.0 278.8,645.0 282.5,628.8 288.8,622.0 295.0,622.5 301.2,621.2 306.2,629.5 312.5,627.5 318.8,630.8 325.0,632.0 331.2,628.8 338.8,621.2 348.8,613.2 355.0,628.0 361.2,628.8 367.5,628.0 373.8,629.5 380.0,629.5 386.2,624.5 392.5,629.5 398.8,626.2 407.5,627.0 420.0,628.2 427.5,629.5 435.0,638.0 445.0,635.8 452.5,634.5 458.8,631.2 465.0,635.0 472.5,632.5 482.5,630.0 495.0,636.2 502.5,635.5 510.0,638.0 510.0,636.2 520.0,637.5 530.0,636.2 540.0,631.2 550.0,635.0 560.0,631.2 575.0,631.2 585.0,632.0 591.2,626.2 596.2,628.8 605.0,629.5 610.0,627.5 620.0,623.0 627.5,621.8 635.0,628.8 645.0,635.0 652.5,631.2 660.0,630.0 670.0,626.2 680.0,628.8 688.8,621.2 696.2,627.5 706.2,618.8 713.8,630.0 722.5,628.0 730.0,629.5 737.5,629.5 747.5,621.2 757.5,620.8 767.5,621.2 775.0,630.8 782.5,632.5 790.0,634.5 792.5,634.5 797.5,631.2 798.8,630.8 805.0,631.2 807.5,633.8 810.0,633.8 817.5,636.2 817.5,635.8 827.5,637.5 827.5,638.0 833.8,641.2 840.0,644.2" fill="none" stroke="#1a1ae8" stroke-width="2" stroke-linejoin="round"/><polyline points="240.0,642.0 246.2,635.5 253.8,637.5 260.0,637.0 265.0,635.8 270.0,638.8 276.2,642.5 282.5,636.2 288.8,633.8 295.0,634.5 301.2,638.0 307.5,635.0 315.0,634.5 322.5,635.5 331.2,634.5 340.0,635.8 347.5,634.5 355.0,637.0 360.0,639.5 367.5,636.2 373.8,640.0 380.0,644.2 385.0,631.2 392.5,629.5 400.0,628.8 410.0,630.8 420.0,629.5 430.0,631.2 435.0,634.5 445.0,633.8 452.5,632.5 458.0,628.8 465.0,636.2 472.5,637.0 477.5,638.2 485.0,637.0 492.5,636.2 498.8,638.0 506.2,637.0 510.0,637.5 512.5,638.8 520.0,636.2 530.0,640.5 537.5,640.0 545.0,637.5 553.8,644.2 562.5,643.2 572.5,641.2 582.5,642.5 590.0,646.2 597.5,636.2 605.0,638.8 612.5,626.2 620.0,622.5 627.5,622.0 635.0,616.2 640.0,617.0 647.5,626.2 657.5,629.5 665.0,623.0 672.5,623.8 682.5,630.0 690.0,627.0 700.0,628.8 710.0,628.8 722.5,630.0 732.5,628.0 740.0,632.0 750.0,632.5 760.0,630.0 767.5,635.8 777.5,636.2 785.0,634.5 787.5,637.5 792.5,635.8 795.0,635.0 800.0,633.2 802.5,636.2 810.0,636.2 810.0,639.5 820.0,637.0 820.0,637.0 827.5,638.8 827.5,637.5 833.8,642.5 839.5,644.2" fill="none" stroke="#e82020" stroke-width="2" stroke-linejoin="round"/><rect x="241.5" y="648" width="313" height="14.5" fill="#fff" stroke="#dcdcdc" stroke-width="1"/><rect x="244.5" y="651.5" width="7.5" height="7.5" fill="none" stroke="#3a3ad0" stroke-width="1"/><text x="256" y="659" font-size="9.5" fill="#111" font-weight="bold" textLength="38" lengthAdjust="spacingAndGlyphs">赤経修正</text><rect x="318" y="651.5" width="7.5" height="7.5" fill="none" stroke="#d04040" stroke-width="1"/><text x="331" y="659" font-size="9.5" fill="#111" font-weight="bold" textLength="38" lengthAdjust="spacingAndGlyphs">赤緯修正</text><line x1="387" y1="655.5" x2="396" y2="655.5" stroke="#1a1ae8" stroke-width="1.8"/><text x="405" y="659" font-size="9.5" fill="#111" font-weight="bold" textLength="19" lengthAdjust="spacingAndGlyphs">赤経</text><line x1="447" y1="655.5" x2="456" y2="655.5" stroke="#e82020" stroke-width="1.8"/><text x="460" y="659" font-size="9.5" fill="#111" font-weight="bold" textLength="19" lengthAdjust="spacingAndGlyphs">赤緯</text><path d="M507 651.5l4.5 7.5h-9z" fill="#111"/><text x="515" y="659" font-size="9.5" fill="#111" font-weight="bold" textLength="35" lengthAdjust="spacingAndGlyphs">ディザリング</text><text x="840" y="603.5" font-size="12" fill="#222" text-anchor="end" textLength="62" lengthAdjust="spacingAndGlyphs">GuideNorth</text><text x="840" y="666" font-size="12" fill="#222" text-anchor="end" textLength="54" lengthAdjust="spacingAndGlyphs">GuideEast</text></svg>
<div style="left:865.5px;top:540px;width:130px;height:14.5px;background:#0c3c5e;"></div>
<div style="left:865.5px;top:554.5px;width:130px;height:123.5px;background:#fff;"></div>
<span id="t100" class="t" style="left:868.3px;transform-origin:0 50%;top:541.4px;font-size:9.5px;line-height:14.2px;color:#e8f0f5;font-weight:bold;transform:scaleX(0.9864);">画像履歴</span>
<svg style="left:982.0px;top:541.25px" width="12" height="12" viewBox="0 0 12 12"><path d="M1 1L11 11M11 1L1 11" stroke="#a9c2d2" stroke-width="1.1" fill="none"/></svg>
<svg style="left:0;top:0" width="1300" height="700" viewBox="0 0 1300 700"><defs><radialGradient id="tg"><stop offset="0" stop-color="#fff"/><stop offset="0.18" stop-color="#fff" stop-opacity="0.9"/><stop offset="0.35" stop-color="#fff" stop-opacity="0.45"/><stop offset="0.55" stop-color="#fff" stop-opacity="0.16"/><stop offset="0.8" stop-color="#fff" stop-opacity="0.04"/><stop offset="1" stop-color="#fff" stop-opacity="0"/></radialGradient></defs><rect x="867.5" y="557" width="2" height="101" fill="#0c3c5e"/><rect x="871.5" y="557.5" width="121.5" height="101" fill="#fff" stroke="#4aa3e0" stroke-width="1"/><rect x="874" y="560" width="116.5" height="96" fill="#2a2a2a"/><circle cx="935" cy="617" r="11" fill="url(#tg)"/><rect x="878" y="561" width="49.5" height="15" fill="#fff"/><text x="880" y="572.5" font-size="11.5" fill="#111" textLength="45" lengthAdjust="spacingAndGlyphs">算術平均</text><rect x="878" y="576" width="23" height="15" fill="#fff"/><text x="880" y="587.5" font-size="11.5" fill="#111" textLength="20" lengthAdjust="spacingAndGlyphs">HFR</text><rect x="878" y="591" width="41" height="15.5" fill="#fff"/><text x="880" y="603.0" font-size="11.5" fill="#111" textLength="37" lengthAdjust="spacingAndGlyphs">フィルター</text><rect x="932.5" y="561" width="27" height="15" fill="#fff"/><text x="934.5" y="572.5" font-size="11.5" fill="#111" textLength="23.5" lengthAdjust="spacingAndGlyphs">3471</text><rect x="932.5" y="576" width="24" height="15" fill="#fff"/><text x="934.5" y="587.5" font-size="11.5" fill="#111" textLength="20.5" lengthAdjust="spacingAndGlyphs">2.80</text><rect x="932.5" y="591" width="9.5" height="15.5" fill="#fff"/><text x="934.5" y="603.0" font-size="11.5" fill="#111" textLength="6" lengthAdjust="spacingAndGlyphs">B</text><rect x="878" y="635" width="49.5" height="15.5" fill="#fff"/><text x="880" y="647.0" font-size="11.5" fill="#111" textLength="45" lengthAdjust="spacingAndGlyphs">継続時間</text><rect x="932.5" y="635" width="41" height="15.5" fill="#fff"/><text x="934.5" y="647.0" font-size="11.5" fill="#111" textLength="37.5" lengthAdjust="spacingAndGlyphs">300.00s</text><clipPath id="thc"><rect x="874" y="560" width="116.5" height="96"/></clipPath><g clip-path="url(#thc)"><rect x="878" y="650.5" width="26" height="15" fill="#fff"/><text x="880" y="662" font-size="11.5" fill="#111">日付</text><rect x="932.5" y="650.5" width="55" height="15" fill="#fff"/><text x="934.5" y="662" font-size="11.5" fill="#111">00:08:05</text></g></svg>
<div style="left:868px;top:664px;width:126px;height:7px;background:#c9d7e0;border-radius:3.5px;"></div>
<div style="left:986px;top:664px;width:8px;height:7px;background:#0d4166;border-radius:3.5px;"></div>
<div style="left:1001px;top:58px;width:299px;height:14.5px;background:#0c3c5e;"></div>
<div style="left:1001px;top:72.5px;width:299px;height:586.5px;background:#fff;"></div>
<span id="t101" class="t" style="left:1003.8px;transform-origin:0 50%;top:59.4px;font-size:9.5px;line-height:14.2px;color:#e8f0f5;font-weight:bold;transform:scaleX(0.7104);">オートフォーカス</span>
<svg style="left:1296.5px;top:59.25px" width="12" height="12" viewBox="0 0 12 12"><path d="M1 1L11 11M11 1L1 11" stroke="#a9c2d2" stroke-width="1.1" fill="none"/></svg>
<svg style="left:0;top:0" width="1300" height="700" viewBox="0 0 1300 700"><rect x="1030.5" y="80.5" width="264.5" height="281.0" fill="#fff" stroke="#dcdcdc" stroke-width="1"/><line x1="1033.3" y1="80.5" x2="1033.3" y2="361.5" stroke="#cfcfcf" stroke-width="1" stroke-dasharray="4 2"/><line x1="1094.3" y1="80.5" x2="1094.3" y2="361.5" stroke="#cfcfcf" stroke-width="1" stroke-dasharray="4 2"/><line x1="1155.3" y1="80.5" x2="1155.3" y2="361.5" stroke="#cfcfcf" stroke-width="1" stroke-dasharray="4 2"/><line x1="1216.3" y1="80.5" x2="1216.3" y2="361.5" stroke="#cfcfcf" stroke-width="1" stroke-dasharray="4 2"/><line x1="1277.3" y1="80.5" x2="1277.3" y2="361.5" stroke="#cfcfcf" stroke-width="1" stroke-dasharray="4 2"/><line x1="1030.5" y1="290.3" x2="1295" y2="290.3" stroke="#cfcfcf" stroke-width="1" stroke-dasharray="6 2"/><text x="1020" y="294.3" font-size="11.5" text-anchor="end" fill="#222">4</text><line x1="1030.5" y1="195.1" x2="1295" y2="195.1" stroke="#cfcfcf" stroke-width="1" stroke-dasharray="6 2"/><text x="1020" y="199.1" font-size="11.5" text-anchor="end" fill="#222">6</text><line x1="1030.5" y1="99.9" x2="1295" y2="99.9" stroke="#cfcfcf" stroke-width="1" stroke-dasharray="6 2"/><text x="1020" y="103.9" font-size="11.5" text-anchor="end" fill="#222">8</text><line x1="1027.5" y1="337.9" x2="1030.5" y2="337.9" stroke="#8a8a8a" stroke-width="1"/><line x1="1027.5" y1="314.1" x2="1030.5" y2="314.1" stroke="#8a8a8a" stroke-width="1"/><line x1="1025.5" y1="290.3" x2="1030.5" y2="290.3" stroke="#8a8a8a" stroke-width="1"/><line x1="1027.5" y1="266.5" x2="1030.5" y2="266.5" stroke="#8a8a8a" stroke-width="1"/><line x1="1027.5" y1="242.7" x2="1030.5" y2="242.7" stroke="#8a8a8a" stroke-width="1"/><line x1="1027.5" y1="218.9" x2="1030.5" y2="218.9" stroke="#8a8a8a" stroke-width="1"/><line x1="1025.5" y1="195.1" x2="1030.5" y2="195.1" stroke="#8a8a8a" stroke-width="1"/><line x1="1027.5" y1="171.3" x2="1030.5" y2="171.3" stroke="#8a8a8a" stroke-width="1"/><line x1="1027.5" y1="147.5" x2="1030.5" y2="147.5" stroke="#8a8a8a" stroke-width="1"/><line x1="1027.5" y1="123.7" x2="1030.5" y2="123.7" stroke="#8a8a8a" stroke-width="1"/><line x1="1025.5" y1="99.9" x2="1030.5" y2="99.9" stroke="#8a8a8a" stroke-width="1"/><line x1="1033.3" y1="361.5" x2="1033.3" y2="367.5" stroke="#8a8a8a" stroke-width="1"/><line x1="1045.5" y1="361.5" x2="1045.5" y2="365.0" stroke="#8a8a8a" stroke-width="1"/><line x1="1057.7" y1="361.5" x2="1057.7" y2="365.0" stroke="#8a8a8a" stroke-width="1"/><line x1="1069.9" y1="361.5" x2="1069.9" y2="365.0" stroke="#8a8a8a" stroke-width="1"/><line x1="1082.1" y1="361.5" x2="1082.1" y2="365.0" stroke="#8a8a8a" stroke-width="1"/><line x1="1094.3" y1="361.5" x2="1094.3" y2="367.5" stroke="#8a8a8a" stroke-width="1"/><line x1="1106.5" y1="361.5" x2="1106.5" y2="365.0" stroke="#8a8a8a" stroke-width="1"/><line x1="1118.7" y1="361.5" x2="1118.7" y2="365.0" stroke="#8a8a8a" stroke-width="1"/><line x1="1130.9" y1="361.5" x2="1130.9" y2="365.0" stroke="#8a8a8a" stroke-width="1"/><line x1="1143.1" y1="361.5" x2="1143.1" y2="365.0" stroke="#8a8a8a" stroke-width="1"/><line x1="1155.3" y1="361.5" x2="1155.3" y2="367.5" stroke="#8a8a8a" stroke-width="1"/><line x1="1167.5" y1="361.5" x2="1167.5" y2="365.0" stroke="#8a8a8a" stroke-width="1"/><line x1="1179.7" y1="361.5" x2="1179.7" y2="365.0" stroke="#8a8a8a" stroke-width="1"/><line x1="1191.9" y1="361.5" x2="1191.9" y2="365.0" stroke="#8a8a8a" stroke-width="1"/><line x1="1204.1" y1="361.5" x2="1204.1" y2="365.0" stroke="#8a8a8a" stroke-width="1"/><line x1="1216.3" y1="361.5" x2="1216.3" y2="367.5" stroke="#8a8a8a" stroke-width="1"/><line x1="1228.5" y1="361.5" x2="1228.5" y2="365.0" stroke="#8a8a8a" stroke-width="1"/><line x1="1240.7" y1="361.5" x2="1240.7" y2="365.0" stroke="#8a8a8a" stroke-width="1"/><line x1="1252.9" y1="361.5" x2="1252.9" y2="365.0" stroke="#8a8a8a" stroke-width="1"/><line x1="1265.1" y1="361.5" x2="1265.1" y2="365.0" stroke="#8a8a8a" stroke-width="1"/><line x1="1277.3" y1="361.5" x2="1277.3" y2="367.5" stroke="#8a8a8a" stroke-width="1"/><line x1="1289.5" y1="361.5" x2="1289.5" y2="365.0" stroke="#8a8a8a" stroke-width="1"/><text x="1033.3" y="384" font-size="11.5" text-anchor="middle" fill="#222" textLength="34" lengthAdjust="spacingAndGlyphs">26800</text><text x="1094.3" y="384" font-size="11.5" text-anchor="middle" fill="#222" textLength="34" lengthAdjust="spacingAndGlyphs">26850</text><text x="1155.3" y="384" font-size="11.5" text-anchor="middle" fill="#222" textLength="34" lengthAdjust="spacingAndGlyphs">26900</text><text x="1216.3" y="384" font-size="11.5" text-anchor="middle" fill="#222" textLength="34" lengthAdjust="spacingAndGlyphs">26950</text><text x="1277.3" y="384" font-size="11.5" text-anchor="middle" fill="#222" textLength="34" lengthAdjust="spacingAndGlyphs">27000</text><clipPath id="afc"><rect x="1030.5" y="80.5" width="264.5" height="281.0"/></clipPath><g clip-path="url(#afc)"><polyline points="1029.6,29.7 1033.3,40.9 1037.0,52.0 1040.6,63.1 1044.3,74.1 1047.9,85.1 1051.6,96.1 1055.3,107.0 1058.9,117.9 1062.6,128.7 1066.2,139.5 1069.9,150.2 1073.6,160.8 1077.2,171.4 1080.9,181.8 1084.5,192.2 1088.2,202.4 1091.9,212.6 1095.5,222.6 1099.2,232.4 1102.8,242.1 1106.5,251.6 1110.2,260.9 1113.8,269.9 1117.5,278.7 1121.1,287.1 1124.8,295.2 1128.5,302.9 1132.1,310.1 1135.8,316.8 1139.4,322.9 1143.1,328.4 1146.8,333.1 1150.4,337.0 1154.1,340.1 1157.7,342.2 1161.4,343.4 1165.1,343.6 1168.7,342.7 1172.4,340.9 1176.0,338.2 1179.7,334.5 1183.4,330.0 1187.0,324.8 1190.7,318.9 1194.3,312.4 1198.0,305.3 1201.7,297.8 1205.3,289.8 1209.0,281.5 1212.6,272.9 1216.3,263.9 1220.0,254.7 1223.6,245.3 1227.3,235.7 1230.9,225.9 1234.6,215.9 1238.3,205.8 1241.9,195.6 1245.6,185.3 1249.2,174.9 1252.9,164.3 1256.6,153.7 1260.2,143.1 1263.9,132.3 1267.5,121.5 1271.2,110.7 1274.9,99.8 1278.5,88.8 1282.2,77.8 1285.8,66.8 1289.5,55.7 1293.2,44.6 1296.8,33.5" fill="none" stroke="#4f7590" stroke-width="1.2" stroke-dasharray="4 2"/><line x1="1029.6" y1="54.7" x2="1163.8" y2="416.4" stroke="#7f9db3" stroke-width="1" opacity="0.0"/><polyline points="1053.9,103.5 1077.7,171.5 1103,241.4 1126.8,309.9 1151.8,333.4 1175.4,336.6 1199.9,301.4 1224.7,245 1249,174 1273,122" fill="none" stroke="#44708e" stroke-width="2.4" stroke-linejoin="round"/><circle cx="1053.9" cy="103.5" r="4.6" fill="#0b0b0b"/><circle cx="1077.7" cy="171.5" r="4.6" fill="#0b0b0b"/><circle cx="1103" cy="241.4" r="4.6" fill="#0b0b0b"/><circle cx="1126.8" cy="309.9" r="4.6" fill="#0b0b0b"/><circle cx="1151.8" cy="333.4" r="4.6" fill="#0b0b0b"/><circle cx="1175.4" cy="336.6" r="4.6" fill="#0b0b0b"/><circle cx="1199.9" cy="301.4" r="4.6" fill="#0b0b0b"/><circle cx="1224.7" cy="245" r="4.6" fill="#0b0b0b"/><circle cx="1249" cy="174" r="4.6" fill="#0b0b0b"/><circle cx="1273" cy="122" r="4.6" fill="#0b0b0b"/><path d="M1053.9 70V133M1051.4 70h5M1051.4 133h5" stroke="#841616" stroke-width="1.8" fill="none"/><path d="M1077.7 159.4V182M1075.2 159.4h5M1075.2 182h5" stroke="#841616" stroke-width="1.8" fill="none"/><path d="M1103 232.6V249.6M1100.5 232.6h5M1100.5 249.6h5" stroke="#841616" stroke-width="1.8" fill="none"/><path d="M1126.8 303.3V317.2M1124.3 303.3h5M1124.3 317.2h5" stroke="#841616" stroke-width="1.8" fill="none"/><path d="M1151.8 326.4V340.7M1149.3 326.4h5M1149.3 340.7h5" stroke="#841616" stroke-width="1.8" fill="none"/><path d="M1175.4 330.5V341.5M1172.9 330.5h5M1172.9 341.5h5" stroke="#841616" stroke-width="1.8" fill="none"/><path d="M1199.9 293.6V309.4M1197.4 293.6h5M1197.4 309.4h5" stroke="#841616" stroke-width="1.8" fill="none"/><path d="M1224.7 233.8V258.1M1222.2 233.8h5M1222.2 258.1h5" stroke="#841616" stroke-width="1.8" fill="none"/><path d="M1249 150.6V195.8M1246.5 150.6h5M1246.5 195.8h5" stroke="#841616" stroke-width="1.8" fill="none"/><path d="M1273 91.4V152M1270.5 91.4h5M1270.5 152h5" stroke="#841616" stroke-width="1.8" fill="none"/><path d="M1163.5 339.6l3.8 3.8l-3.8 3.8l-3.8-3.8z" fill="#1d5a80"/></g></svg>
<span id="t102" class="t" style="left:1006.5px;transform-origin:0 50%;top:399.4px;font-size:11px;line-height:16.5px;color:#1c1c1c;">時間</span>
<span id="t103" class="t" style="left:1159.5px;transform-origin:0 50%;top:399.4px;font-size:11px;line-height:16.5px;color:#1c1c1c;transform:scaleX(1.0180);">2025-07-24 00:02:50</span>
<span id="t104" class="t" style="left:1006.5px;transform-origin:0 50%;top:419.4px;font-size:11px;line-height:16.5px;color:#1c1c1c;">位置</span>
<span id="t105" class="t" style="left:1159.5px;transform-origin:0 50%;top:419.4px;font-size:11px;line-height:16.5px;color:#1c1c1c;transform:scaleX(1.0024);">26907.00</span>
<span id="t106" class="t" style="left:1006.5px;transform-origin:0 50%;top:439.4px;font-size:11px;line-height:16.5px;color:#1c1c1c;">HFR</span>
<span id="t107" class="t" style="left:1159.5px;transform-origin:0 50%;top:439.4px;font-size:11px;line-height:16.5px;color:#1c1c1c;">2.88</span>
<span id="t108" class="t" style="left:1006.5px;transform-origin:0 50%;top:459.2px;font-size:11px;line-height:16.5px;color:#1c1c1c;">温度</span>
<span id="t109" class="t" style="left:1159.5px;transform-origin:0 50%;top:459.2px;font-size:11px;line-height:16.5px;color:#1c1c1c;transform:scaleX(0.9782);">29.71 °C</span>
<span id="t110" class="t" style="left:1006.5px;transform-origin:0 50%;top:479.1px;font-size:11px;line-height:16.5px;color:#1c1c1c;transform:scaleX(0.7302);">フィルター</span>
<span id="t111" class="t" style="left:1159.5px;transform-origin:0 50%;top:479.1px;font-size:11px;line-height:16.5px;color:#1c1c1c;">IR</span>
<span id="t112" class="t" style="left:1006.5px;transform-origin:0 50%;top:499.1px;font-size:11px;line-height:16.5px;color:#1c1c1c;transform:scaleX(0.9715);">双曲線の R²</span>
<span id="t113" class="t" style="left:1159.5px;transform-origin:0 50%;top:499.1px;font-size:11px;line-height:16.5px;color:#1c1c1c;">0.99</span>
<span id="t114" class="t" style="left:1006.5px;transform-origin:0 50%;top:513.8px;font-size:11px;line-height:16.5px;color:#1c1c1c;transform:scaleX(1.0227);">継続時間</span>
<span id="t115" class="t" style="left:1159.5px;transform-origin:0 50%;top:513.8px;font-size:11px;line-height:16.5px;color:#1c1c1c;transform:scaleX(1.0040);">01:50.04</span>
<div style="left:1015.5px;top:576px;width:290px;height:23px;background:#f3f3f3;border:1px solid #e2e2e2;box-sizing:border-box;border-radius:2px;"></div>
<span id="t116" class="t" style="left:1018.5px;transform-origin:0 50%;top:578.9px;font-size:11.5px;line-height:17.2px;color:#1c1c1c;transform:scaleX(1.0014);">2025-07-24--00-02-50.json</span>
<svg style="left:1287.5px;top:585.5px" width="8.2" height="4.2" viewBox="0 0 9 5"><path d="M0 0H9L4.5 5Z" fill="#111"/></svg>
<div style="left:1015.5px;top:605.5px;width:290px;height:21.5px;background:#a3b7c5;"></div>
<span id="t117" class="t" style="left:1158px;transform-origin:50% 50%;top:606.2px;font-size:13px;line-height:19.5px;color:#d5e0e8;font-weight:bold;transform:translateX(-50%) scaleX(0.8307);">オートフォーカス開始</span>
<div style="left:1001px;top:659px;width:299px;height:19px;background:#124f78;"></div>
<div style="left:1001px;top:659px;width:71px;height:19px;background:#fff;"></div>
<span id="t118" class="t" style="left:1036.5px;transform-origin:50% 50%;top:661.3px;font-size:12px;line-height:18.0px;color:#1c1c1c;transform:translateX(-50%) scaleX(0.7023);">プレートソルブ</span>
<div style="left:1072px;top:659px;width:76.5px;height:19px;background:#0c3c5e;"></div>
<span id="t119" class="t" style="left:1110px;transform-origin:50% 50%;top:661.3px;font-size:12px;line-height:18.0px;color:#ffffff;font-weight:bold;transform:translateX(-50%) scaleX(0.6770);">オートフォーカス</span>
<span id="t120" class="t" style="left:79px;transform-origin:0 50%;top:684.9px;font-size:11.3px;line-height:17.0px;color:#1c1c1c;transform:scaleX(0.9697);">撮像 :</span>
<span id="t121" class="t" style="left:118px;transform-origin:0 50%;top:684.9px;font-size:11.3px;line-height:17.0px;color:#1c1c1c;transform:scaleX(0.9903);">露出中 02:57 / 05:00</span>
<div style="left:230px;top:683px;width:94.5px;height:17px;background:#fff;border:1px solid #dfe6ea;box-sizing:border-box;"></div>
<div style="left:230px;top:683px;width:56px;height:17px;background:#5b7f9b;"></div>
<span id="t122" class="t" style="left:277px;transform-origin:50% 50%;top:684.4px;font-size:12px;line-height:18.0px;color:#1e2d3a;transform:translateX(-50%) scaleX(1.0000);">59%</span>
<div style="left:349px;top:682px;width:1px;height:18px;background:#d5d5d5;"></div>
<svg style="left:0;top:0" width="1300" height="700" viewBox="0 0 1300 700"><g fill="none" stroke="#b5cbdb" stroke-width="1.2"><path d="M3.5 3V-0.5H7M24 -0.5H27.5V3M27.5 15V18.5H24M7 18.5H3.5V15"/></g><ellipse cx="15.5" cy="8.5" rx="10" ry="6.3" transform="rotate(-22 15.5 8.5)" fill="none" stroke="#2f7cc0" stroke-width="2.2"/><ellipse cx="15.5" cy="8.7" rx="6" ry="3.6" transform="rotate(-22 15.5 8.7)" fill="none" stroke="#3d8cd0" stroke-width="1.6"/><ellipse cx="15.5" cy="8.8" rx="2.4" ry="1.4" transform="rotate(-22 15.5 8.8)" fill="#6fb2e8"/><path d="M1170.7 5.5V11.5M1167.6 9L1170.7 12.2L1173.8 9" fill="none" stroke="#fff" stroke-width="1.8"/><rect x="1166" y="13.6" width="9.4" height="1.8" fill="#fff"/><rect x="1192.3" y="9" width="11.2" height="2" fill="#fff"/><path d="M1235.9 7.2H1243.6V14.6H1235.9Z M1237.6 7.2V5.6H1245.2V13H1243.6" fill="none" stroke="#6f9ab8" stroke-width="1.1"/><path d="M1278.5 5.4L1288.5 14.6M1288.5 5.4L1278.5 14.6" stroke="#a9c5d8" stroke-width="1.2"/><g fill="none" stroke="#c9d8e3"><rect x="18.6" y="38.6" width="32.4" height="20.4" rx="1.5" stroke-width="1.5"/><path d="M15.8 61.2H54" stroke-width="2"/><circle cx="29.8" cy="52.6" r="3.2" stroke-width="1.8"/><circle cx="40" cy="44.8" r="3.2" stroke-width="1.8"/><path d="M32.4 50.6L37.4 46.8" stroke-width="2.4"/><path d="M27.2 54.6L24.6 56.6M42 42.6L44 40.8M43.2 44L45.2 42.4" stroke-width="1.6"/></g><path d="M18.8 93L29.4 90.4L40.2 93L51 90.4V115.6L40.2 118.2L29.4 115.6L18.8 118.2Z" fill="none" stroke="#c9d8e3" stroke-width="1.4" stroke-linejoin="round"/><circle cx="23" cy="97" r="0.7" fill="#c9d8e3"/><circle cx="27" cy="101" r="1.1" fill="#c9d8e3"/><circle cx="33" cy="96" r="0.6" fill="#c9d8e3"/><circle cx="36" cy="104" r="0.8" fill="#c9d8e3"/><circle cx="44" cy="98" r="0.9" fill="#c9d8e3"/><circle cx="47" cy="104" r="0.6" fill="#c9d8e3"/><circle cx="25" cy="110" r="0.7" fill="#c9d8e3"/><circle cx="31" cy="112" r="0.6" fill="#c9d8e3"/><circle cx="38" cy="111" r="0.9" fill="#c9d8e3"/><circle cx="45" cy="112" r="0.7" fill="#c9d8e3"/><circle cx="42" cy="106" r="0.5" fill="#c9d8e3"/><circle cx="29" cy="106" r="0.5" fill="#c9d8e3"/><circle cx="34" cy="100" r="0.5" fill="#c9d8e3"/><circle cx="47" cy="95" r="0.5" fill="#c9d8e3"/><circle cx="22.5" cy="155" r="0.9" fill="#8fb2c9"/><circle cx="25" cy="160" r="0.7" fill="#8fb2c9"/><circle cx="24" cy="165" r="0.8" fill="#8fb2c9"/><circle cx="23" cy="170" r="0.6" fill="#8fb2c9"/><circle cx="28" cy="151" r="0.8" fill="#8fb2c9"/><circle cx="31" cy="147.5" r="0.9" fill="#8fb2c9"/><circle cx="35" cy="150" r="0.7" fill="#8fb2c9"/><circle cx="33" cy="155" r="1" fill="#8fb2c9"/><circle cx="37" cy="158" r="0.8" fill="#8fb2c9"/><circle cx="35" cy="162" r="0.6" fill="#8fb2c9"/><circle cx="40" cy="148" r="0.8" fill="#8fb2c9"/><circle cx="44" cy="151" r="0.7" fill="#8fb2c9"/><circle cx="42" cy="156" r="0.9" fill="#8fb2c9"/><circle cx="46" cy="158" r="0.7" fill="#8fb2c9"/><circle cx="48" cy="163" r="0.8" fill="#8fb2c9"/><circle cx="47" cy="168" r="0.7" fill="#8fb2c9"/><circle cx="43" cy="170" r="0.9" fill="#8fb2c9"/><circle cx="39" cy="167" r="0.6" fill="#8fb2c9"/><circle cx="36" cy="171" r="0.7" fill="#8fb2c9"/><circle cx="30" cy="168" r="0.6" fill="#8fb2c9"/><circle cx="27" cy="163" r="0.5" fill="#8fb2c9"/><circle cx="31" cy="160" r="0.5" fill="#8fb2c9"/><path d="M28 151L31 147.5L35 150M33 155L37 158L35 162M42 156L46 158L48 163M39 167L43 170L47 168" fill="none" stroke="#6f9ab8" stroke-width="0.6"/><rect x="16.5" y="199.5" width="37.5" height="23.5" fill="#c9d8e3"/><ellipse cx="34.5" cy="211" rx="15.5" ry="9.2" fill="#0e4063"/><path d="M36.5 213L47.5 224.5" stroke="#c9d8e3" stroke-width="3.4" stroke-linecap="round"/><path d="M35.5 212L38.5 215" stroke="#fff" stroke-width="4" stroke-linecap="round"/><circle cx="41" cy="207" r="0.8" fill="#fff"/><circle cx="44" cy="210" r="0.7" fill="#fff"/><circle cx="46" cy="206" r="0.6" fill="#fff"/><circle cx="42.5" cy="212.5" r="0.5" fill="#fff"/><path d="M24.00,254.30L24.88,256.29L27.04,256.51L25.43,257.96L25.88,260.09L24.00,259.00L22.12,260.09L22.57,257.96L20.96,256.51L23.12,256.29Z" fill="none" stroke="#c9d8e3" stroke-width="0.9"/><path d="M30 256.7H40 M30 258.7H47.5" stroke="#9dbace" stroke-width="0.9" fill="none"/><path d="M24.00,264.80L24.88,266.79L27.04,267.01L25.43,268.46L25.88,270.59L24.00,269.50L22.12,270.59L22.57,268.46L20.96,267.01L23.12,266.79Z" fill="none" stroke="#c9d8e3" stroke-width="0.9"/><path d="M30 267.2H42 M30 269.2H46.5" stroke="#9dbace" stroke-width="0.9" fill="none"/><path d="M24.00,275.30L24.88,277.29L27.04,277.51L25.43,278.96L25.88,281.09L24.00,280.00L22.12,281.09L22.57,278.96L20.96,277.51L23.12,277.29Z" fill="none" stroke="#c9d8e3" stroke-width="0.9"/><path d="M30 277.7H40 M30 279.7H45.5" stroke="#9dbace" stroke-width="0.9" fill="none"/><circle cx="35.5" cy="321" r="14.5" fill="#fff"/><path d="M24 324L28 318L32 321L37 319L41 316.5L47 315" fill="none" stroke="#d5dde3" stroke-width="0.7"/><circle cx="28" cy="318" r="0.6" fill="#c5cfd6"/><circle cx="32" cy="321" r="0.6" fill="#c5cfd6"/><circle cx="37" cy="319" r="0.6" fill="#c5cfd6"/><circle cx="41" cy="316.5" r="0.6" fill="#c5cfd6"/><circle cx="33" cy="327" r="0.6" fill="#c5cfd6"/><circle cx="39" cy="325" r="0.6" fill="#c5cfd6"/><circle cx="30" cy="313" r="0.6" fill="#c5cfd6"/><circle cx="43" cy="322" r="0.6" fill="#c5cfd6"/><circle cx="36" cy="330" r="0.6" fill="#c5cfd6"/><path d="M40.65,377.40L40.22,379.55L36.73,380.17L35.84,381.50L36.61,384.96L34.78,386.18L31.88,384.15L30.30,384.46L28.40,387.45L26.25,387.02L25.63,383.53L24.30,382.64L20.84,383.41L19.62,381.58L21.65,378.68L21.34,377.10L18.35,375.20L18.78,373.05L22.27,372.43L23.16,371.10L22.39,367.64L24.22,366.42L27.12,368.45L28.70,368.14L30.60,365.15L32.75,365.58L33.37,369.07L34.70,369.96L38.16,369.19L39.38,371.02L37.35,373.92L37.66,375.50Z M33.6 376.3A4.1 4.1 0 1 0 25.4 376.3A4.1 4.1 0 1 0 33.6 376.3Z" fill="#c9d8e3" fill-rule="evenodd"/><path d="M51.37,367.47L51.11,368.77L48.92,369.11L48.39,369.91L48.91,372.06L47.81,372.80L46.02,371.49L45.08,371.68L43.93,373.57L42.63,373.31L42.29,371.12L41.49,370.59L39.34,371.11L38.60,370.01L39.91,368.22L39.72,367.28L37.83,366.13L38.09,364.83L40.28,364.49L40.81,363.69L40.29,361.54L41.39,360.80L43.18,362.11L44.12,361.92L45.27,360.03L46.57,360.29L46.91,362.48L47.71,363.01L49.86,362.49L50.60,363.59L49.29,365.38L49.48,366.32Z M46.9 366.8A2.3 2.3 0 1 0 42.300000000000004 366.8A2.3 2.3 0 1 0 46.9 366.8Z" fill="#c9d8e3" fill-rule="evenodd"/><path d="M51.37,385.47L51.11,386.77L48.92,387.11L48.39,387.91L48.91,390.06L47.81,390.80L46.02,389.49L45.08,389.68L43.93,391.57L42.63,391.31L42.29,389.12L41.49,388.59L39.34,389.11L38.60,388.01L39.91,386.22L39.72,385.28L37.83,384.13L38.09,382.83L40.28,382.49L40.81,381.69L40.29,379.54L41.39,378.80L43.18,380.11L44.12,379.92L45.27,378.03L46.57,378.29L46.91,380.48L47.71,381.01L49.86,380.49L50.60,381.59L49.29,383.38L49.48,384.32Z M46.9 384.8A2.3 2.3 0 1 0 42.300000000000004 384.8A2.3 2.3 0 1 0 46.9 384.8Z" fill="#c9d8e3" fill-rule="evenodd"/><path d="M21 424.5H29.5C28 420.5 29.5 416.5 33 416.5C36.5 416.5 38 420.5 36.5 424.5H44.5V431.5C48 429.5 51 431.5 51 434.5C51 437.5 48 439.5 44.5 438V446H36C37.5 442 35.5 440 33 440C30.5 440 28.5 442 30 446H21V438C24.5 439.5 27 437.5 27 434.8C27 432 24.5 430 21 431.5Z" fill="#c9d8e3"/><path d="M28.6 618.6A10.5 10.5 0 1 0 41.4 618.6" fill="none" stroke="#c9d8e3" stroke-width="3.5" stroke-linecap="round"/><path d="M35 612.6V625" stroke="#c9d8e3" stroke-width="3.5" stroke-linecap="round"/><path d="M5.6 664.5C8.8 659 17.6 659 20.8 664.5C17.6 670 8.8 670 5.6 664.5Z" fill="#c9d8e3"/><circle cx="13.2" cy="664.5" r="3.3" fill="#0e4063"/><circle cx="13.2" cy="664.5" r="1.9" fill="#fff"/><path d="M31 661.5C31 656.5 39 656.5 39 661.5C39 665 35 665 35 668.5" fill="none" stroke="#c9d8e3" stroke-width="1.4"/><circle cx="35" cy="671.8" r="0.9" fill="#c9d8e3"/><circle cx="56.3" cy="664.5" r="6.6" fill="none" stroke="#c9d8e3" stroke-width="1.2"/><path d="M56.3 663.2V668.8" stroke="#c9d8e3" stroke-width="1.9"/><circle cx="56.3" cy="660.6" r="1.1" fill="#c9d8e3"/><circle cx="92.3" cy="41" r="10" fill="#fff"/><path d="M84.5 43L87.5 38.5L90.5 41L94 39.5L97 38L100.5 37.5" fill="none" stroke="#dfe5ea" stroke-width="0.6"/><circle cx="125.8" cy="41" r="10" fill="#fff"/><path d="M130.13 41.76L126.70 51.26" stroke="#124f78" stroke-width="1.6"/><path d="M127.30 45.13L117.36 46.91" stroke="#124f78" stroke-width="1.6"/><path d="M122.97 44.37L116.47 36.65" stroke="#124f78" stroke-width="1.6"/><path d="M121.47 40.24L124.90 30.74" stroke="#124f78" stroke-width="1.6"/><path d="M124.30 36.87L134.24 35.09" stroke="#124f78" stroke-width="1.6"/><path d="M128.63 37.63L135.13 45.35" stroke="#124f78" stroke-width="1.6"/><polygon points="130.13,41.76 127.30,45.13 122.97,44.37 121.47,40.24 124.30,36.87 128.63,37.63" fill="#124f78"/><circle cx="159" cy="41.2" r="10" fill="#c9d8e3"/><circle cx="159.00" cy="34.90" r="1.35" fill="#124f78"/><circle cx="164.99" cy="39.25" r="1.35" fill="#124f78"/><circle cx="162.70" cy="46.30" r="1.35" fill="#124f78"/><circle cx="155.30" cy="46.30" r="1.35" fill="#124f78"/><circle cx="153.01" cy="39.25" r="1.35" fill="#124f78"/><path d="M182.5 35V31.5H186M199 31.5H202.5V35M202.5 46V49.5H199M186 49.5H182.5V46" fill="none" stroke="#4b82a6" stroke-width="1.1"/><path d="M189.5 40.8H195.5" stroke="#a8c5d8" stroke-width="1.3"/><path d="M225.4 34.6A7.6 7.6 0 1 1 225.4 49.8" fill="none" stroke="#c9d8e3" stroke-width="2.6"/><path d="M225.4 49.8A7.6 7.6 0 0 1 219.2 37.8" fill="none" stroke="#c9d8e3" stroke-width="2.6" stroke-dasharray="2.9 1.9"/><path d="M227 29.6L220.2 34.6L227 39.6Z" fill="#c9d8e3"/><g stroke="#4f86ab" fill="none"><path d="M250.5 41.5L265 33.2L266.6 36L252.2 44.4Z" stroke-width="1"/><path d="M258.5 42V44.5M258.5 44.5L255.8 51M258.5 44.5L261.2 51M258.5 44.5V51" stroke-width="1"/></g><circle cx="252.5" cy="35.5" r="0.7" fill="#4f86ab"/><circle cx="254.5" cy="33" r="0.5" fill="#4f86ab"/><circle cx="292.2" cy="40.9" r="9.4" fill="none" stroke="#fff" stroke-width="1.5"/><circle cx="292.2" cy="40.9" r="4.2" fill="#fff"/><path d="M282.8 40.9H301.6M292.2 31.5V50.3" stroke="#fff" stroke-width="0.9"/><path d="M319.50,32.40L320.21,34.03L321.97,34.20L320.64,35.37L321.03,37.10L319.50,36.20L317.97,37.10L318.36,35.37L317.03,34.20L318.79,34.03Z" fill="none" stroke="#5d8fb2" stroke-width="0.8"/><path d="M324 34.3H330 M324 36H334.5" stroke="#4f84a8" stroke-width="0.8"/><path d="M319.50,38.60L320.21,40.23L321.97,40.40L320.64,41.57L321.03,43.30L319.50,42.40L317.97,43.30L318.36,41.57L317.03,40.40L318.79,40.23Z" fill="none" stroke="#5d8fb2" stroke-width="0.8"/><path d="M324 40.5H331 M324 42.2H334.0" stroke="#4f84a8" stroke-width="0.8"/><path d="M319.50,44.90L320.21,46.53L321.97,46.70L320.64,47.87L321.03,49.60L319.50,48.70L317.97,49.60L318.36,47.87L317.03,46.70L318.79,46.53Z" fill="none" stroke="#5d8fb2" stroke-width="0.8"/><path d="M324 46.8H332 M324 48.5H333.5" stroke="#4f84a8" stroke-width="0.8"/><rect x="350.7" y="31.6" width="2.6" height="19.2" fill="#dbe7ef"/><rect x="349.5" y="34.8" width="5" height="3.4" fill="#dbe7ef" stroke="#124f78" stroke-width="0.7"/><rect x="357.5" y="31.6" width="2.6" height="19.2" fill="#dbe7ef"/><rect x="356.3" y="38.9" width="5" height="3.4" fill="#dbe7ef" stroke="#124f78" stroke-width="0.7"/><rect x="364.3" y="31.6" width="2.6" height="19.2" fill="#dbe7ef"/><rect x="363.1" y="36.9" width="5" height="3.4" fill="#dbe7ef" stroke="#124f78" stroke-width="0.7"/><path d="M385.6 47.5H399C402.6 47.5 403.4 42.6 399.7 41.7C400.1 36.8 393.8 35.3 391.9 39.4C390 37.6 386.8 39.1 387.3 41.8C383.6 42 382.6 46.8 385.6 47.5Z" fill="none" stroke="#6a9cbd" stroke-width="1.1"/><path d="M417 50.5V41C417 36 420.5 32.5 425 32.2L428.5 37L431 33.5C433.5 35 434.8 38 434.8 41V50.5Z" fill="#c9d8e3"/><rect x="420" y="44" width="4.4" height="6.5" fill="#124f78"/><rect x="421" y="45" width="2.4" height="4.5" fill="#7fa8c4"/><path d="M427 38.5L432 33" stroke="#124f78" stroke-width="0.9"/><rect x="449.7" y="39.8" width="4.6" height="10.200000000000003" fill="none" stroke="#c9d8e3" stroke-width="1.2"/><rect x="456.7" y="32" width="5.4" height="18" fill="none" stroke="#c9d8e3" stroke-width="1.2"/><rect x="464.1" y="37.3" width="5" height="12.700000000000003" fill="none" stroke="#c9d8e3" stroke-width="1.2"/><path d="M485 43L490.5 38.6L495.5 43.6L500.8 38.4" fill="none" stroke="#b9d0df" stroke-width="1.4"/><circle cx="485" cy="43" r="1.6" fill="#124f78" stroke="#b9d0df" stroke-width="0.9"/><circle cx="490.5" cy="38.6" r="1.6" fill="#124f78" stroke="#b9d0df" stroke-width="0.9"/><circle cx="495.5" cy="43.6" r="1.6" fill="#124f78" stroke="#b9d0df" stroke-width="0.9"/><circle cx="500.8" cy="38.4" r="1.6" fill="#124f78" stroke="#b9d0df" stroke-width="0.9"/><path d="M522.6 44.8C518.2 41 520 32.3 525.6 32.3C531.2 32.3 533 41 528.6 44.8V46.6H522.6Z M523 48.2H528.2 M523.8 50H527.4" fill="none" stroke="#c3d7e4" stroke-width="1.15"/><path d="M550.8 33.6C553.5 33.6 556.5 32.8 559 31.6C561.5 32.8 564.5 33.6 567.2 33.6V41C567.2 46 563.5 49.3 559 51C554.5 49.3 550.8 46 550.8 41Z" fill="none" stroke="#5d8fb2" stroke-width="1.7"/><path d="M553.5 41.5L564.5 35.2M553.8 45.7L564.5 39.4" stroke="#5d8fb2" stroke-width="1.8"/><path d="M1155.28,31.70L1159.35,37.32L1166.18,36.10L1162.09,41.71L1165.36,47.83L1158.76,45.67L1153.95,50.67L1153.97,43.73L1147.72,40.70L1154.33,38.57Z" fill="#d0dfe9"/><path d="M1181.4 35V31.7H1185M1197.2 31.7H1200.8V35M1200.8 46.6V50H1197.2M1185 50H1181.4V46.6" fill="none" stroke="#5d8fb2" stroke-width="1"/><text x="1191.1" y="42.8" font-size="5.5" font-weight="bold" fill="#8fb2c9" text-anchor="middle">AF</text><rect x="1214.8" y="31.7" width="19" height="18.8" fill="none" stroke="#7fa8c4" stroke-width="1"/><circle cx="1225.3" cy="41.5" r="2" fill="none" stroke="#c9dce8" stroke-width="1"/><circle cx="1218.5" cy="36" r="1" fill="none" stroke="#7fa8c4" stroke-width="0.6"/><circle cx="1223" cy="34.5" r="1" fill="none" stroke="#7fa8c4" stroke-width="0.6"/><circle cx="1230.5" cy="36.5" r="1" fill="none" stroke="#7fa8c4" stroke-width="0.6"/><circle cx="1218.8" cy="45.8" r="1" fill="none" stroke="#7fa8c4" stroke-width="0.6"/><circle cx="1230" cy="46" r="1" fill="none" stroke="#7fa8c4" stroke-width="0.6"/><circle cx="1224.5" cy="48" r="1" fill="none" stroke="#7fa8c4" stroke-width="0.6"/><path d="M1252.4 44.6A7.6 7.6 0 1 0 1251.6 38.6" fill="none" stroke="#e8f0f5" stroke-width="1.9"/><path d="M1247.6 39L1255 38.4L1251.5 43.8Z" fill="#e8f0f5"/><path d="M1259.2 36.8V41.6L1262.4 43.4" fill="none" stroke="#e8f0f5" stroke-width="1.6"/><rect x="1282.5" y="31.7" width="19" height="18.8" fill="none" stroke="#7fa8c4" stroke-width="1"/><circle cx="1292" cy="41.2" r="1.6" fill="#c9dce8"/><circle cx="1286" cy="36" r="0.7" fill="#c9dce8"/><circle cx="1290.5" cy="34.5" r="0.7" fill="#c9dce8"/><circle cx="1296" cy="35.5" r="0.7" fill="#c9dce8"/><circle cx="1286.5" cy="45.8" r="0.7" fill="#c9dce8"/><circle cx="1297.5" cy="46" r="0.7" fill="#c9dce8"/><circle cx="1291" cy="48" r="0.7" fill="#c9dce8"/><circle cx="221.9" cy="89.2" r="8.8" fill="none" stroke="#c9dce8" stroke-width="1.2"/><path d="M215.5 95.4L207.3 102.4" stroke="#fff" stroke-width="1.9" stroke-linecap="round"/><path d="M218.3 89.2H225.5" stroke="#fff" stroke-width="1.4"/><path d="M221.9 85.6V92.8" stroke="#fff" stroke-width="1.4"/><circle cx="260.2" cy="89.2" r="8.8" fill="none" stroke="#c9dce8" stroke-width="1.2"/><path d="M253.79999999999998 95.4L245.6 102.4" stroke="#fff" stroke-width="1.9" stroke-linecap="round"/><path d="M256.59999999999997 89.2H263.8" stroke="#fff" stroke-width="1.4"/><path d="M283.2 80.8L292.6 90.2M296.6 94.2L306.3 104M283.2 85.6V80.8H288M306.3 99.2V104H301.5M291.8 95L297.2 89.4" fill="none" stroke="#c9dce8" stroke-width="1.1"/><path d="M419 85.6A8.6 8.6 0 1 0 419 102.8" fill="none" stroke="#fff" stroke-width="2.7"/><path d="M419 102.8A8.6 8.6 0 0 0 426.4 89.8" fill="none" stroke="#fff" stroke-width="2.7" stroke-dasharray="3.3 2.1"/><path d="M417.6 80L424.6 85.6L417.6 91.2Z" fill="#fff"/><path d="M449.6 100.6H457.4V86.4Z" fill="none" stroke="#c9d8e3" stroke-width="2.2"/><path d="M462.1 82.5V101.7H472.6Z" fill="#c9d8e3"/><rect x="489.2" y="80.6" width="5.9" height="5.9" fill="#dde7ee"/><rect x="489.2" y="89.5" width="5.9" height="5.9" fill="#dde7ee"/><rect x="489.2" y="98.4" width="5.9" height="5.9" fill="#dde7ee"/><rect x="498.1" y="80.6" width="5.9" height="5.9" fill="#dde7ee"/><rect x="498.1" y="89.5" width="5.9" height="5.9" fill="#dde7ee"/><rect x="498.1" y="98.4" width="5.9" height="5.9" fill="#dde7ee"/><rect x="507" y="80.6" width="5.9" height="5.9" fill="#dde7ee"/><rect x="507" y="89.5" width="5.9" height="5.9" fill="#dde7ee"/><rect x="507" y="98.4" width="5.9" height="5.9" fill="#dde7ee"/><rect x="527.3" y="80.4" width="24" height="23.4" fill="none" stroke="#7fa3bd" stroke-width="0.7"/><circle cx="541" cy="92.2" r="2.6" fill="none" stroke="#fff" stroke-width="1.5"/><circle cx="538" cy="84.3" r="1.8" fill="none" stroke="#b9d0df" stroke-width="1.4"/><circle cx="532" cy="88.5" r="1.5" fill="none" stroke="#9dbace" stroke-width="0.8"/><circle cx="547.5" cy="85.5" r="1.4" fill="none" stroke="#9dbace" stroke-width="0.8"/><circle cx="532" cy="97.5" r="1.5" fill="none" stroke="#9dbace" stroke-width="0.8"/><circle cx="546.5" cy="98" r="1" fill="none" stroke="#9dbace" stroke-width="0.8"/><circle cx="538.5" cy="101" r="0.8" fill="none" stroke="#9dbace" stroke-width="0.8"/><g fill="none" stroke="#a9c5d8"><circle cx="577.1" cy="92" r="8.2" stroke-width="1"/><circle cx="577.1" cy="92" r="5" stroke-width="1"/><path d="M565 92H572.6M581.6 92H589.2M577.1 80V87.5M577.1 96.5V104" stroke-width="1.3"/></g><circle cx="577.1" cy="92" r="1.1" fill="#7fa8c4"/><path d="M606.2 101.4L624.6 83.4" stroke="#fff" stroke-width="4.6" stroke-linecap="round"/><path d="M620.4 87.6L623.6 84.4" stroke="#2a97e2" stroke-width="1.2" stroke-linecap="round"/><path d="M611.3 82.2L612.2 84.6L614.6 85.5L612.2 86.4L611.3 88.8L610.4 86.4L608 85.5L610.4 84.6Z" fill="#fff"/><path d="M625.4 90L626 91.3L627.3 91.9L626 92.5L625.4 93.8L624.8 92.5L623.5 91.9L624.8 91.3Z" fill="#fff"/><circle cx="606.8" cy="82" r="0.8" fill="#fff"/><circle cx="616.3" cy="81.8" r="0.7" fill="#fff"/><path d="M653.90,80.60L657.31,88.71L666.07,89.44L659.42,95.19L661.42,103.76L653.90,99.20L646.38,103.76L648.38,95.19L641.73,89.44L650.49,88.71Z" fill="none" stroke="#e8f4fc" stroke-width="1.4" stroke-linejoin="miter"/><circle cx="148" cy="87.8" r="7.6" fill="none" stroke="#111" stroke-width="1.1"/><path d="M144 83.8L152 91.8M152 83.8L144 91.8" stroke="#111" stroke-width="1.2"/><circle cx="148" cy="111.2" r="7.6" fill="none" stroke="#111" stroke-width="1.1"/><path d="M144 107.2L152 115.2M152 107.2L144 115.2" stroke="#111" stroke-width="1.2"/><path d="M139 168.2H147A9.3 9.3 0 0 1 147 186.8H139Z" fill="#7e9bb1"/><circle cx="930.3" cy="294.3" r="7" fill="#eef3f6"/><path d="M932.96 294.77L930.93 301.47" stroke="#9fb5c4" stroke-width="1.1"/><path d="M931.22 296.84L924.40 298.43" stroke="#9fb5c4" stroke-width="1.1"/><path d="M928.56 296.37L923.77 291.26" stroke="#9fb5c4" stroke-width="1.1"/><path d="M927.64 293.83L929.67 287.13" stroke="#9fb5c4" stroke-width="1.1"/><path d="M929.38 291.76L936.20 290.17" stroke="#9fb5c4" stroke-width="1.1"/><path d="M932.04 292.23L936.83 297.34" stroke="#9fb5c4" stroke-width="1.1"/><polygon points="932.96,294.77 931.22,296.84 928.56,296.37 927.64,293.83 929.38,291.76 932.04,292.23" fill="#9fb5c4"/></svg>
<div style="left:0px;top:0px;width:1px;height:700px;background:rgba(255,255,255,0.16);"></div>
</div></body></html>
